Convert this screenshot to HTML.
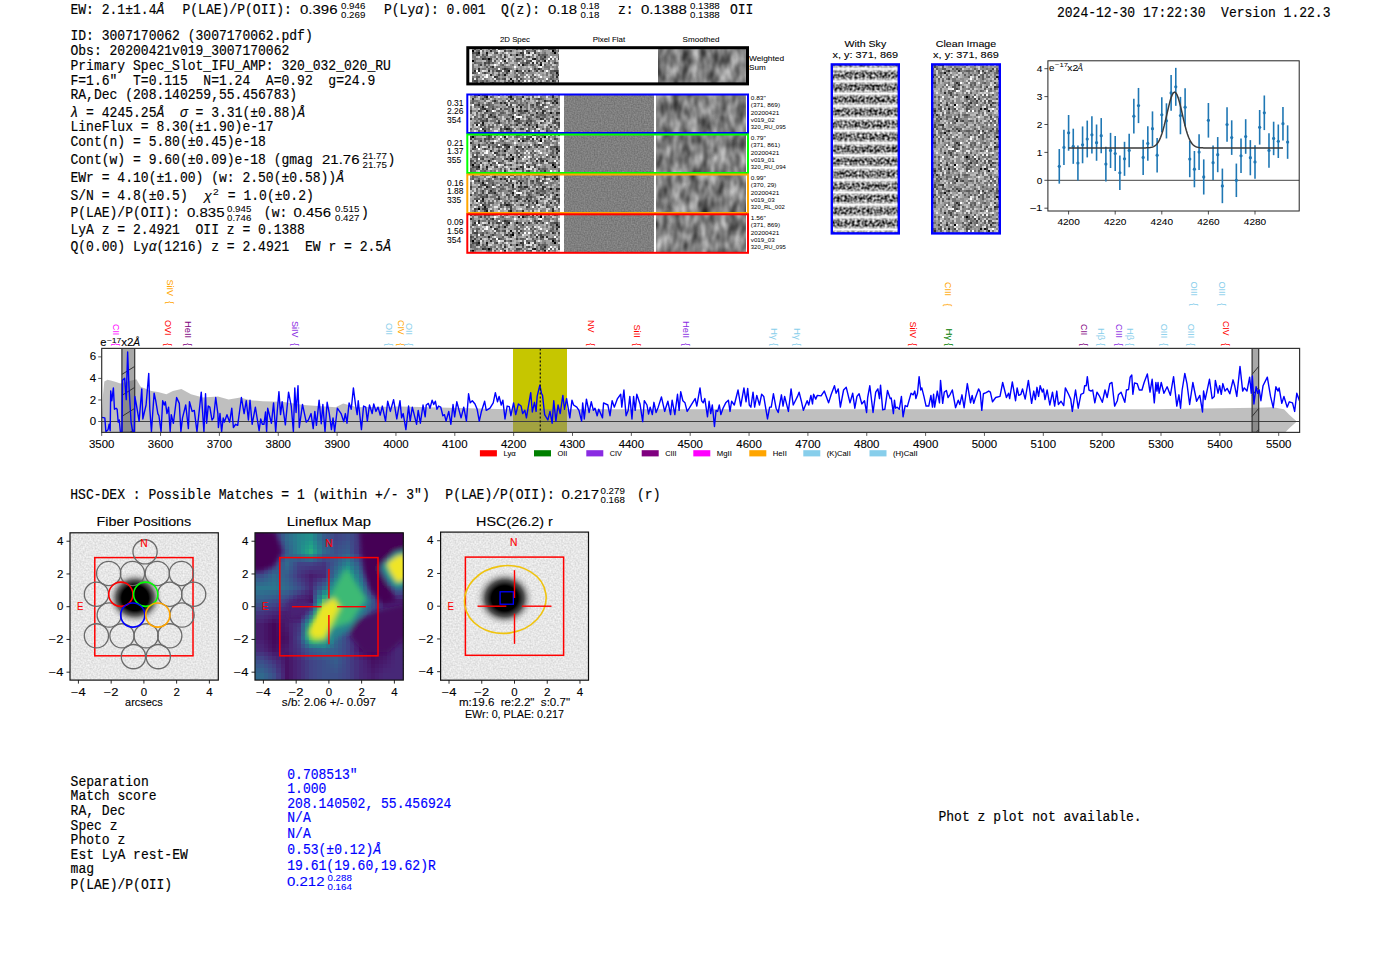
<!DOCTYPE html>
<html><head><meta charset="utf-8"><title>ELiXer report</title>
<style>html,body{margin:0;padding:0;background:#fff;overflow:hidden;width:1400px;height:953px}svg{display:block}</style>
</head><body>
<svg width="1400" height="953" viewBox="0 0 1400 953">
<defs><filter id="nz" x="0" y="0" width="1" height="1" color-interpolation-filters="sRGB"><feTurbulence type="fractalNoise" baseFrequency="0.42" numOctaves="1" seed="7"/><feColorMatrix type="matrix" values="1 0 0 0 0 1 0 0 0 0 1 0 0 0 0 0 0 0 0 1"/><feComponentTransfer><feFuncR type="linear" slope="1.45" intercept="-0.17"/><feFuncG type="linear" slope="1.45" intercept="-0.17"/><feFuncB type="linear" slope="1.45" intercept="-0.17"/><feFuncA type="linear" slope="0" intercept="1"/></feComponentTransfer></filter><filter id="nz2" x="0" y="0" width="1" height="1" color-interpolation-filters="sRGB"><feTurbulence type="fractalNoise" baseFrequency="0.42" numOctaves="1" seed="11"/><feColorMatrix type="matrix" values="1 0 0 0 0 1 0 0 0 0 1 0 0 0 0 0 0 0 0 1"/><feComponentTransfer><feFuncR type="linear" slope="1.45" intercept="-0.17"/><feFuncG type="linear" slope="1.45" intercept="-0.17"/><feFuncB type="linear" slope="1.45" intercept="-0.17"/><feFuncA type="linear" slope="0" intercept="1"/></feComponentTransfer></filter><filter id="sm" x="0" y="0" width="1" height="1" color-interpolation-filters="sRGB"><feTurbulence type="fractalNoise" baseFrequency="0.11 0.06" numOctaves="2" seed="5"/><feColorMatrix type="matrix" values="1 0 0 0 0 1 0 0 0 0 1 0 0 0 0 0 0 0 0 1"/><feComponentTransfer><feFuncR type="linear" slope="0.8" intercept="0.1"/><feFuncG type="linear" slope="0.8" intercept="0.1"/><feFuncB type="linear" slope="0.8" intercept="0.1"/><feFuncA type="linear" slope="0" intercept="1"/></feComponentTransfer></filter><filter id="sm2" x="0" y="0" width="1" height="1" color-interpolation-filters="sRGB"><feTurbulence type="fractalNoise" baseFrequency="0.11 0.06" numOctaves="2" seed="9"/><feColorMatrix type="matrix" values="1 0 0 0 0 1 0 0 0 0 1 0 0 0 0 0 0 0 0 1"/><feComponentTransfer><feFuncR type="linear" slope="0.8" intercept="0.1"/><feFuncG type="linear" slope="0.8" intercept="0.1"/><feFuncB type="linear" slope="0.8" intercept="0.1"/><feFuncA type="linear" slope="0" intercept="1"/></feComponentTransfer></filter><filter id="pf" x="0" y="0" width="1" height="1" color-interpolation-filters="sRGB"><feTurbulence type="fractalNoise" baseFrequency="0.7" numOctaves="1" seed="3"/><feColorMatrix type="matrix" values="1 0 0 0 0 1 0 0 0 0 1 0 0 0 0 0 0 0 0 1"/><feComponentTransfer><feFuncR type="linear" slope="0.22" intercept="0.39"/><feFuncG type="linear" slope="0.22" intercept="0.39"/><feFuncB type="linear" slope="0.22" intercept="0.39"/><feFuncA type="linear" slope="0" intercept="1"/></feComponentTransfer></filter><filter id="cl" x="0" y="0" width="1" height="1" color-interpolation-filters="sRGB"><feTurbulence type="fractalNoise" baseFrequency="0.5" numOctaves="1" seed="13"/><feColorMatrix type="matrix" values="1 0 0 0 0 1 0 0 0 0 1 0 0 0 0 0 0 0 0 1"/><feComponentTransfer><feFuncR type="linear" slope="1.1" intercept="0.0"/><feFuncG type="linear" slope="1.1" intercept="0.0"/><feFuncB type="linear" slope="1.1" intercept="0.0"/><feFuncA type="linear" slope="0" intercept="1"/></feComponentTransfer></filter><filter id="sky" x="0" y="0" width="1" height="1" color-interpolation-filters="sRGB"><feTurbulence type="fractalNoise" baseFrequency="0.4" numOctaves="1" seed="17"/><feColorMatrix type="matrix" values="1 0 0 0 0 1 0 0 0 0 1 0 0 0 0 0 0 0 0 1"/><feComponentTransfer><feFuncR type="linear" slope="1.7" intercept="-0.4"/><feFuncG type="linear" slope="1.7" intercept="-0.4"/><feFuncB type="linear" slope="1.7" intercept="-0.4"/><feFuncA type="linear" slope="0" intercept="1"/></feComponentTransfer></filter><filter id="bg" x="0" y="0" width="1" height="1" color-interpolation-filters="sRGB"><feTurbulence type="fractalNoise" baseFrequency="0.6" numOctaves="1" seed="21"/><feColorMatrix type="matrix" values="1 0 0 0 0 1 0 0 0 0 1 0 0 0 0 0 0 0 0 1"/><feComponentTransfer><feFuncR type="linear" slope="0.22" intercept="0.795"/><feFuncG type="linear" slope="0.22" intercept="0.795"/><feFuncB type="linear" slope="0.22" intercept="0.795"/><feFuncA type="linear" slope="0" intercept="1"/></feComponentTransfer></filter><pattern id="bp1" patternUnits="userSpaceOnUse" width="90" height="38"><path d="M62 6h2v2h-2zM12 12h2v2h-2zM22 12h2v2h-2zM14 14h2v2h-2zM38 20h2v2h-2zM22 22h2v2h-2zM0 26h2v2h-2z" fill="#000000"/><path d="M60 2h2v2h-2zM38 8h2v2h-2zM28 14h2v2h-2zM36 14h2v2h-2zM66 16h2v2h-2zM84 20h2v2h-2zM4 22h2v2h-2zM54 22h2v2h-2zM72 26h2v2h-2zM58 32h2v2h-2zM66 32h2v2h-2zM16 34h2v2h-2zM54 36h2v2h-2z" fill="#171717"/><path d="M16 0h2v2h-2zM44 0h2v2h-2zM12 4h2v2h-2zM62 4h2v2h-2zM68 4h2v2h-2zM56 6h2v2h-2zM60 6h2v2h-2zM2 8h2v2h-2zM6 8h2v2h-2zM86 8h2v2h-2zM40 12h2v2h-2zM70 14h2v2h-2zM78 14h2v2h-2zM4 18h2v2h-2zM54 18h2v2h-2zM32 20h2v2h-2zM82 20h2v2h-2zM0 24h2v2h-2zM82 24h2v2h-2zM68 26h2v2h-2zM20 28h2v2h-2zM42 28h2v2h-2zM28 30h2v2h-2zM54 30h2v2h-2zM88 30h2v2h-2zM24 32h2v2h-2zM28 32h2v2h-2zM38 32h2v2h-2zM78 32h2v2h-2zM18 36h2v2h-2zM40 36h2v2h-2z" fill="#2e2e2e"/><path d="M46 0h2v2h-2zM54 2h2v2h-2zM70 2h2v2h-2zM18 4h2v2h-2zM24 4h2v2h-2zM26 4h2v2h-2zM0 6h2v2h-2zM32 6h2v2h-2zM42 6h2v2h-2zM0 8h2v2h-2zM20 8h2v2h-2zM60 8h2v2h-2zM12 10h2v2h-2zM24 10h2v2h-2zM30 10h2v2h-2zM48 10h2v2h-2zM66 10h2v2h-2zM54 12h2v2h-2zM60 12h2v2h-2zM84 12h2v2h-2zM22 14h2v2h-2zM26 14h2v2h-2zM46 14h2v2h-2zM72 14h2v2h-2zM84 14h2v2h-2zM26 16h2v2h-2zM36 16h2v2h-2zM60 16h2v2h-2zM72 16h2v2h-2zM88 16h2v2h-2zM78 18h2v2h-2zM2 20h2v2h-2zM18 20h2v2h-2zM34 20h2v2h-2zM40 20h2v2h-2zM66 20h2v2h-2zM68 20h2v2h-2zM20 22h2v2h-2zM38 22h2v2h-2zM80 22h2v2h-2zM14 24h2v2h-2zM20 24h2v2h-2zM34 24h2v2h-2zM38 24h2v2h-2zM76 24h2v2h-2zM86 24h2v2h-2zM30 26h2v2h-2zM56 30h2v2h-2zM84 30h2v2h-2zM2 32h2v2h-2zM14 32h2v2h-2zM16 32h2v2h-2zM46 32h2v2h-2zM48 32h2v2h-2zM56 32h2v2h-2zM86 32h2v2h-2zM22 34h2v2h-2zM34 34h2v2h-2zM56 34h2v2h-2zM72 34h2v2h-2zM48 36h2v2h-2z" fill="#454545"/><path d="M12 0h2v2h-2zM26 0h2v2h-2zM28 0h2v2h-2zM66 0h2v2h-2zM68 0h2v2h-2zM80 0h2v2h-2zM84 0h2v2h-2zM10 2h2v2h-2zM22 2h2v2h-2zM26 2h2v2h-2zM46 2h2v2h-2zM48 2h2v2h-2zM52 2h2v2h-2zM66 2h2v2h-2zM82 2h2v2h-2zM6 4h2v2h-2zM14 4h2v2h-2zM22 4h2v2h-2zM32 4h2v2h-2zM36 4h2v2h-2zM44 4h2v2h-2zM58 4h2v2h-2zM82 4h2v2h-2zM26 6h2v2h-2zM30 6h2v2h-2zM54 6h2v2h-2zM80 6h2v2h-2zM84 6h2v2h-2zM88 6h2v2h-2zM22 8h2v2h-2zM26 8h2v2h-2zM52 8h2v2h-2zM76 8h2v2h-2zM0 10h2v2h-2zM8 10h2v2h-2zM10 10h2v2h-2zM14 10h2v2h-2zM20 10h2v2h-2zM42 10h2v2h-2zM44 10h2v2h-2zM50 10h2v2h-2zM70 10h2v2h-2zM72 10h2v2h-2zM82 10h2v2h-2zM14 12h2v2h-2zM18 12h2v2h-2zM20 12h2v2h-2zM28 12h2v2h-2zM76 12h2v2h-2zM24 14h2v2h-2zM44 14h2v2h-2zM2 16h2v2h-2zM4 16h2v2h-2zM20 16h2v2h-2zM28 16h2v2h-2zM32 16h2v2h-2zM50 16h2v2h-2zM54 16h2v2h-2zM0 18h2v2h-2zM18 18h2v2h-2zM20 18h2v2h-2zM34 18h2v2h-2zM72 18h2v2h-2zM76 18h2v2h-2zM0 20h2v2h-2zM10 20h2v2h-2zM36 20h2v2h-2zM46 20h2v2h-2zM52 20h2v2h-2zM70 20h2v2h-2zM8 22h2v2h-2zM40 22h2v2h-2zM44 22h2v2h-2zM66 22h2v2h-2zM76 22h2v2h-2zM78 22h2v2h-2zM88 22h2v2h-2zM16 24h2v2h-2zM24 24h2v2h-2zM36 24h2v2h-2zM42 24h2v2h-2zM56 24h2v2h-2zM72 24h2v2h-2zM78 24h2v2h-2zM4 26h2v2h-2zM34 26h2v2h-2zM52 26h2v2h-2zM74 26h2v2h-2zM82 26h2v2h-2zM36 28h2v2h-2zM40 28h2v2h-2zM0 30h2v2h-2zM38 30h2v2h-2zM52 30h2v2h-2zM58 30h2v2h-2zM10 32h2v2h-2zM12 32h2v2h-2zM42 32h2v2h-2zM50 32h2v2h-2zM54 32h2v2h-2zM68 32h2v2h-2zM70 32h2v2h-2zM74 32h2v2h-2zM10 34h2v2h-2zM24 34h2v2h-2zM12 36h2v2h-2zM16 36h2v2h-2zM66 36h2v2h-2zM82 36h2v2h-2z" fill="#5c5c5c"/><path d="M10 0h2v2h-2zM22 0h2v2h-2zM64 0h2v2h-2zM8 2h2v2h-2zM12 2h2v2h-2zM16 2h2v2h-2zM34 2h2v2h-2zM72 2h2v2h-2zM88 2h2v2h-2zM0 4h2v2h-2zM8 4h2v2h-2zM30 4h2v2h-2zM54 4h2v2h-2zM72 4h2v2h-2zM2 6h2v2h-2zM4 6h2v2h-2zM18 6h2v2h-2zM20 6h2v2h-2zM40 6h2v2h-2zM44 6h2v2h-2zM58 6h2v2h-2zM68 6h2v2h-2zM70 6h2v2h-2zM16 8h2v2h-2zM34 8h2v2h-2zM40 8h2v2h-2zM58 8h2v2h-2zM66 8h2v2h-2zM80 8h2v2h-2zM2 10h2v2h-2zM38 10h2v2h-2zM52 10h2v2h-2zM74 10h2v2h-2zM86 10h2v2h-2zM26 12h2v2h-2zM32 12h2v2h-2zM44 12h2v2h-2zM58 12h2v2h-2zM72 12h2v2h-2zM78 12h2v2h-2zM82 12h2v2h-2zM4 14h2v2h-2zM12 14h2v2h-2zM52 14h2v2h-2zM76 14h2v2h-2zM88 14h2v2h-2zM0 16h2v2h-2zM6 16h2v2h-2zM18 16h2v2h-2zM22 16h2v2h-2zM68 16h2v2h-2zM82 16h2v2h-2zM2 18h2v2h-2zM22 18h2v2h-2zM24 18h2v2h-2zM30 18h2v2h-2zM32 18h2v2h-2zM40 18h2v2h-2zM44 18h2v2h-2zM50 18h2v2h-2zM86 18h2v2h-2zM4 20h2v2h-2zM14 20h2v2h-2zM24 20h2v2h-2zM26 20h2v2h-2zM58 20h2v2h-2zM86 20h2v2h-2zM2 22h2v2h-2zM14 22h2v2h-2zM24 22h2v2h-2zM36 22h2v2h-2zM64 22h2v2h-2zM68 22h2v2h-2zM72 22h2v2h-2zM86 22h2v2h-2zM8 24h2v2h-2zM26 24h2v2h-2zM28 24h2v2h-2zM30 24h2v2h-2zM40 24h2v2h-2zM50 24h2v2h-2zM54 24h2v2h-2zM70 24h2v2h-2zM74 24h2v2h-2zM10 26h2v2h-2zM22 26h2v2h-2zM28 26h2v2h-2zM38 26h2v2h-2zM50 26h2v2h-2zM62 26h2v2h-2zM76 26h2v2h-2zM80 26h2v2h-2zM88 26h2v2h-2zM4 28h2v2h-2zM6 28h2v2h-2zM8 28h2v2h-2zM12 28h2v2h-2zM16 28h2v2h-2zM22 28h2v2h-2zM46 28h2v2h-2zM48 28h2v2h-2zM54 28h2v2h-2zM84 28h2v2h-2zM8 30h2v2h-2zM16 30h2v2h-2zM22 30h2v2h-2zM24 30h2v2h-2zM32 30h2v2h-2zM34 30h2v2h-2zM42 30h2v2h-2zM44 30h2v2h-2zM46 30h2v2h-2zM60 30h2v2h-2zM66 30h2v2h-2zM86 30h2v2h-2zM0 32h2v2h-2zM18 32h2v2h-2zM22 32h2v2h-2zM64 32h2v2h-2zM80 32h2v2h-2zM84 32h2v2h-2zM6 34h2v2h-2zM12 34h2v2h-2zM18 34h2v2h-2zM32 34h2v2h-2zM36 34h2v2h-2zM42 34h2v2h-2zM48 34h2v2h-2zM52 34h2v2h-2zM64 34h2v2h-2zM68 34h2v2h-2zM70 34h2v2h-2zM76 34h2v2h-2zM6 36h2v2h-2zM20 36h2v2h-2zM52 36h2v2h-2zM70 36h2v2h-2zM72 36h2v2h-2z" fill="#737373"/><path d="M24 0h2v2h-2zM32 0h2v2h-2zM48 0h2v2h-2zM52 0h2v2h-2zM54 0h2v2h-2zM58 0h2v2h-2zM72 0h2v2h-2zM76 0h2v2h-2zM82 0h2v2h-2zM86 0h2v2h-2zM0 2h2v2h-2zM2 2h2v2h-2zM14 2h2v2h-2zM36 2h2v2h-2zM42 2h2v2h-2zM50 2h2v2h-2zM74 2h2v2h-2zM80 2h2v2h-2zM28 4h2v2h-2zM34 4h2v2h-2zM38 4h2v2h-2zM48 4h2v2h-2zM66 4h2v2h-2zM76 4h2v2h-2zM86 4h2v2h-2zM6 6h2v2h-2zM8 6h2v2h-2zM14 6h2v2h-2zM24 6h2v2h-2zM46 6h2v2h-2zM48 6h2v2h-2zM50 6h2v2h-2zM66 6h2v2h-2zM82 6h2v2h-2zM12 8h2v2h-2zM28 8h2v2h-2zM32 8h2v2h-2zM36 8h2v2h-2zM48 8h2v2h-2zM50 8h2v2h-2zM82 8h2v2h-2zM18 10h2v2h-2zM22 10h2v2h-2zM26 10h2v2h-2zM54 10h2v2h-2zM68 10h2v2h-2zM84 10h2v2h-2zM2 12h2v2h-2zM4 12h2v2h-2zM16 12h2v2h-2zM36 12h2v2h-2zM42 12h2v2h-2zM56 12h2v2h-2zM80 12h2v2h-2zM2 14h2v2h-2zM10 14h2v2h-2zM16 14h2v2h-2zM20 14h2v2h-2zM32 14h2v2h-2zM66 14h2v2h-2zM68 14h2v2h-2zM86 14h2v2h-2zM10 16h2v2h-2zM12 16h2v2h-2zM14 16h2v2h-2zM16 16h2v2h-2zM24 16h2v2h-2zM34 16h2v2h-2zM44 16h2v2h-2zM48 16h2v2h-2zM62 16h2v2h-2zM64 16h2v2h-2zM70 16h2v2h-2zM6 18h2v2h-2zM8 18h2v2h-2zM36 18h2v2h-2zM42 18h2v2h-2zM48 18h2v2h-2zM56 18h2v2h-2zM64 18h2v2h-2zM80 18h2v2h-2zM82 18h2v2h-2zM22 20h2v2h-2zM28 20h2v2h-2zM30 20h2v2h-2zM50 20h2v2h-2zM74 20h2v2h-2zM76 20h2v2h-2zM12 22h2v2h-2zM52 22h2v2h-2zM58 22h2v2h-2zM60 22h2v2h-2zM12 24h2v2h-2zM44 24h2v2h-2zM66 24h2v2h-2zM6 26h2v2h-2zM8 26h2v2h-2zM16 26h2v2h-2zM60 26h2v2h-2zM84 26h2v2h-2zM14 28h2v2h-2zM28 28h2v2h-2zM34 28h2v2h-2zM50 28h2v2h-2zM52 28h2v2h-2zM56 28h2v2h-2zM58 28h2v2h-2zM60 28h2v2h-2zM70 28h2v2h-2zM82 28h2v2h-2zM4 30h2v2h-2zM6 30h2v2h-2zM14 30h2v2h-2zM30 30h2v2h-2zM40 30h2v2h-2zM50 30h2v2h-2zM62 30h2v2h-2zM70 30h2v2h-2zM76 30h2v2h-2zM78 30h2v2h-2zM82 30h2v2h-2zM44 32h2v2h-2zM14 34h2v2h-2zM26 34h2v2h-2zM38 34h2v2h-2zM54 34h2v2h-2zM58 34h2v2h-2zM78 34h2v2h-2zM80 34h2v2h-2zM82 34h2v2h-2zM88 34h2v2h-2zM2 36h2v2h-2zM14 36h2v2h-2zM26 36h2v2h-2zM42 36h2v2h-2zM46 36h2v2h-2zM50 36h2v2h-2zM56 36h2v2h-2zM64 36h2v2h-2zM74 36h2v2h-2z" fill="#8b8b8b"/><path d="M2 0h2v2h-2zM6 0h2v2h-2zM8 0h2v2h-2zM14 0h2v2h-2zM20 0h2v2h-2zM38 0h2v2h-2zM40 0h2v2h-2zM50 0h2v2h-2zM60 0h2v2h-2zM62 0h2v2h-2zM70 0h2v2h-2zM4 2h2v2h-2zM18 2h2v2h-2zM28 2h2v2h-2zM30 2h2v2h-2zM38 2h2v2h-2zM76 2h2v2h-2zM78 2h2v2h-2zM86 2h2v2h-2zM4 4h2v2h-2zM40 4h2v2h-2zM42 4h2v2h-2zM60 4h2v2h-2zM64 4h2v2h-2zM70 4h2v2h-2zM84 4h2v2h-2zM10 6h2v2h-2zM12 6h2v2h-2zM22 6h2v2h-2zM36 6h2v2h-2zM38 6h2v2h-2zM78 6h2v2h-2zM8 8h2v2h-2zM10 8h2v2h-2zM18 8h2v2h-2zM30 8h2v2h-2zM46 8h2v2h-2zM62 8h2v2h-2zM68 8h2v2h-2zM70 8h2v2h-2zM74 8h2v2h-2zM28 10h2v2h-2zM64 10h2v2h-2zM88 10h2v2h-2zM6 12h2v2h-2zM8 12h2v2h-2zM24 12h2v2h-2zM38 12h2v2h-2zM46 12h2v2h-2zM62 12h2v2h-2zM66 12h2v2h-2zM0 14h2v2h-2zM6 14h2v2h-2zM8 14h2v2h-2zM34 14h2v2h-2zM38 14h2v2h-2zM40 14h2v2h-2zM50 14h2v2h-2zM58 14h2v2h-2zM60 14h2v2h-2zM8 16h2v2h-2zM42 16h2v2h-2zM46 16h2v2h-2zM56 16h2v2h-2zM86 16h2v2h-2zM12 18h2v2h-2zM16 18h2v2h-2zM38 18h2v2h-2zM88 18h2v2h-2zM6 20h2v2h-2zM20 20h2v2h-2zM44 20h2v2h-2zM54 20h2v2h-2zM62 20h2v2h-2zM64 20h2v2h-2zM72 20h2v2h-2zM88 20h2v2h-2zM0 22h2v2h-2zM10 22h2v2h-2zM26 22h2v2h-2zM28 22h2v2h-2zM30 22h2v2h-2zM48 22h2v2h-2zM70 22h2v2h-2zM4 24h2v2h-2zM6 24h2v2h-2zM18 24h2v2h-2zM22 24h2v2h-2zM32 24h2v2h-2zM46 24h2v2h-2zM58 24h2v2h-2zM64 24h2v2h-2zM18 26h2v2h-2zM32 26h2v2h-2zM36 26h2v2h-2zM48 26h2v2h-2zM54 26h2v2h-2zM66 26h2v2h-2zM78 26h2v2h-2zM2 28h2v2h-2zM10 28h2v2h-2zM24 28h2v2h-2zM26 28h2v2h-2zM32 28h2v2h-2zM38 28h2v2h-2zM62 28h2v2h-2zM68 28h2v2h-2zM72 28h2v2h-2zM76 28h2v2h-2zM86 28h2v2h-2zM2 30h2v2h-2zM20 30h2v2h-2zM26 30h2v2h-2zM36 30h2v2h-2zM68 30h2v2h-2zM72 30h2v2h-2zM74 30h2v2h-2zM8 32h2v2h-2zM30 32h2v2h-2zM62 32h2v2h-2zM76 32h2v2h-2zM0 34h2v2h-2zM2 34h2v2h-2zM8 34h2v2h-2zM20 34h2v2h-2zM62 34h2v2h-2zM74 34h2v2h-2zM84 34h2v2h-2zM0 36h2v2h-2zM4 36h2v2h-2zM10 36h2v2h-2zM24 36h2v2h-2zM28 36h2v2h-2zM30 36h2v2h-2zM60 36h2v2h-2zM62 36h2v2h-2zM78 36h2v2h-2zM80 36h2v2h-2z" fill="#a2a2a2"/><path d="M4 0h2v2h-2zM18 0h2v2h-2zM30 0h2v2h-2zM56 0h2v2h-2zM88 0h2v2h-2zM20 2h2v2h-2zM40 2h2v2h-2zM58 2h2v2h-2zM62 2h2v2h-2zM10 4h2v2h-2zM16 4h2v2h-2zM46 4h2v2h-2zM50 4h2v2h-2zM52 4h2v2h-2zM56 4h2v2h-2zM80 4h2v2h-2zM88 4h2v2h-2zM16 6h2v2h-2zM34 6h2v2h-2zM74 6h2v2h-2zM76 6h2v2h-2zM4 8h2v2h-2zM24 8h2v2h-2zM42 8h2v2h-2zM54 8h2v2h-2zM56 8h2v2h-2zM72 8h2v2h-2zM78 8h2v2h-2zM84 8h2v2h-2zM88 8h2v2h-2zM32 10h2v2h-2zM36 10h2v2h-2zM40 10h2v2h-2zM58 10h2v2h-2zM62 10h2v2h-2zM78 10h2v2h-2zM80 10h2v2h-2zM0 12h2v2h-2zM10 12h2v2h-2zM34 12h2v2h-2zM64 12h2v2h-2zM68 12h2v2h-2zM86 12h2v2h-2zM54 14h2v2h-2zM62 14h2v2h-2zM64 14h2v2h-2zM30 16h2v2h-2zM52 16h2v2h-2zM74 16h2v2h-2zM26 18h2v2h-2zM62 18h2v2h-2zM66 18h2v2h-2zM68 18h2v2h-2zM70 18h2v2h-2zM74 18h2v2h-2zM42 20h2v2h-2zM48 20h2v2h-2zM60 20h2v2h-2zM16 22h2v2h-2zM32 22h2v2h-2zM34 22h2v2h-2zM46 22h2v2h-2zM60 24h2v2h-2zM62 24h2v2h-2zM88 24h2v2h-2zM14 26h2v2h-2zM20 26h2v2h-2zM24 26h2v2h-2zM26 26h2v2h-2zM40 26h2v2h-2zM42 26h2v2h-2zM58 26h2v2h-2zM64 26h2v2h-2zM86 26h2v2h-2zM30 28h2v2h-2zM44 28h2v2h-2zM66 28h2v2h-2zM74 28h2v2h-2zM80 28h2v2h-2zM12 30h2v2h-2zM18 30h2v2h-2zM64 30h2v2h-2zM4 32h2v2h-2zM20 32h2v2h-2zM36 32h2v2h-2zM40 32h2v2h-2zM82 32h2v2h-2zM88 32h2v2h-2zM4 34h2v2h-2zM30 34h2v2h-2zM40 34h2v2h-2zM44 34h2v2h-2zM46 34h2v2h-2zM50 34h2v2h-2zM60 34h2v2h-2zM66 34h2v2h-2zM86 34h2v2h-2zM8 36h2v2h-2zM34 36h2v2h-2zM38 36h2v2h-2zM44 36h2v2h-2zM58 36h2v2h-2zM86 36h2v2h-2z" fill="#b9b9b9"/><path d="M56 2h2v2h-2zM64 2h2v2h-2zM68 2h2v2h-2zM84 2h2v2h-2zM2 4h2v2h-2zM20 4h2v2h-2zM52 6h2v2h-2zM64 6h2v2h-2zM64 8h2v2h-2zM4 10h2v2h-2zM6 10h2v2h-2zM16 10h2v2h-2zM34 10h2v2h-2zM56 10h2v2h-2zM60 10h2v2h-2zM50 12h2v2h-2zM52 12h2v2h-2zM70 12h2v2h-2zM18 14h2v2h-2zM30 14h2v2h-2zM42 14h2v2h-2zM48 14h2v2h-2zM80 14h2v2h-2zM38 16h2v2h-2zM40 16h2v2h-2zM58 16h2v2h-2zM78 16h2v2h-2zM84 16h2v2h-2zM14 18h2v2h-2zM28 18h2v2h-2zM46 18h2v2h-2zM52 18h2v2h-2zM58 18h2v2h-2zM60 18h2v2h-2zM84 18h2v2h-2zM16 20h2v2h-2zM56 20h2v2h-2zM78 20h2v2h-2zM80 20h2v2h-2zM18 22h2v2h-2zM42 22h2v2h-2zM62 22h2v2h-2zM2 24h2v2h-2zM10 24h2v2h-2zM52 24h2v2h-2zM80 24h2v2h-2zM12 26h2v2h-2zM46 26h2v2h-2zM56 26h2v2h-2zM70 26h2v2h-2zM78 28h2v2h-2zM10 30h2v2h-2zM34 32h2v2h-2zM22 36h2v2h-2zM32 36h2v2h-2zM68 36h2v2h-2z" fill="#d0d0d0"/><path d="M34 0h2v2h-2zM42 0h2v2h-2zM74 0h2v2h-2zM78 0h2v2h-2zM24 2h2v2h-2zM32 2h2v2h-2zM44 2h2v2h-2zM72 6h2v2h-2zM86 6h2v2h-2zM44 8h2v2h-2zM76 10h2v2h-2zM30 12h2v2h-2zM74 12h2v2h-2zM88 12h2v2h-2zM56 14h2v2h-2zM82 14h2v2h-2zM76 16h2v2h-2zM80 16h2v2h-2zM12 20h2v2h-2zM6 22h2v2h-2zM56 22h2v2h-2zM74 22h2v2h-2zM82 22h2v2h-2zM84 22h2v2h-2zM48 24h2v2h-2zM68 24h2v2h-2zM84 24h2v2h-2zM2 26h2v2h-2zM18 28h2v2h-2zM88 28h2v2h-2zM80 30h2v2h-2zM32 32h2v2h-2zM52 32h2v2h-2zM60 32h2v2h-2zM72 32h2v2h-2zM76 36h2v2h-2zM84 36h2v2h-2zM88 36h2v2h-2z" fill="#e7e7e7"/><path d="M0 0h2v2h-2zM36 0h2v2h-2zM6 2h2v2h-2zM74 4h2v2h-2zM78 4h2v2h-2zM28 6h2v2h-2zM14 8h2v2h-2zM46 10h2v2h-2zM48 12h2v2h-2zM74 14h2v2h-2zM10 18h2v2h-2zM8 20h2v2h-2zM50 22h2v2h-2zM44 26h2v2h-2zM0 28h2v2h-2zM64 28h2v2h-2zM48 30h2v2h-2zM6 32h2v2h-2zM26 32h2v2h-2zM28 34h2v2h-2zM36 36h2v2h-2z" fill="#ffffff"/></pattern><pattern id="bp2" patternUnits="userSpaceOnUse" width="90" height="38"><path d="M28 18h2v2h-2z" fill="#000000"/><path d="M62 2h2v2h-2zM16 4h2v2h-2zM32 8h2v2h-2zM26 10h2v2h-2zM86 12h2v2h-2zM56 14h2v2h-2zM34 16h2v2h-2zM36 20h2v2h-2zM60 20h2v2h-2zM16 26h2v2h-2zM32 30h2v2h-2zM70 30h2v2h-2zM62 32h2v2h-2zM36 34h2v2h-2zM10 36h2v2h-2z" fill="#171717"/><path d="M40 0h2v2h-2zM44 2h2v2h-2zM0 4h2v2h-2zM68 4h2v2h-2zM48 8h2v2h-2zM76 8h2v2h-2zM32 10h2v2h-2zM66 10h2v2h-2zM78 10h2v2h-2zM86 10h2v2h-2zM10 12h2v2h-2zM32 14h2v2h-2zM58 14h2v2h-2zM12 18h2v2h-2zM34 18h2v2h-2zM12 20h2v2h-2zM72 20h2v2h-2zM22 22h2v2h-2zM4 24h2v2h-2zM14 24h2v2h-2zM44 24h2v2h-2zM12 26h2v2h-2zM50 26h2v2h-2zM54 26h2v2h-2zM28 28h2v2h-2zM56 28h2v2h-2zM34 32h2v2h-2zM2 34h2v2h-2zM62 34h2v2h-2zM68 34h2v2h-2zM74 34h2v2h-2zM76 34h2v2h-2zM2 36h2v2h-2zM16 36h2v2h-2zM18 36h2v2h-2zM86 36h2v2h-2z" fill="#2e2e2e"/><path d="M32 0h2v2h-2zM68 0h2v2h-2zM82 0h2v2h-2zM12 2h2v2h-2zM32 2h2v2h-2zM38 2h2v2h-2zM86 2h2v2h-2zM2 4h2v2h-2zM20 4h2v2h-2zM36 4h2v2h-2zM56 4h2v2h-2zM62 4h2v2h-2zM78 4h2v2h-2zM4 6h2v2h-2zM14 6h2v2h-2zM32 6h2v2h-2zM36 6h2v2h-2zM48 6h2v2h-2zM64 6h2v2h-2zM66 6h2v2h-2zM80 6h2v2h-2zM0 8h2v2h-2zM14 8h2v2h-2zM18 8h2v2h-2zM68 8h2v2h-2zM18 10h2v2h-2zM74 10h2v2h-2zM54 12h2v2h-2zM82 12h2v2h-2zM50 14h2v2h-2zM54 14h2v2h-2zM70 14h2v2h-2zM72 14h2v2h-2zM6 16h2v2h-2zM60 16h2v2h-2zM76 16h2v2h-2zM24 18h2v2h-2zM32 18h2v2h-2zM36 18h2v2h-2zM60 18h2v2h-2zM34 20h2v2h-2zM58 20h2v2h-2zM16 22h2v2h-2zM32 22h2v2h-2zM60 22h2v2h-2zM62 22h2v2h-2zM78 22h2v2h-2zM88 22h2v2h-2zM58 24h2v2h-2zM86 26h2v2h-2zM88 26h2v2h-2zM2 28h2v2h-2zM60 28h2v2h-2zM68 28h2v2h-2zM82 28h2v2h-2zM86 28h2v2h-2zM66 30h2v2h-2zM0 32h2v2h-2zM32 32h2v2h-2zM42 32h2v2h-2zM50 32h2v2h-2zM4 34h2v2h-2zM20 34h2v2h-2zM28 34h2v2h-2zM70 34h2v2h-2z" fill="#454545"/><path d="M0 0h2v2h-2zM2 0h2v2h-2zM4 0h2v2h-2zM16 0h2v2h-2zM48 0h2v2h-2zM58 0h2v2h-2zM60 0h2v2h-2zM80 0h2v2h-2zM4 2h2v2h-2zM24 2h2v2h-2zM40 2h2v2h-2zM42 2h2v2h-2zM76 2h2v2h-2zM88 2h2v2h-2zM28 4h2v2h-2zM30 4h2v2h-2zM46 4h2v2h-2zM58 4h2v2h-2zM66 4h2v2h-2zM30 6h2v2h-2zM34 6h2v2h-2zM58 6h2v2h-2zM68 6h2v2h-2zM76 6h2v2h-2zM78 6h2v2h-2zM12 8h2v2h-2zM16 8h2v2h-2zM24 8h2v2h-2zM26 8h2v2h-2zM28 8h2v2h-2zM46 8h2v2h-2zM70 8h2v2h-2zM80 8h2v2h-2zM8 10h2v2h-2zM30 10h2v2h-2zM60 10h2v2h-2zM14 12h2v2h-2zM18 12h2v2h-2zM30 12h2v2h-2zM34 12h2v2h-2zM38 12h2v2h-2zM40 12h2v2h-2zM42 12h2v2h-2zM58 12h2v2h-2zM2 14h2v2h-2zM6 14h2v2h-2zM16 14h2v2h-2zM20 14h2v2h-2zM34 14h2v2h-2zM38 14h2v2h-2zM60 14h2v2h-2zM78 14h2v2h-2zM84 14h2v2h-2zM28 16h2v2h-2zM50 16h2v2h-2zM78 16h2v2h-2zM88 16h2v2h-2zM26 18h2v2h-2zM48 18h2v2h-2zM24 20h2v2h-2zM40 20h2v2h-2zM82 20h2v2h-2zM0 22h2v2h-2zM36 22h2v2h-2zM70 22h2v2h-2zM76 22h2v2h-2zM86 22h2v2h-2zM6 24h2v2h-2zM10 24h2v2h-2zM16 24h2v2h-2zM22 24h2v2h-2zM42 24h2v2h-2zM64 24h2v2h-2zM22 26h2v2h-2zM28 26h2v2h-2zM38 26h2v2h-2zM76 26h2v2h-2zM4 28h2v2h-2zM24 28h2v2h-2zM26 28h2v2h-2zM32 28h2v2h-2zM36 28h2v2h-2zM38 28h2v2h-2zM72 28h2v2h-2zM80 28h2v2h-2zM0 30h2v2h-2zM2 30h2v2h-2zM42 30h2v2h-2zM58 30h2v2h-2zM60 30h2v2h-2zM82 30h2v2h-2zM88 30h2v2h-2zM30 32h2v2h-2zM54 32h2v2h-2zM56 32h2v2h-2zM70 32h2v2h-2zM84 32h2v2h-2zM30 34h2v2h-2zM38 34h2v2h-2zM48 34h2v2h-2zM20 36h2v2h-2zM26 36h2v2h-2zM34 36h2v2h-2zM42 36h2v2h-2zM50 36h2v2h-2zM52 36h2v2h-2zM62 36h2v2h-2zM70 36h2v2h-2zM72 36h2v2h-2zM78 36h2v2h-2z" fill="#5c5c5c"/><path d="M8 0h2v2h-2zM26 0h2v2h-2zM30 0h2v2h-2zM38 0h2v2h-2zM42 0h2v2h-2zM44 0h2v2h-2zM50 0h2v2h-2zM70 0h2v2h-2zM86 0h2v2h-2zM88 0h2v2h-2zM2 2h2v2h-2zM26 2h2v2h-2zM60 2h2v2h-2zM72 2h2v2h-2zM78 2h2v2h-2zM80 2h2v2h-2zM6 4h2v2h-2zM8 4h2v2h-2zM14 4h2v2h-2zM18 4h2v2h-2zM24 4h2v2h-2zM34 4h2v2h-2zM44 4h2v2h-2zM80 4h2v2h-2zM8 6h2v2h-2zM12 6h2v2h-2zM26 6h2v2h-2zM40 6h2v2h-2zM42 6h2v2h-2zM44 6h2v2h-2zM54 6h2v2h-2zM70 6h2v2h-2zM72 6h2v2h-2zM82 6h2v2h-2zM84 6h2v2h-2zM2 8h2v2h-2zM44 8h2v2h-2zM50 8h2v2h-2zM58 8h2v2h-2zM66 8h2v2h-2zM84 8h2v2h-2zM16 10h2v2h-2zM22 10h2v2h-2zM38 10h2v2h-2zM42 10h2v2h-2zM46 10h2v2h-2zM54 10h2v2h-2zM56 10h2v2h-2zM64 10h2v2h-2zM72 10h2v2h-2zM80 10h2v2h-2zM84 10h2v2h-2zM6 12h2v2h-2zM50 12h2v2h-2zM78 12h2v2h-2zM8 14h2v2h-2zM14 14h2v2h-2zM26 14h2v2h-2zM36 14h2v2h-2zM52 14h2v2h-2zM62 14h2v2h-2zM8 16h2v2h-2zM10 16h2v2h-2zM16 16h2v2h-2zM38 16h2v2h-2zM52 16h2v2h-2zM56 16h2v2h-2zM58 16h2v2h-2zM84 16h2v2h-2zM18 18h2v2h-2zM76 18h2v2h-2zM82 18h2v2h-2zM0 20h2v2h-2zM42 20h2v2h-2zM66 20h2v2h-2zM2 22h2v2h-2zM12 22h2v2h-2zM14 22h2v2h-2zM30 22h2v2h-2zM44 22h2v2h-2zM56 22h2v2h-2zM66 22h2v2h-2zM68 22h2v2h-2zM84 22h2v2h-2zM8 24h2v2h-2zM24 24h2v2h-2zM26 24h2v2h-2zM34 24h2v2h-2zM46 24h2v2h-2zM52 24h2v2h-2zM70 24h2v2h-2zM74 24h2v2h-2zM88 24h2v2h-2zM4 26h2v2h-2zM14 26h2v2h-2zM20 26h2v2h-2zM40 26h2v2h-2zM44 26h2v2h-2zM46 26h2v2h-2zM52 26h2v2h-2zM56 26h2v2h-2zM60 26h2v2h-2zM62 26h2v2h-2zM64 26h2v2h-2zM66 26h2v2h-2zM70 26h2v2h-2zM14 28h2v2h-2zM40 28h2v2h-2zM42 28h2v2h-2zM70 28h2v2h-2zM76 28h2v2h-2zM88 28h2v2h-2zM10 30h2v2h-2zM12 30h2v2h-2zM20 30h2v2h-2zM24 30h2v2h-2zM28 30h2v2h-2zM30 30h2v2h-2zM38 30h2v2h-2zM40 30h2v2h-2zM46 30h2v2h-2zM74 30h2v2h-2zM76 30h2v2h-2zM80 30h2v2h-2zM86 30h2v2h-2zM6 32h2v2h-2zM10 32h2v2h-2zM18 32h2v2h-2zM20 32h2v2h-2zM36 32h2v2h-2zM38 32h2v2h-2zM44 32h2v2h-2zM58 32h2v2h-2zM76 32h2v2h-2zM88 32h2v2h-2zM40 34h2v2h-2zM46 34h2v2h-2zM52 34h2v2h-2zM58 34h2v2h-2zM72 34h2v2h-2zM82 34h2v2h-2zM84 34h2v2h-2zM0 36h2v2h-2zM6 36h2v2h-2zM8 36h2v2h-2zM12 36h2v2h-2zM36 36h2v2h-2zM40 36h2v2h-2zM44 36h2v2h-2zM54 36h2v2h-2zM64 36h2v2h-2zM74 36h2v2h-2z" fill="#737373"/><path d="M6 0h2v2h-2zM12 0h2v2h-2zM14 0h2v2h-2zM18 0h2v2h-2zM22 0h2v2h-2zM34 0h2v2h-2zM52 0h2v2h-2zM54 0h2v2h-2zM56 0h2v2h-2zM62 0h2v2h-2zM66 0h2v2h-2zM76 0h2v2h-2zM0 2h2v2h-2zM6 2h2v2h-2zM10 2h2v2h-2zM30 2h2v2h-2zM46 2h2v2h-2zM50 2h2v2h-2zM54 2h2v2h-2zM56 2h2v2h-2zM84 2h2v2h-2zM26 4h2v2h-2zM32 4h2v2h-2zM42 4h2v2h-2zM48 4h2v2h-2zM50 4h2v2h-2zM76 4h2v2h-2zM82 4h2v2h-2zM86 4h2v2h-2zM88 4h2v2h-2zM60 6h2v2h-2zM74 6h2v2h-2zM4 8h2v2h-2zM52 8h2v2h-2zM54 8h2v2h-2zM64 8h2v2h-2zM74 8h2v2h-2zM78 8h2v2h-2zM86 8h2v2h-2zM10 10h2v2h-2zM34 10h2v2h-2zM62 10h2v2h-2zM82 10h2v2h-2zM0 12h2v2h-2zM2 12h2v2h-2zM22 12h2v2h-2zM46 12h2v2h-2zM56 12h2v2h-2zM64 12h2v2h-2zM70 12h2v2h-2zM74 12h2v2h-2zM76 12h2v2h-2zM88 12h2v2h-2zM24 14h2v2h-2zM42 14h2v2h-2zM66 14h2v2h-2zM68 14h2v2h-2zM80 14h2v2h-2zM82 14h2v2h-2zM12 16h2v2h-2zM20 16h2v2h-2zM30 16h2v2h-2zM32 16h2v2h-2zM36 16h2v2h-2zM40 16h2v2h-2zM64 16h2v2h-2zM2 18h2v2h-2zM4 18h2v2h-2zM10 18h2v2h-2zM30 18h2v2h-2zM42 18h2v2h-2zM56 18h2v2h-2zM62 18h2v2h-2zM64 18h2v2h-2zM78 18h2v2h-2zM80 18h2v2h-2zM86 18h2v2h-2zM2 20h2v2h-2zM4 20h2v2h-2zM8 20h2v2h-2zM10 20h2v2h-2zM14 20h2v2h-2zM18 20h2v2h-2zM22 20h2v2h-2zM26 20h2v2h-2zM30 20h2v2h-2zM32 20h2v2h-2zM62 20h2v2h-2zM68 20h2v2h-2zM70 20h2v2h-2zM78 20h2v2h-2zM4 22h2v2h-2zM18 22h2v2h-2zM34 22h2v2h-2zM38 22h2v2h-2zM48 22h2v2h-2zM50 22h2v2h-2zM82 22h2v2h-2zM2 24h2v2h-2zM12 24h2v2h-2zM20 24h2v2h-2zM28 24h2v2h-2zM54 24h2v2h-2zM66 24h2v2h-2zM78 24h2v2h-2zM84 24h2v2h-2zM0 26h2v2h-2zM10 26h2v2h-2zM18 26h2v2h-2zM26 26h2v2h-2zM30 26h2v2h-2zM32 26h2v2h-2zM36 26h2v2h-2zM48 26h2v2h-2zM72 26h2v2h-2zM74 26h2v2h-2zM6 28h2v2h-2zM8 28h2v2h-2zM18 28h2v2h-2zM34 28h2v2h-2zM50 28h2v2h-2zM66 28h2v2h-2zM74 28h2v2h-2zM8 30h2v2h-2zM14 30h2v2h-2zM16 30h2v2h-2zM26 30h2v2h-2zM44 30h2v2h-2zM48 30h2v2h-2zM52 30h2v2h-2zM54 30h2v2h-2zM62 30h2v2h-2zM4 32h2v2h-2zM8 32h2v2h-2zM16 32h2v2h-2zM40 32h2v2h-2zM80 32h2v2h-2zM86 32h2v2h-2zM10 34h2v2h-2zM14 34h2v2h-2zM16 34h2v2h-2zM22 34h2v2h-2zM24 34h2v2h-2zM50 34h2v2h-2zM60 34h2v2h-2zM66 34h2v2h-2zM78 34h2v2h-2zM88 34h2v2h-2zM30 36h2v2h-2zM38 36h2v2h-2zM60 36h2v2h-2zM68 36h2v2h-2zM88 36h2v2h-2z" fill="#8b8b8b"/><path d="M10 0h2v2h-2zM28 0h2v2h-2zM72 0h2v2h-2zM84 0h2v2h-2zM8 2h2v2h-2zM14 2h2v2h-2zM16 2h2v2h-2zM18 2h2v2h-2zM20 2h2v2h-2zM34 2h2v2h-2zM58 2h2v2h-2zM12 4h2v2h-2zM22 4h2v2h-2zM60 4h2v2h-2zM72 4h2v2h-2zM84 4h2v2h-2zM16 6h2v2h-2zM18 6h2v2h-2zM22 6h2v2h-2zM24 6h2v2h-2zM28 6h2v2h-2zM38 6h2v2h-2zM50 6h2v2h-2zM52 6h2v2h-2zM20 8h2v2h-2zM22 8h2v2h-2zM34 8h2v2h-2zM36 8h2v2h-2zM40 8h2v2h-2zM60 8h2v2h-2zM2 10h2v2h-2zM12 10h2v2h-2zM20 10h2v2h-2zM48 10h2v2h-2zM52 10h2v2h-2zM58 10h2v2h-2zM68 10h2v2h-2zM76 10h2v2h-2zM88 10h2v2h-2zM8 12h2v2h-2zM12 12h2v2h-2zM28 12h2v2h-2zM32 12h2v2h-2zM36 12h2v2h-2zM44 12h2v2h-2zM48 12h2v2h-2zM60 12h2v2h-2zM68 12h2v2h-2zM80 12h2v2h-2zM0 14h2v2h-2zM4 14h2v2h-2zM12 14h2v2h-2zM18 14h2v2h-2zM22 14h2v2h-2zM28 14h2v2h-2zM44 14h2v2h-2zM46 14h2v2h-2zM74 14h2v2h-2zM22 16h2v2h-2zM42 16h2v2h-2zM48 16h2v2h-2zM70 16h2v2h-2zM72 16h2v2h-2zM80 16h2v2h-2zM86 16h2v2h-2zM0 18h2v2h-2zM20 18h2v2h-2zM46 18h2v2h-2zM52 18h2v2h-2zM72 18h2v2h-2zM74 18h2v2h-2zM84 18h2v2h-2zM16 20h2v2h-2zM20 20h2v2h-2zM50 20h2v2h-2zM52 20h2v2h-2zM64 20h2v2h-2zM10 22h2v2h-2zM24 22h2v2h-2zM42 22h2v2h-2zM46 22h2v2h-2zM52 22h2v2h-2zM54 22h2v2h-2zM58 22h2v2h-2zM0 24h2v2h-2zM18 24h2v2h-2zM30 24h2v2h-2zM32 24h2v2h-2zM40 24h2v2h-2zM50 24h2v2h-2zM68 24h2v2h-2zM76 24h2v2h-2zM24 26h2v2h-2zM68 26h2v2h-2zM78 26h2v2h-2zM80 26h2v2h-2zM84 26h2v2h-2zM12 28h2v2h-2zM16 28h2v2h-2zM30 28h2v2h-2zM44 28h2v2h-2zM46 28h2v2h-2zM48 28h2v2h-2zM52 28h2v2h-2zM54 28h2v2h-2zM84 28h2v2h-2zM34 30h2v2h-2zM50 30h2v2h-2zM72 30h2v2h-2zM84 30h2v2h-2zM2 32h2v2h-2zM12 32h2v2h-2zM26 32h2v2h-2zM52 32h2v2h-2zM60 32h2v2h-2zM66 32h2v2h-2zM72 32h2v2h-2zM74 32h2v2h-2zM82 32h2v2h-2zM6 34h2v2h-2zM18 34h2v2h-2zM26 34h2v2h-2zM32 34h2v2h-2zM54 34h2v2h-2zM14 36h2v2h-2zM46 36h2v2h-2zM48 36h2v2h-2zM58 36h2v2h-2zM66 36h2v2h-2zM76 36h2v2h-2zM80 36h2v2h-2zM82 36h2v2h-2zM84 36h2v2h-2z" fill="#a2a2a2"/><path d="M20 0h2v2h-2zM46 0h2v2h-2zM74 0h2v2h-2zM78 0h2v2h-2zM28 2h2v2h-2zM48 2h2v2h-2zM64 2h2v2h-2zM74 2h2v2h-2zM82 2h2v2h-2zM4 4h2v2h-2zM38 4h2v2h-2zM40 4h2v2h-2zM54 4h2v2h-2zM70 4h2v2h-2zM6 6h2v2h-2zM20 6h2v2h-2zM46 6h2v2h-2zM56 6h2v2h-2zM62 6h2v2h-2zM86 6h2v2h-2zM88 6h2v2h-2zM6 8h2v2h-2zM10 8h2v2h-2zM30 8h2v2h-2zM38 8h2v2h-2zM42 8h2v2h-2zM56 8h2v2h-2zM62 8h2v2h-2zM72 8h2v2h-2zM82 8h2v2h-2zM0 10h2v2h-2zM36 10h2v2h-2zM40 10h2v2h-2zM70 10h2v2h-2zM16 12h2v2h-2zM20 12h2v2h-2zM24 12h2v2h-2zM66 12h2v2h-2zM72 12h2v2h-2zM84 12h2v2h-2zM10 14h2v2h-2zM4 16h2v2h-2zM26 16h2v2h-2zM54 16h2v2h-2zM62 16h2v2h-2zM66 16h2v2h-2zM68 16h2v2h-2zM74 16h2v2h-2zM16 18h2v2h-2zM38 18h2v2h-2zM44 18h2v2h-2zM58 18h2v2h-2zM66 18h2v2h-2zM44 20h2v2h-2zM46 20h2v2h-2zM54 20h2v2h-2zM56 20h2v2h-2zM74 20h2v2h-2zM76 20h2v2h-2zM86 20h2v2h-2zM6 22h2v2h-2zM8 22h2v2h-2zM20 22h2v2h-2zM26 22h2v2h-2zM28 22h2v2h-2zM74 22h2v2h-2zM80 22h2v2h-2zM48 24h2v2h-2zM60 24h2v2h-2zM62 24h2v2h-2zM72 24h2v2h-2zM80 24h2v2h-2zM82 24h2v2h-2zM82 26h2v2h-2zM20 28h2v2h-2zM78 28h2v2h-2zM18 30h2v2h-2zM56 30h2v2h-2zM64 30h2v2h-2zM68 30h2v2h-2zM78 30h2v2h-2zM14 32h2v2h-2zM22 32h2v2h-2zM24 32h2v2h-2zM46 32h2v2h-2zM68 32h2v2h-2zM78 32h2v2h-2zM0 34h2v2h-2zM12 34h2v2h-2zM56 34h2v2h-2zM4 36h2v2h-2zM22 36h2v2h-2zM28 36h2v2h-2zM32 36h2v2h-2zM56 36h2v2h-2z" fill="#b9b9b9"/><path d="M24 0h2v2h-2zM36 0h2v2h-2zM36 2h2v2h-2zM52 2h2v2h-2zM10 4h2v2h-2zM52 4h2v2h-2zM64 4h2v2h-2zM74 4h2v2h-2zM0 6h2v2h-2zM8 8h2v2h-2zM88 8h2v2h-2zM4 10h2v2h-2zM6 10h2v2h-2zM14 10h2v2h-2zM24 10h2v2h-2zM44 10h2v2h-2zM4 12h2v2h-2zM26 12h2v2h-2zM52 12h2v2h-2zM62 12h2v2h-2zM40 14h2v2h-2zM48 14h2v2h-2zM64 14h2v2h-2zM86 14h2v2h-2zM0 16h2v2h-2zM2 16h2v2h-2zM14 16h2v2h-2zM6 18h2v2h-2zM8 18h2v2h-2zM14 18h2v2h-2zM22 18h2v2h-2zM40 18h2v2h-2zM50 18h2v2h-2zM68 18h2v2h-2zM88 18h2v2h-2zM28 20h2v2h-2zM38 20h2v2h-2zM80 20h2v2h-2zM84 20h2v2h-2zM40 22h2v2h-2zM64 22h2v2h-2zM72 22h2v2h-2zM36 24h2v2h-2zM38 24h2v2h-2zM86 24h2v2h-2zM2 26h2v2h-2zM6 26h2v2h-2zM34 26h2v2h-2zM42 26h2v2h-2zM58 26h2v2h-2zM10 28h2v2h-2zM58 28h2v2h-2zM64 28h2v2h-2zM4 30h2v2h-2zM22 30h2v2h-2zM28 32h2v2h-2zM48 32h2v2h-2zM64 32h2v2h-2zM8 34h2v2h-2zM34 34h2v2h-2zM44 34h2v2h-2zM64 34h2v2h-2zM80 34h2v2h-2zM86 34h2v2h-2zM24 36h2v2h-2z" fill="#d0d0d0"/><path d="M22 2h2v2h-2zM2 6h2v2h-2zM10 6h2v2h-2zM50 10h2v2h-2zM76 14h2v2h-2zM88 14h2v2h-2zM24 16h2v2h-2zM44 16h2v2h-2zM46 16h2v2h-2zM54 18h2v2h-2zM70 18h2v2h-2zM6 20h2v2h-2zM48 20h2v2h-2zM88 20h2v2h-2zM56 24h2v2h-2zM8 26h2v2h-2zM0 28h2v2h-2zM62 28h2v2h-2zM36 30h2v2h-2z" fill="#e7e7e7"/><path d="M64 0h2v2h-2zM66 2h2v2h-2zM68 2h2v2h-2zM70 2h2v2h-2zM28 10h2v2h-2zM30 14h2v2h-2zM18 16h2v2h-2zM82 16h2v2h-2zM22 28h2v2h-2zM6 30h2v2h-2zM42 34h2v2h-2z" fill="#ffffff"/></pattern><pattern id="bp3" patternUnits="userSpaceOnUse" width="70" height="60"><path d="M56 36h2v2h-2zM44 44h2v2h-2z" fill="#000000"/><path d="M46 0h2v2h-2zM34 12h2v2h-2zM16 16h2v2h-2zM20 36h2v2h-2zM0 48h2v2h-2zM4 48h2v2h-2zM38 48h2v2h-2zM8 50h2v2h-2z" fill="#171717"/><path d="M32 4h2v2h-2zM38 10h2v2h-2zM48 10h2v2h-2zM18 16h2v2h-2zM22 16h2v2h-2zM46 22h2v2h-2zM48 24h2v2h-2zM14 26h2v2h-2zM34 32h2v2h-2zM60 42h2v2h-2zM10 44h2v2h-2zM36 44h2v2h-2zM24 50h2v2h-2zM26 54h2v2h-2z" fill="#2e2e2e"/><path d="M18 0h2v2h-2zM52 0h2v2h-2zM24 4h2v2h-2zM30 4h2v2h-2zM24 6h2v2h-2zM12 8h2v2h-2zM46 8h2v2h-2zM2 10h2v2h-2zM10 10h2v2h-2zM18 10h2v2h-2zM68 10h2v2h-2zM4 12h2v2h-2zM24 14h2v2h-2zM68 16h2v2h-2zM18 18h2v2h-2zM38 18h2v2h-2zM20 20h2v2h-2zM14 22h2v2h-2zM22 22h2v2h-2zM24 22h2v2h-2zM6 26h2v2h-2zM16 26h2v2h-2zM18 26h2v2h-2zM46 28h2v2h-2zM40 32h2v2h-2zM40 34h2v2h-2zM20 38h2v2h-2zM64 38h2v2h-2zM68 38h2v2h-2zM8 40h2v2h-2zM66 40h2v2h-2zM12 42h2v2h-2zM28 44h2v2h-2zM58 44h2v2h-2zM6 48h2v2h-2zM44 48h2v2h-2zM56 48h2v2h-2zM22 54h2v2h-2zM10 56h2v2h-2zM18 58h2v2h-2zM30 58h2v2h-2zM44 58h2v2h-2zM46 58h2v2h-2z" fill="#454545"/><path d="M8 0h2v2h-2zM14 0h2v2h-2zM20 0h2v2h-2zM28 0h2v2h-2zM50 0h2v2h-2zM60 0h2v2h-2zM66 0h2v2h-2zM10 2h2v2h-2zM18 2h2v2h-2zM44 2h2v2h-2zM28 4h2v2h-2zM56 4h2v2h-2zM64 4h2v2h-2zM2 6h2v2h-2zM32 6h2v2h-2zM16 8h2v2h-2zM22 8h2v2h-2zM26 8h2v2h-2zM32 8h2v2h-2zM34 8h2v2h-2zM42 8h2v2h-2zM50 8h2v2h-2zM64 8h2v2h-2zM16 10h2v2h-2zM36 10h2v2h-2zM56 10h2v2h-2zM58 10h2v2h-2zM16 12h2v2h-2zM30 12h2v2h-2zM68 12h2v2h-2zM2 14h2v2h-2zM22 14h2v2h-2zM36 14h2v2h-2zM54 14h2v2h-2zM60 14h2v2h-2zM64 14h2v2h-2zM2 16h2v2h-2zM8 16h2v2h-2zM30 16h2v2h-2zM46 16h2v2h-2zM58 16h2v2h-2zM2 18h2v2h-2zM14 18h2v2h-2zM28 18h2v2h-2zM32 20h2v2h-2zM4 22h2v2h-2zM48 22h2v2h-2zM64 22h2v2h-2zM44 24h2v2h-2zM60 24h2v2h-2zM64 24h2v2h-2zM0 26h2v2h-2zM24 26h2v2h-2zM42 26h2v2h-2zM44 26h2v2h-2zM52 26h2v2h-2zM4 28h2v2h-2zM10 28h2v2h-2zM14 28h2v2h-2zM44 28h2v2h-2zM0 30h2v2h-2zM20 30h2v2h-2zM38 30h2v2h-2zM42 30h2v2h-2zM38 32h2v2h-2zM60 32h2v2h-2zM4 34h2v2h-2zM12 34h2v2h-2zM46 34h2v2h-2zM64 34h2v2h-2zM8 36h2v2h-2zM24 36h2v2h-2zM28 36h2v2h-2zM42 36h2v2h-2zM54 36h2v2h-2zM58 36h2v2h-2zM62 36h2v2h-2zM16 38h2v2h-2zM56 38h2v2h-2zM58 38h2v2h-2zM4 40h2v2h-2zM10 40h2v2h-2zM4 42h2v2h-2zM8 42h2v2h-2zM14 42h2v2h-2zM30 42h2v2h-2zM36 42h2v2h-2zM52 42h2v2h-2zM66 42h2v2h-2zM18 44h2v2h-2zM54 44h2v2h-2zM6 46h2v2h-2zM30 46h2v2h-2zM56 46h2v2h-2zM60 46h2v2h-2zM22 48h2v2h-2zM24 48h2v2h-2zM28 48h2v2h-2zM30 48h2v2h-2zM34 48h2v2h-2zM58 48h2v2h-2zM22 50h2v2h-2zM30 50h2v2h-2zM56 50h2v2h-2zM68 50h2v2h-2zM24 52h2v2h-2zM38 52h2v2h-2zM32 54h2v2h-2zM48 54h2v2h-2zM54 54h2v2h-2zM56 54h2v2h-2zM66 54h2v2h-2zM22 56h2v2h-2zM28 56h2v2h-2zM36 56h2v2h-2zM44 56h2v2h-2zM48 56h2v2h-2zM20 58h2v2h-2zM26 58h2v2h-2zM36 58h2v2h-2z" fill="#5c5c5c"/><path d="M0 0h2v2h-2zM12 0h2v2h-2zM26 0h2v2h-2zM42 0h2v2h-2zM58 0h2v2h-2zM62 0h2v2h-2zM4 2h2v2h-2zM6 2h2v2h-2zM14 2h2v2h-2zM24 2h2v2h-2zM38 2h2v2h-2zM42 2h2v2h-2zM54 2h2v2h-2zM56 2h2v2h-2zM68 2h2v2h-2zM6 4h2v2h-2zM16 4h2v2h-2zM26 6h2v2h-2zM40 6h2v2h-2zM44 6h2v2h-2zM54 6h2v2h-2zM6 8h2v2h-2zM48 8h2v2h-2zM8 10h2v2h-2zM20 10h2v2h-2zM22 10h2v2h-2zM28 10h2v2h-2zM44 10h2v2h-2zM50 10h2v2h-2zM54 10h2v2h-2zM60 10h2v2h-2zM62 10h2v2h-2zM66 10h2v2h-2zM8 12h2v2h-2zM14 12h2v2h-2zM18 12h2v2h-2zM28 12h2v2h-2zM32 12h2v2h-2zM52 12h2v2h-2zM58 12h2v2h-2zM0 14h2v2h-2zM6 14h2v2h-2zM14 14h2v2h-2zM30 14h2v2h-2zM40 14h2v2h-2zM6 16h2v2h-2zM26 16h2v2h-2zM38 16h2v2h-2zM32 18h2v2h-2zM36 18h2v2h-2zM42 18h2v2h-2zM44 18h2v2h-2zM64 18h2v2h-2zM10 20h2v2h-2zM24 20h2v2h-2zM28 20h2v2h-2zM42 20h2v2h-2zM44 20h2v2h-2zM58 20h2v2h-2zM2 22h2v2h-2zM38 22h2v2h-2zM44 22h2v2h-2zM56 22h2v2h-2zM60 22h2v2h-2zM62 22h2v2h-2zM0 24h2v2h-2zM16 24h2v2h-2zM18 24h2v2h-2zM24 24h2v2h-2zM34 24h2v2h-2zM38 24h2v2h-2zM20 26h2v2h-2zM32 26h2v2h-2zM36 26h2v2h-2zM60 26h2v2h-2zM62 26h2v2h-2zM16 28h2v2h-2zM20 28h2v2h-2zM30 28h2v2h-2zM48 28h2v2h-2zM58 28h2v2h-2zM62 28h2v2h-2zM2 30h2v2h-2zM8 30h2v2h-2zM10 30h2v2h-2zM30 30h2v2h-2zM44 30h2v2h-2zM52 30h2v2h-2zM66 30h2v2h-2zM18 32h2v2h-2zM20 32h2v2h-2zM56 32h2v2h-2zM0 34h2v2h-2zM8 34h2v2h-2zM56 34h2v2h-2zM58 34h2v2h-2zM2 36h2v2h-2zM4 36h2v2h-2zM10 36h2v2h-2zM68 36h2v2h-2zM6 38h2v2h-2zM28 38h2v2h-2zM34 38h2v2h-2zM38 38h2v2h-2zM60 38h2v2h-2zM0 40h2v2h-2zM20 40h2v2h-2zM42 40h2v2h-2zM56 40h2v2h-2zM60 40h2v2h-2zM62 40h2v2h-2zM22 42h2v2h-2zM24 42h2v2h-2zM40 42h2v2h-2zM42 42h2v2h-2zM58 42h2v2h-2zM64 42h2v2h-2zM0 44h2v2h-2zM6 44h2v2h-2zM64 44h2v2h-2zM0 46h2v2h-2zM10 46h2v2h-2zM12 46h2v2h-2zM14 46h2v2h-2zM38 46h2v2h-2zM42 46h2v2h-2zM52 46h2v2h-2zM20 48h2v2h-2zM42 48h2v2h-2zM6 50h2v2h-2zM12 50h2v2h-2zM18 50h2v2h-2zM38 50h2v2h-2zM42 50h2v2h-2zM46 50h2v2h-2zM60 50h2v2h-2zM64 50h2v2h-2zM2 52h2v2h-2zM32 52h2v2h-2zM36 52h2v2h-2zM68 52h2v2h-2zM2 54h2v2h-2zM8 54h2v2h-2zM10 54h2v2h-2zM28 54h2v2h-2zM52 54h2v2h-2zM58 54h2v2h-2zM4 56h2v2h-2zM6 56h2v2h-2zM16 56h2v2h-2zM38 56h2v2h-2zM40 56h2v2h-2zM54 56h2v2h-2zM56 56h2v2h-2zM4 58h2v2h-2zM10 58h2v2h-2zM12 58h2v2h-2zM50 58h2v2h-2zM66 58h2v2h-2z" fill="#737373"/><path d="M24 0h2v2h-2zM38 0h2v2h-2zM40 0h2v2h-2zM54 0h2v2h-2zM56 0h2v2h-2zM26 2h2v2h-2zM28 2h2v2h-2zM34 2h2v2h-2zM62 2h2v2h-2zM66 2h2v2h-2zM0 4h2v2h-2zM2 4h2v2h-2zM10 4h2v2h-2zM12 4h2v2h-2zM18 4h2v2h-2zM20 4h2v2h-2zM22 4h2v2h-2zM38 4h2v2h-2zM40 4h2v2h-2zM42 4h2v2h-2zM50 4h2v2h-2zM52 4h2v2h-2zM68 4h2v2h-2zM0 6h2v2h-2zM4 6h2v2h-2zM6 6h2v2h-2zM10 6h2v2h-2zM14 6h2v2h-2zM16 6h2v2h-2zM22 6h2v2h-2zM38 6h2v2h-2zM46 6h2v2h-2zM48 6h2v2h-2zM52 6h2v2h-2zM60 6h2v2h-2zM62 6h2v2h-2zM64 6h2v2h-2zM0 8h2v2h-2zM2 8h2v2h-2zM4 8h2v2h-2zM8 8h2v2h-2zM10 8h2v2h-2zM20 8h2v2h-2zM28 8h2v2h-2zM30 8h2v2h-2zM44 8h2v2h-2zM58 8h2v2h-2zM62 8h2v2h-2zM66 8h2v2h-2zM12 10h2v2h-2zM24 10h2v2h-2zM30 10h2v2h-2zM34 10h2v2h-2zM40 10h2v2h-2zM42 10h2v2h-2zM52 10h2v2h-2zM2 12h2v2h-2zM6 12h2v2h-2zM20 12h2v2h-2zM22 12h2v2h-2zM24 12h2v2h-2zM38 12h2v2h-2zM46 12h2v2h-2zM62 12h2v2h-2zM66 12h2v2h-2zM10 14h2v2h-2zM28 14h2v2h-2zM48 14h2v2h-2zM58 14h2v2h-2zM66 14h2v2h-2zM0 16h2v2h-2zM14 16h2v2h-2zM24 16h2v2h-2zM40 16h2v2h-2zM54 16h2v2h-2zM56 16h2v2h-2zM64 16h2v2h-2zM0 18h2v2h-2zM4 18h2v2h-2zM24 18h2v2h-2zM50 18h2v2h-2zM52 18h2v2h-2zM0 20h2v2h-2zM2 20h2v2h-2zM6 20h2v2h-2zM22 20h2v2h-2zM46 20h2v2h-2zM48 20h2v2h-2zM52 20h2v2h-2zM62 20h2v2h-2zM66 20h2v2h-2zM0 22h2v2h-2zM6 22h2v2h-2zM8 22h2v2h-2zM16 22h2v2h-2zM28 22h2v2h-2zM34 22h2v2h-2zM36 22h2v2h-2zM54 22h2v2h-2zM6 24h2v2h-2zM8 24h2v2h-2zM20 24h2v2h-2zM26 24h2v2h-2zM46 24h2v2h-2zM50 24h2v2h-2zM62 24h2v2h-2zM4 26h2v2h-2zM46 26h2v2h-2zM48 26h2v2h-2zM54 26h2v2h-2zM66 26h2v2h-2zM68 26h2v2h-2zM8 28h2v2h-2zM52 28h2v2h-2zM54 28h2v2h-2zM56 28h2v2h-2zM14 30h2v2h-2zM34 30h2v2h-2zM40 30h2v2h-2zM54 30h2v2h-2zM60 30h2v2h-2zM16 32h2v2h-2zM22 32h2v2h-2zM30 32h2v2h-2zM42 32h2v2h-2zM46 32h2v2h-2zM52 32h2v2h-2zM66 32h2v2h-2zM16 34h2v2h-2zM20 34h2v2h-2zM24 34h2v2h-2zM36 34h2v2h-2zM42 34h2v2h-2zM44 34h2v2h-2zM48 34h2v2h-2zM52 34h2v2h-2zM54 34h2v2h-2zM6 36h2v2h-2zM18 36h2v2h-2zM30 36h2v2h-2zM34 36h2v2h-2zM36 36h2v2h-2zM48 36h2v2h-2zM50 36h2v2h-2zM0 38h2v2h-2zM12 38h2v2h-2zM14 38h2v2h-2zM36 38h2v2h-2zM46 38h2v2h-2zM48 38h2v2h-2zM54 38h2v2h-2zM62 38h2v2h-2zM24 40h2v2h-2zM28 40h2v2h-2zM32 40h2v2h-2zM36 40h2v2h-2zM38 40h2v2h-2zM46 40h2v2h-2zM48 40h2v2h-2zM54 40h2v2h-2zM64 40h2v2h-2zM2 42h2v2h-2zM10 42h2v2h-2zM16 42h2v2h-2zM18 42h2v2h-2zM28 42h2v2h-2zM46 42h2v2h-2zM48 42h2v2h-2zM50 42h2v2h-2zM62 42h2v2h-2zM2 44h2v2h-2zM20 44h2v2h-2zM26 44h2v2h-2zM34 44h2v2h-2zM38 44h2v2h-2zM52 44h2v2h-2zM56 44h2v2h-2zM28 46h2v2h-2zM34 46h2v2h-2zM40 46h2v2h-2zM58 46h2v2h-2zM62 46h2v2h-2zM66 46h2v2h-2zM68 46h2v2h-2zM16 48h2v2h-2zM40 48h2v2h-2zM48 48h2v2h-2zM54 48h2v2h-2zM60 48h2v2h-2zM64 48h2v2h-2zM68 48h2v2h-2zM0 50h2v2h-2zM20 50h2v2h-2zM26 50h2v2h-2zM36 50h2v2h-2zM44 50h2v2h-2zM6 52h2v2h-2zM10 52h2v2h-2zM22 52h2v2h-2zM42 52h2v2h-2zM48 52h2v2h-2zM52 52h2v2h-2zM54 52h2v2h-2zM14 54h2v2h-2zM24 54h2v2h-2zM36 54h2v2h-2zM38 54h2v2h-2zM40 54h2v2h-2zM44 54h2v2h-2zM46 54h2v2h-2zM68 54h2v2h-2zM14 56h2v2h-2zM18 56h2v2h-2zM20 56h2v2h-2zM24 56h2v2h-2zM30 56h2v2h-2zM32 56h2v2h-2zM58 56h2v2h-2zM60 56h2v2h-2zM64 56h2v2h-2zM28 58h2v2h-2zM34 58h2v2h-2zM42 58h2v2h-2zM48 58h2v2h-2zM52 58h2v2h-2zM54 58h2v2h-2zM56 58h2v2h-2z" fill="#8b8b8b"/><path d="M6 0h2v2h-2zM22 0h2v2h-2zM32 0h2v2h-2zM36 0h2v2h-2zM44 0h2v2h-2zM0 2h2v2h-2zM8 2h2v2h-2zM12 2h2v2h-2zM16 2h2v2h-2zM22 2h2v2h-2zM30 2h2v2h-2zM58 2h2v2h-2zM60 2h2v2h-2zM26 4h2v2h-2zM36 4h2v2h-2zM44 4h2v2h-2zM48 4h2v2h-2zM8 6h2v2h-2zM12 6h2v2h-2zM18 6h2v2h-2zM28 6h2v2h-2zM36 6h2v2h-2zM50 6h2v2h-2zM18 8h2v2h-2zM36 8h2v2h-2zM38 8h2v2h-2zM54 8h2v2h-2zM56 8h2v2h-2zM4 10h2v2h-2zM14 10h2v2h-2zM46 10h2v2h-2zM10 12h2v2h-2zM12 12h2v2h-2zM36 12h2v2h-2zM42 12h2v2h-2zM44 12h2v2h-2zM54 12h2v2h-2zM56 12h2v2h-2zM60 12h2v2h-2zM64 12h2v2h-2zM16 14h2v2h-2zM32 14h2v2h-2zM42 14h2v2h-2zM52 14h2v2h-2zM56 14h2v2h-2zM62 14h2v2h-2zM12 16h2v2h-2zM34 16h2v2h-2zM36 16h2v2h-2zM44 16h2v2h-2zM52 16h2v2h-2zM6 18h2v2h-2zM10 18h2v2h-2zM22 18h2v2h-2zM40 18h2v2h-2zM46 18h2v2h-2zM48 18h2v2h-2zM54 18h2v2h-2zM56 18h2v2h-2zM62 18h2v2h-2zM68 18h2v2h-2zM8 20h2v2h-2zM12 20h2v2h-2zM18 20h2v2h-2zM34 20h2v2h-2zM38 20h2v2h-2zM50 20h2v2h-2zM54 20h2v2h-2zM68 20h2v2h-2zM18 22h2v2h-2zM20 22h2v2h-2zM32 22h2v2h-2zM4 24h2v2h-2zM12 24h2v2h-2zM22 24h2v2h-2zM28 24h2v2h-2zM30 24h2v2h-2zM32 24h2v2h-2zM40 24h2v2h-2zM42 24h2v2h-2zM52 24h2v2h-2zM58 24h2v2h-2zM68 24h2v2h-2zM10 26h2v2h-2zM22 26h2v2h-2zM26 26h2v2h-2zM28 26h2v2h-2zM30 26h2v2h-2zM58 26h2v2h-2zM64 26h2v2h-2zM0 28h2v2h-2zM24 28h2v2h-2zM26 28h2v2h-2zM34 28h2v2h-2zM36 28h2v2h-2zM68 28h2v2h-2zM4 30h2v2h-2zM12 30h2v2h-2zM22 30h2v2h-2zM28 30h2v2h-2zM50 30h2v2h-2zM64 30h2v2h-2zM68 30h2v2h-2zM8 32h2v2h-2zM14 32h2v2h-2zM24 32h2v2h-2zM28 32h2v2h-2zM32 32h2v2h-2zM36 32h2v2h-2zM48 32h2v2h-2zM62 32h2v2h-2zM64 32h2v2h-2zM10 34h2v2h-2zM14 34h2v2h-2zM22 34h2v2h-2zM26 34h2v2h-2zM28 34h2v2h-2zM32 34h2v2h-2zM34 34h2v2h-2zM38 34h2v2h-2zM50 34h2v2h-2zM60 34h2v2h-2zM68 34h2v2h-2zM0 36h2v2h-2zM12 36h2v2h-2zM14 36h2v2h-2zM22 36h2v2h-2zM26 36h2v2h-2zM40 36h2v2h-2zM60 36h2v2h-2zM2 38h2v2h-2zM10 38h2v2h-2zM22 38h2v2h-2zM24 38h2v2h-2zM26 40h2v2h-2zM40 40h2v2h-2zM50 40h2v2h-2zM26 42h2v2h-2zM44 42h2v2h-2zM56 42h2v2h-2zM68 42h2v2h-2zM12 44h2v2h-2zM16 44h2v2h-2zM22 44h2v2h-2zM24 44h2v2h-2zM32 44h2v2h-2zM42 44h2v2h-2zM48 44h2v2h-2zM60 44h2v2h-2zM62 44h2v2h-2zM68 44h2v2h-2zM8 46h2v2h-2zM18 46h2v2h-2zM20 46h2v2h-2zM22 46h2v2h-2zM24 46h2v2h-2zM26 46h2v2h-2zM50 46h2v2h-2zM54 46h2v2h-2zM64 46h2v2h-2zM2 48h2v2h-2zM26 48h2v2h-2zM36 48h2v2h-2zM50 48h2v2h-2zM62 48h2v2h-2zM66 48h2v2h-2zM2 50h2v2h-2zM28 50h2v2h-2zM32 50h2v2h-2zM54 50h2v2h-2zM66 50h2v2h-2zM0 52h2v2h-2zM8 52h2v2h-2zM12 52h2v2h-2zM18 52h2v2h-2zM20 52h2v2h-2zM40 52h2v2h-2zM46 52h2v2h-2zM58 52h2v2h-2zM60 52h2v2h-2zM62 52h2v2h-2zM12 54h2v2h-2zM16 54h2v2h-2zM34 54h2v2h-2zM42 54h2v2h-2zM26 56h2v2h-2zM52 56h2v2h-2zM62 56h2v2h-2zM0 58h2v2h-2zM2 58h2v2h-2zM6 58h2v2h-2zM16 58h2v2h-2zM22 58h2v2h-2zM32 58h2v2h-2zM38 58h2v2h-2zM40 58h2v2h-2zM62 58h2v2h-2z" fill="#a2a2a2"/><path d="M2 0h2v2h-2zM16 0h2v2h-2zM30 0h2v2h-2zM48 0h2v2h-2zM64 0h2v2h-2zM68 0h2v2h-2zM2 2h2v2h-2zM20 2h2v2h-2zM32 2h2v2h-2zM46 2h2v2h-2zM48 2h2v2h-2zM50 2h2v2h-2zM52 2h2v2h-2zM64 2h2v2h-2zM4 4h2v2h-2zM46 4h2v2h-2zM54 4h2v2h-2zM58 4h2v2h-2zM60 4h2v2h-2zM62 4h2v2h-2zM66 4h2v2h-2zM20 6h2v2h-2zM30 6h2v2h-2zM34 6h2v2h-2zM42 6h2v2h-2zM56 6h2v2h-2zM58 6h2v2h-2zM66 6h2v2h-2zM24 8h2v2h-2zM40 8h2v2h-2zM60 8h2v2h-2zM64 10h2v2h-2zM4 14h2v2h-2zM8 14h2v2h-2zM12 14h2v2h-2zM18 14h2v2h-2zM26 14h2v2h-2zM34 14h2v2h-2zM38 14h2v2h-2zM44 14h2v2h-2zM50 14h2v2h-2zM4 16h2v2h-2zM10 16h2v2h-2zM50 16h2v2h-2zM8 18h2v2h-2zM16 18h2v2h-2zM26 18h2v2h-2zM30 18h2v2h-2zM34 18h2v2h-2zM58 18h2v2h-2zM4 20h2v2h-2zM14 20h2v2h-2zM16 20h2v2h-2zM26 20h2v2h-2zM30 20h2v2h-2zM36 20h2v2h-2zM40 20h2v2h-2zM60 20h2v2h-2zM64 20h2v2h-2zM12 22h2v2h-2zM26 22h2v2h-2zM30 22h2v2h-2zM40 22h2v2h-2zM52 22h2v2h-2zM66 22h2v2h-2zM2 24h2v2h-2zM54 24h2v2h-2zM56 24h2v2h-2zM66 24h2v2h-2zM34 26h2v2h-2zM40 26h2v2h-2zM2 28h2v2h-2zM6 28h2v2h-2zM12 28h2v2h-2zM28 28h2v2h-2zM32 28h2v2h-2zM60 28h2v2h-2zM66 28h2v2h-2zM16 30h2v2h-2zM24 30h2v2h-2zM26 30h2v2h-2zM32 30h2v2h-2zM36 30h2v2h-2zM62 30h2v2h-2zM2 32h2v2h-2zM6 32h2v2h-2zM50 32h2v2h-2zM68 32h2v2h-2zM18 34h2v2h-2zM30 34h2v2h-2zM62 34h2v2h-2zM16 36h2v2h-2zM38 36h2v2h-2zM46 36h2v2h-2zM66 36h2v2h-2zM8 38h2v2h-2zM18 38h2v2h-2zM26 38h2v2h-2zM30 38h2v2h-2zM32 38h2v2h-2zM40 38h2v2h-2zM42 38h2v2h-2zM44 38h2v2h-2zM50 38h2v2h-2zM52 38h2v2h-2zM14 40h2v2h-2zM18 40h2v2h-2zM22 40h2v2h-2zM34 40h2v2h-2zM52 40h2v2h-2zM68 40h2v2h-2zM0 42h2v2h-2zM6 42h2v2h-2zM20 42h2v2h-2zM32 42h2v2h-2zM34 42h2v2h-2zM38 42h2v2h-2zM4 44h2v2h-2zM14 44h2v2h-2zM50 44h2v2h-2zM16 46h2v2h-2zM32 46h2v2h-2zM36 46h2v2h-2zM46 46h2v2h-2zM48 46h2v2h-2zM14 48h2v2h-2zM18 48h2v2h-2zM14 50h2v2h-2zM40 50h2v2h-2zM48 50h2v2h-2zM16 52h2v2h-2zM26 52h2v2h-2zM28 52h2v2h-2zM44 52h2v2h-2zM64 52h2v2h-2zM66 52h2v2h-2zM0 54h2v2h-2zM18 54h2v2h-2zM50 54h2v2h-2zM60 54h2v2h-2zM62 54h2v2h-2zM64 54h2v2h-2zM0 56h2v2h-2zM2 56h2v2h-2zM8 56h2v2h-2zM34 56h2v2h-2zM50 56h2v2h-2zM66 56h2v2h-2zM8 58h2v2h-2zM24 58h2v2h-2zM60 58h2v2h-2zM64 58h2v2h-2zM68 58h2v2h-2z" fill="#b9b9b9"/><path d="M4 0h2v2h-2zM34 0h2v2h-2zM36 2h2v2h-2zM34 4h2v2h-2zM68 6h2v2h-2zM14 8h2v2h-2zM52 8h2v2h-2zM68 8h2v2h-2zM0 10h2v2h-2zM6 10h2v2h-2zM26 10h2v2h-2zM32 10h2v2h-2zM26 12h2v2h-2zM40 12h2v2h-2zM48 12h2v2h-2zM50 12h2v2h-2zM20 14h2v2h-2zM46 14h2v2h-2zM68 14h2v2h-2zM20 16h2v2h-2zM28 16h2v2h-2zM32 16h2v2h-2zM48 16h2v2h-2zM62 16h2v2h-2zM66 16h2v2h-2zM12 18h2v2h-2zM20 18h2v2h-2zM66 18h2v2h-2zM56 20h2v2h-2zM10 22h2v2h-2zM42 22h2v2h-2zM14 24h2v2h-2zM2 26h2v2h-2zM8 26h2v2h-2zM12 26h2v2h-2zM38 26h2v2h-2zM50 26h2v2h-2zM56 26h2v2h-2zM18 28h2v2h-2zM22 28h2v2h-2zM50 28h2v2h-2zM64 28h2v2h-2zM18 30h2v2h-2zM0 32h2v2h-2zM4 32h2v2h-2zM10 32h2v2h-2zM44 32h2v2h-2zM54 32h2v2h-2zM58 32h2v2h-2zM66 34h2v2h-2zM4 38h2v2h-2zM66 38h2v2h-2zM2 40h2v2h-2zM12 40h2v2h-2zM16 40h2v2h-2zM44 40h2v2h-2zM58 40h2v2h-2zM54 42h2v2h-2zM8 44h2v2h-2zM30 44h2v2h-2zM40 44h2v2h-2zM2 46h2v2h-2zM8 48h2v2h-2zM10 48h2v2h-2zM52 48h2v2h-2zM4 50h2v2h-2zM10 50h2v2h-2zM16 50h2v2h-2zM34 50h2v2h-2zM50 50h2v2h-2zM52 50h2v2h-2zM14 52h2v2h-2zM30 52h2v2h-2zM50 52h2v2h-2zM56 52h2v2h-2zM4 54h2v2h-2zM6 54h2v2h-2zM20 54h2v2h-2zM30 54h2v2h-2zM12 56h2v2h-2zM42 56h2v2h-2zM46 56h2v2h-2zM58 58h2v2h-2z" fill="#d0d0d0"/><path d="M10 0h2v2h-2zM40 2h2v2h-2zM8 4h2v2h-2zM42 16h2v2h-2zM60 16h2v2h-2zM58 22h2v2h-2zM68 22h2v2h-2zM10 24h2v2h-2zM38 28h2v2h-2zM40 28h2v2h-2zM48 30h2v2h-2zM56 30h2v2h-2zM58 30h2v2h-2zM12 32h2v2h-2zM26 32h2v2h-2zM2 34h2v2h-2zM44 36h2v2h-2zM52 36h2v2h-2zM6 40h2v2h-2zM30 40h2v2h-2zM4 46h2v2h-2zM44 46h2v2h-2zM32 48h2v2h-2zM46 48h2v2h-2zM4 52h2v2h-2zM34 52h2v2h-2zM68 56h2v2h-2zM14 58h2v2h-2z" fill="#e7e7e7"/><path d="M14 4h2v2h-2zM0 12h2v2h-2zM60 18h2v2h-2zM50 22h2v2h-2zM36 24h2v2h-2zM42 28h2v2h-2zM6 30h2v2h-2zM46 30h2v2h-2zM6 34h2v2h-2zM32 36h2v2h-2zM64 36h2v2h-2zM46 44h2v2h-2zM66 44h2v2h-2zM12 48h2v2h-2zM58 50h2v2h-2zM62 50h2v2h-2z" fill="#ffffff"/></pattern><filter id="soft" x="0" y="0" width="1" height="1"><feGaussianBlur stdDeviation="0.45"/></filter><filter id="blur2" x="-0.2" y="-1" width="1.4" height="3"><feGaussianBlur stdDeviation="1.5"/></filter><linearGradient id="skyg" gradientUnits="userSpaceOnUse" x1="0" y1="68.9" x2="0" y2="81.25" spreadMethod="repeat"><stop offset="0" stop-color="#fff" stop-opacity="0"/><stop offset="0.14" stop-color="#fff" stop-opacity="0.45"/><stop offset="0.32" stop-color="#fff" stop-opacity="1"/><stop offset="0.68" stop-color="#fff" stop-opacity="1"/><stop offset="0.86" stop-color="#fff" stop-opacity="0.45"/><stop offset="1" stop-color="#fff" stop-opacity="0"/></linearGradient><mask id="skymask" maskUnits="userSpaceOnUse" x="828" y="60" width="80" height="180"><rect x="828" y="60" width="80" height="180" fill="url(#skyg)"/></mask><filter id="vblur" x="-0.1" y="-0.1" width="1.2" height="1.2"><feGaussianBlur stdDeviation="16"/></filter><radialGradient id="blob1"><stop offset="0" stop-color="#000"/><stop offset="0.48" stop-color="#000"/><stop offset="0.68" stop-color="#555" stop-opacity="0.92"/><stop offset="0.85" stop-color="#aaa" stop-opacity="0.5"/><stop offset="1" stop-color="#ccc" stop-opacity="0"/></radialGradient><radialGradient id="blob2"><stop offset="0" stop-color="#000"/><stop offset="0.45" stop-color="#000"/><stop offset="0.65" stop-color="#444" stop-opacity="0.92"/><stop offset="0.85" stop-color="#aaa" stop-opacity="0.45"/><stop offset="1" stop-color="#ccc" stop-opacity="0"/></radialGradient></defs>
<rect x="0" y="0" width="1400" height="953" fill="#fff"/>
<text y="14.00" transform="matrix(1,0,0,1.07,0,-0.980)" font-family="'Liberation Mono', monospace" font-size="13.03" fill="#000" stroke="#000" stroke-width="0.16" xml:space="preserve"><tspan x="70.50">EW: 2.1±1.4</tspan><tspan x="156.50" font-style="italic">Å</tspan></text>
<text x="182.50" y="14.00" transform="matrix(1,0,0,1.07,0,-0.980)" font-family="'Liberation Mono', monospace" font-size="13.03" fill="#000" stroke="#000" stroke-width="0.16" xml:space="preserve">P(LAE)/P(OII):</text>
<text x="300.00" y="14.00" font-family="'Liberation Sans', sans-serif" font-size="13.1" fill="#000" text-anchor="start" textLength="37.48" lengthAdjust="spacingAndGlyphs" stroke="#000" stroke-width="0.1" xml:space="preserve">0.396</text>
<text x="341.00" y="8.70" font-family="'Liberation Sans', sans-serif" font-size="8.5" fill="#000" text-anchor="start" textLength="24.33" lengthAdjust="spacingAndGlyphs" stroke="#000" stroke-width="0.06" xml:space="preserve">0.946</text>
<text x="341.00" y="17.60" font-family="'Liberation Sans', sans-serif" font-size="8.5" fill="#000" text-anchor="start" textLength="24.33" lengthAdjust="spacingAndGlyphs" stroke="#000" stroke-width="0.06" xml:space="preserve">0.269</text>
<text y="14.00" transform="matrix(1,0,0,1.07,0,-0.980)" font-family="'Liberation Mono', monospace" font-size="13.03" fill="#000" stroke="#000" stroke-width="0.16" xml:space="preserve"><tspan x="384.00">P(Ly</tspan><tspan x="415.27" font-style="italic">α</tspan><tspan x="423.09">): 0.001</tspan></text>
<text x="501.00" y="14.00" transform="matrix(1,0,0,1.07,0,-0.980)" font-family="'Liberation Mono', monospace" font-size="13.03" fill="#000" stroke="#000" stroke-width="0.16" xml:space="preserve">Q(z):</text>
<text x="548.00" y="14.00" font-family="'Liberation Sans', sans-serif" font-size="13.1" fill="#000" text-anchor="start" textLength="29.15" lengthAdjust="spacingAndGlyphs" stroke="#000" stroke-width="0.1" xml:space="preserve">0.18</text>
<text x="580.50" y="8.70" font-family="'Liberation Sans', sans-serif" font-size="8.5" fill="#000" text-anchor="start" textLength="18.93" lengthAdjust="spacingAndGlyphs" stroke="#000" stroke-width="0.06" xml:space="preserve">0.18</text>
<text x="580.50" y="17.60" font-family="'Liberation Sans', sans-serif" font-size="8.5" fill="#000" text-anchor="start" textLength="18.93" lengthAdjust="spacingAndGlyphs" stroke="#000" stroke-width="0.06" xml:space="preserve">0.18</text>
<text x="618.00" y="14.00" transform="matrix(1,0,0,1.07,0,-0.980)" font-family="'Liberation Mono', monospace" font-size="13.03" fill="#000" stroke="#000" stroke-width="0.16" xml:space="preserve">z:</text>
<text x="641.00" y="14.00" font-family="'Liberation Sans', sans-serif" font-size="13.1" fill="#000" text-anchor="start" textLength="45.81" lengthAdjust="spacingAndGlyphs" stroke="#000" stroke-width="0.1" xml:space="preserve">0.1388</text>
<text x="690.00" y="8.70" font-family="'Liberation Sans', sans-serif" font-size="8.5" fill="#000" text-anchor="start" textLength="29.74" lengthAdjust="spacingAndGlyphs" stroke="#000" stroke-width="0.06" xml:space="preserve">0.1388</text>
<text x="690.00" y="17.60" font-family="'Liberation Sans', sans-serif" font-size="8.5" fill="#000" text-anchor="start" textLength="29.74" lengthAdjust="spacingAndGlyphs" stroke="#000" stroke-width="0.06" xml:space="preserve">0.1388</text>
<text x="730.00" y="14.00" transform="matrix(1,0,0,1.07,0,-0.980)" font-family="'Liberation Mono', monospace" font-size="13.03" fill="#000" stroke="#000" stroke-width="0.16" xml:space="preserve">OII</text>
<text x="1057.00" y="16.70" transform="matrix(1,0,0,1.07,0,-1.169)" font-family="'Liberation Mono', monospace" font-size="13.03" fill="#000" stroke="#000" stroke-width="0.16" xml:space="preserve">2024-12-30 17:22:30  Version 1.22.3</text>
<text x="70.50" y="40.50" transform="matrix(1,0,0,1.07,0,-2.835)" font-family="'Liberation Mono', monospace" font-size="13.03" fill="#000" stroke="#000" stroke-width="0.16" xml:space="preserve">ID: 3007170062 (3007170062.pdf)</text>
<text x="70.50" y="55.00" transform="matrix(1,0,0,1.07,0,-3.850)" font-family="'Liberation Mono', monospace" font-size="13.03" fill="#000" stroke="#000" stroke-width="0.16" xml:space="preserve">Obs: 20200421v019_3007170062</text>
<text x="70.50" y="69.80" transform="matrix(1,0,0,1.07,0,-4.886)" font-family="'Liberation Mono', monospace" font-size="13.03" fill="#000" stroke="#000" stroke-width="0.16" xml:space="preserve">Primary Spec_Slot_IFU_AMP: 320_032_020_RU</text>
<text x="70.50" y="84.60" transform="matrix(1,0,0,1.07,0,-5.922)" font-family="'Liberation Mono', monospace" font-size="13.03" fill="#000" stroke="#000" stroke-width="0.16" xml:space="preserve">F=1.6"  T=0.115  N=1.24  A=0.92  g=24.9</text>
<text x="70.50" y="99.30" transform="matrix(1,0,0,1.07,0,-6.951)" font-family="'Liberation Mono', monospace" font-size="13.03" fill="#000" stroke="#000" stroke-width="0.16" xml:space="preserve">RA,Dec (208.140259,55.456783)</text>
<text y="116.60" transform="matrix(1,0,0,1.07,0,-8.162)" font-family="'Liberation Mono', monospace" font-size="13.03" fill="#000" stroke="#000" stroke-width="0.16" xml:space="preserve"><tspan x="70.50" font-style="italic">λ</tspan><tspan x="78.32"> = 4245.25</tspan><tspan x="156.50" font-style="italic">Å</tspan><tspan x="164.32">  </tspan><tspan x="179.95" font-style="italic">σ</tspan><tspan x="187.77"> = 3.31(±0.88)</tspan><tspan x="297.22" font-style="italic">Å</tspan></text>
<text x="70.50" y="131.50" transform="matrix(1,0,0,1.07,0,-9.205)" font-family="'Liberation Mono', monospace" font-size="13.03" fill="#000" stroke="#000" stroke-width="0.16" xml:space="preserve">LineFlux = 8.30(±1.90)e-17</text>
<text x="70.50" y="146.40" transform="matrix(1,0,0,1.07,0,-10.248)" font-family="'Liberation Mono', monospace" font-size="13.03" fill="#000" stroke="#000" stroke-width="0.16" xml:space="preserve">Cont(n) = 5.80(±0.45)e-18</text>
<text x="70.50" y="164.00" transform="matrix(1,0,0,1.07,0,-11.480)" font-family="'Liberation Mono', monospace" font-size="13.03" fill="#000" stroke="#000" stroke-width="0.16" xml:space="preserve">Cont(w) = 9.60(±0.09)e-18 (gmag</text>
<text x="322.00" y="164.00" font-family="'Liberation Sans', sans-serif" font-size="13.1" fill="#000" text-anchor="start" textLength="37.48" lengthAdjust="spacingAndGlyphs" stroke="#000" stroke-width="0.1" xml:space="preserve">21.76</text>
<text x="362.50" y="158.70" font-family="'Liberation Sans', sans-serif" font-size="8.5" fill="#000" text-anchor="start" textLength="24.33" lengthAdjust="spacingAndGlyphs" stroke="#000" stroke-width="0.06" xml:space="preserve">21.77</text>
<text x="362.50" y="167.60" font-family="'Liberation Sans', sans-serif" font-size="8.5" fill="#000" text-anchor="start" textLength="24.33" lengthAdjust="spacingAndGlyphs" stroke="#000" stroke-width="0.06" xml:space="preserve">21.75</text>
<text x="387.50" y="164.00" transform="matrix(1,0,0,1.07,0,-11.480)" font-family="'Liberation Mono', monospace" font-size="13.03" fill="#000" stroke="#000" stroke-width="0.16" xml:space="preserve">)</text>
<text y="181.70" transform="matrix(1,0,0,1.07,0,-12.719)" font-family="'Liberation Mono', monospace" font-size="13.03" fill="#000" stroke="#000" stroke-width="0.16" xml:space="preserve"><tspan x="70.50">EWr = 4.10(±1.00) (w: 2.50(±0.58))</tspan><tspan x="336.31" font-style="italic">Å</tspan></text>
<text x="70.50" y="199.70" transform="matrix(1,0,0,1.07,0,-13.979)" font-family="'Liberation Mono', monospace" font-size="13.03" fill="#000" stroke="#000" stroke-width="0.16" xml:space="preserve">S/N = 4.8(±0.5)</text>
<text x="204.00" y="199.70" font-family="'Liberation Sans', sans-serif" font-size="13.1" fill="#000" text-anchor="start" font-style="italic" textLength="7.75" lengthAdjust="spacingAndGlyphs" stroke="#000" stroke-width="0.1" xml:space="preserve">χ</text>
<text x="213.00" y="194.50" font-family="'Liberation Sans', sans-serif" font-size="9" fill="#000" text-anchor="start" textLength="5.73" lengthAdjust="spacingAndGlyphs" stroke="#000" stroke-width="0.06" xml:space="preserve">2</text>
<text x="220.00" y="199.70" transform="matrix(1,0,0,1.07,0,-13.979)" font-family="'Liberation Mono', monospace" font-size="13.03" fill="#000" stroke="#000" stroke-width="0.16" xml:space="preserve"> = 1.0(±0.2)</text>
<text x="70.50" y="217.30" transform="matrix(1,0,0,1.07,0,-15.211)" font-family="'Liberation Mono', monospace" font-size="13.03" fill="#000" stroke="#000" stroke-width="0.16" xml:space="preserve">P(LAE)/P(OII):</text>
<text x="187.00" y="217.30" font-family="'Liberation Sans', sans-serif" font-size="13.1" fill="#000" text-anchor="start" textLength="37.48" lengthAdjust="spacingAndGlyphs" stroke="#000" stroke-width="0.1" xml:space="preserve">0.835</text>
<text x="227.00" y="212.00" font-family="'Liberation Sans', sans-serif" font-size="8.5" fill="#000" text-anchor="start" textLength="24.33" lengthAdjust="spacingAndGlyphs" stroke="#000" stroke-width="0.06" xml:space="preserve">0.945</text>
<text x="227.00" y="220.90" font-family="'Liberation Sans', sans-serif" font-size="8.5" fill="#000" text-anchor="start" textLength="24.33" lengthAdjust="spacingAndGlyphs" stroke="#000" stroke-width="0.06" xml:space="preserve">0.746</text>
<text x="256.00" y="217.30" transform="matrix(1,0,0,1.07,0,-15.211)" font-family="'Liberation Mono', monospace" font-size="13.03" fill="#000" stroke="#000" stroke-width="0.16" xml:space="preserve"> (w:</text>
<text x="293.50" y="217.30" font-family="'Liberation Sans', sans-serif" font-size="13.1" fill="#000" text-anchor="start" textLength="37.48" lengthAdjust="spacingAndGlyphs" stroke="#000" stroke-width="0.1" xml:space="preserve">0.456</text>
<text x="335.00" y="212.00" font-family="'Liberation Sans', sans-serif" font-size="8.5" fill="#000" text-anchor="start" textLength="24.33" lengthAdjust="spacingAndGlyphs" stroke="#000" stroke-width="0.06" xml:space="preserve">0.515</text>
<text x="335.00" y="220.90" font-family="'Liberation Sans', sans-serif" font-size="8.5" fill="#000" text-anchor="start" textLength="24.33" lengthAdjust="spacingAndGlyphs" stroke="#000" stroke-width="0.06" xml:space="preserve">0.427</text>
<text x="361.00" y="217.30" transform="matrix(1,0,0,1.07,0,-15.211)" font-family="'Liberation Mono', monospace" font-size="13.03" fill="#000" stroke="#000" stroke-width="0.16" xml:space="preserve">)</text>
<text x="70.50" y="234.20" transform="matrix(1,0,0,1.07,0,-16.394)" font-family="'Liberation Mono', monospace" font-size="13.03" fill="#000" stroke="#000" stroke-width="0.16" xml:space="preserve">LyA z = 2.4921  OII z = 0.1388</text>
<text y="251.00" transform="matrix(1,0,0,1.07,0,-17.570)" font-family="'Liberation Mono', monospace" font-size="13.03" fill="#000" stroke="#000" stroke-width="0.16" xml:space="preserve"><tspan x="70.50">Q(0.00) Ly</tspan><tspan x="148.68" font-style="italic">α</tspan><tspan x="156.50">(1216) z = 2.4921  EW r = 2.5</tspan><tspan x="383.22" font-style="italic">Å</tspan></text>
<text x="515.00" y="41.50" font-family="'Liberation Sans', sans-serif" font-size="7.2" fill="#000" text-anchor="middle" textLength="29.96" lengthAdjust="spacingAndGlyphs" stroke="#000" stroke-width="0.06" xml:space="preserve">2D Spec</text>
<text x="609.00" y="41.50" font-family="'Liberation Sans', sans-serif" font-size="7.2" fill="#000" text-anchor="middle" textLength="32.33" lengthAdjust="spacingAndGlyphs" stroke="#000" stroke-width="0.06" xml:space="preserve">Pixel Flat</text>
<text x="701.00" y="41.50" font-family="'Liberation Sans', sans-serif" font-size="7.2" fill="#000" text-anchor="middle" textLength="36.80" lengthAdjust="spacingAndGlyphs" stroke="#000" stroke-width="0.06" xml:space="preserve">Smoothed</text>
<rect x="466.30" y="46.20" width="282.70" height="39.20" fill="#fff" stroke="none" stroke-width="1"/>
<rect x="472.00" y="48.00" width="87.00" height="36.00" fill="url(#bp1)" stroke="none" stroke-width="1" filter="url(#soft)"/>
<rect x="658.00" y="48.00" width="88.00" height="36.00" fill="#888" stroke="none" stroke-width="1" filter="url(#sm)"/>
<rect x="467.80" y="47.70" width="279.70" height="36.20" fill="none" stroke="#000" stroke-width="3"/>
<text x="749.00" y="61.00" font-family="'Liberation Sans', sans-serif" font-size="7.4" fill="#000" text-anchor="start" textLength="35.06" lengthAdjust="spacingAndGlyphs" stroke="#000" stroke-width="0.06" xml:space="preserve">Weighted</text>
<text x="749.00" y="69.80" font-family="'Liberation Sans', sans-serif" font-size="7.4" fill="#000" text-anchor="start" textLength="16.61" lengthAdjust="spacingAndGlyphs" stroke="#000" stroke-width="0.06" xml:space="preserve">Sum</text>
<rect x="470.00" y="94.50" width="90.00" height="37.50" fill="url(#bp2)" stroke="none" stroke-width="1" filter="url(#soft)"/>
<rect x="564.00" y="94.50" width="90.00" height="37.50" fill="#808080" stroke="none" stroke-width="1" filter="url(#pf)"/>
<rect x="656.50" y="94.50" width="89.50" height="37.50" fill="#888" stroke="none" stroke-width="1" filter="url(#sm2)"/>
<text x="447.00" y="105.60" font-family="'Liberation Sans', sans-serif" font-size="9.0" fill="#000" text-anchor="start" textLength="16.43" lengthAdjust="spacingAndGlyphs" stroke="#000" stroke-width="0.06" xml:space="preserve">0.31</text>
<text x="447.00" y="114.30" font-family="'Liberation Sans', sans-serif" font-size="9.0" fill="#000" text-anchor="start" textLength="16.43" lengthAdjust="spacingAndGlyphs" stroke="#000" stroke-width="0.06" xml:space="preserve">2.26</text>
<text x="447.00" y="123.00" font-family="'Liberation Sans', sans-serif" font-size="9.0" fill="#000" text-anchor="start" textLength="14.09" lengthAdjust="spacingAndGlyphs" stroke="#000" stroke-width="0.06" xml:space="preserve">354</text>
<text x="750.80" y="100.00" font-family="'Liberation Sans', sans-serif" font-size="5.6" fill="#000" text-anchor="start" textLength="15.03" lengthAdjust="spacingAndGlyphs" xml:space="preserve">0.83"</text>
<text x="750.80" y="106.80" font-family="'Liberation Sans', sans-serif" font-size="5.6" fill="#000" text-anchor="start" textLength="29.27" lengthAdjust="spacingAndGlyphs" xml:space="preserve">(371, 869)</text>
<text x="750.80" y="115.40" font-family="'Liberation Sans', sans-serif" font-size="5.6" fill="#000" text-anchor="start" textLength="28.47" lengthAdjust="spacingAndGlyphs" xml:space="preserve">20200421</text>
<text x="750.80" y="121.80" font-family="'Liberation Sans', sans-serif" font-size="5.6" fill="#000" text-anchor="start" textLength="23.90" lengthAdjust="spacingAndGlyphs" xml:space="preserve">v019_02</text>
<text x="750.80" y="128.70" font-family="'Liberation Sans', sans-serif" font-size="5.6" fill="#000" text-anchor="start" textLength="34.93" lengthAdjust="spacingAndGlyphs" xml:space="preserve">320_RU_095</text>
<rect x="470.00" y="134.50" width="90.00" height="37.50" fill="url(#bp1)" stroke="none" stroke-width="1" filter="url(#soft)"/>
<rect x="564.00" y="134.50" width="90.00" height="37.50" fill="#808080" stroke="none" stroke-width="1" filter="url(#pf)"/>
<rect x="656.50" y="134.50" width="89.50" height="37.50" fill="#888" stroke="none" stroke-width="1" filter="url(#sm)"/>
<text x="447.00" y="145.60" font-family="'Liberation Sans', sans-serif" font-size="9.0" fill="#000" text-anchor="start" textLength="16.43" lengthAdjust="spacingAndGlyphs" stroke="#000" stroke-width="0.06" xml:space="preserve">0.21</text>
<text x="447.00" y="154.30" font-family="'Liberation Sans', sans-serif" font-size="9.0" fill="#000" text-anchor="start" textLength="16.43" lengthAdjust="spacingAndGlyphs" stroke="#000" stroke-width="0.06" xml:space="preserve">1.37</text>
<text x="447.00" y="163.00" font-family="'Liberation Sans', sans-serif" font-size="9.0" fill="#000" text-anchor="start" textLength="14.09" lengthAdjust="spacingAndGlyphs" stroke="#000" stroke-width="0.06" xml:space="preserve">355</text>
<text x="750.80" y="140.00" font-family="'Liberation Sans', sans-serif" font-size="5.6" fill="#000" text-anchor="start" textLength="15.03" lengthAdjust="spacingAndGlyphs" xml:space="preserve">0.79"</text>
<text x="750.80" y="146.80" font-family="'Liberation Sans', sans-serif" font-size="5.6" fill="#000" text-anchor="start" textLength="29.27" lengthAdjust="spacingAndGlyphs" xml:space="preserve">(371, 861)</text>
<text x="750.80" y="155.40" font-family="'Liberation Sans', sans-serif" font-size="5.6" fill="#000" text-anchor="start" textLength="28.47" lengthAdjust="spacingAndGlyphs" xml:space="preserve">20200421</text>
<text x="750.80" y="161.80" font-family="'Liberation Sans', sans-serif" font-size="5.6" fill="#000" text-anchor="start" textLength="23.90" lengthAdjust="spacingAndGlyphs" xml:space="preserve">v019_01</text>
<text x="750.80" y="168.70" font-family="'Liberation Sans', sans-serif" font-size="5.6" fill="#000" text-anchor="start" textLength="34.93" lengthAdjust="spacingAndGlyphs" xml:space="preserve">320_RU_094</text>
<rect x="470.00" y="174.50" width="90.00" height="37.50" fill="url(#bp2)" stroke="none" stroke-width="1" filter="url(#soft)"/>
<rect x="564.00" y="174.50" width="90.00" height="37.50" fill="#808080" stroke="none" stroke-width="1" filter="url(#pf)"/>
<rect x="656.50" y="174.50" width="89.50" height="37.50" fill="#888" stroke="none" stroke-width="1" filter="url(#sm2)"/>
<text x="447.00" y="185.60" font-family="'Liberation Sans', sans-serif" font-size="9.0" fill="#000" text-anchor="start" textLength="16.43" lengthAdjust="spacingAndGlyphs" stroke="#000" stroke-width="0.06" xml:space="preserve">0.16</text>
<text x="447.00" y="194.30" font-family="'Liberation Sans', sans-serif" font-size="9.0" fill="#000" text-anchor="start" textLength="16.43" lengthAdjust="spacingAndGlyphs" stroke="#000" stroke-width="0.06" xml:space="preserve">1.88</text>
<text x="447.00" y="203.00" font-family="'Liberation Sans', sans-serif" font-size="9.0" fill="#000" text-anchor="start" textLength="14.09" lengthAdjust="spacingAndGlyphs" stroke="#000" stroke-width="0.06" xml:space="preserve">335</text>
<text x="750.80" y="180.00" font-family="'Liberation Sans', sans-serif" font-size="5.6" fill="#000" text-anchor="start" textLength="15.03" lengthAdjust="spacingAndGlyphs" xml:space="preserve">0.99"</text>
<text x="750.80" y="186.80" font-family="'Liberation Sans', sans-serif" font-size="5.6" fill="#000" text-anchor="start" textLength="25.72" lengthAdjust="spacingAndGlyphs" xml:space="preserve">(370, 29)</text>
<text x="750.80" y="195.40" font-family="'Liberation Sans', sans-serif" font-size="5.6" fill="#000" text-anchor="start" textLength="28.47" lengthAdjust="spacingAndGlyphs" xml:space="preserve">20200421</text>
<text x="750.80" y="201.80" font-family="'Liberation Sans', sans-serif" font-size="5.6" fill="#000" text-anchor="start" textLength="23.90" lengthAdjust="spacingAndGlyphs" xml:space="preserve">v019_03</text>
<text x="750.80" y="208.70" font-family="'Liberation Sans', sans-serif" font-size="5.6" fill="#000" text-anchor="start" textLength="33.95" lengthAdjust="spacingAndGlyphs" xml:space="preserve">320_RL_002</text>
<rect x="470.00" y="214.30" width="90.00" height="37.50" fill="url(#bp1)" stroke="none" stroke-width="1" filter="url(#soft)"/>
<rect x="564.00" y="214.30" width="90.00" height="37.50" fill="#808080" stroke="none" stroke-width="1" filter="url(#pf)"/>
<rect x="656.50" y="214.30" width="89.50" height="37.50" fill="#888" stroke="none" stroke-width="1" filter="url(#sm)"/>
<text x="447.00" y="225.40" font-family="'Liberation Sans', sans-serif" font-size="9.0" fill="#000" text-anchor="start" textLength="16.43" lengthAdjust="spacingAndGlyphs" stroke="#000" stroke-width="0.06" xml:space="preserve">0.09</text>
<text x="447.00" y="234.10" font-family="'Liberation Sans', sans-serif" font-size="9.0" fill="#000" text-anchor="start" textLength="16.43" lengthAdjust="spacingAndGlyphs" stroke="#000" stroke-width="0.06" xml:space="preserve">1.56</text>
<text x="447.00" y="242.80" font-family="'Liberation Sans', sans-serif" font-size="9.0" fill="#000" text-anchor="start" textLength="14.09" lengthAdjust="spacingAndGlyphs" stroke="#000" stroke-width="0.06" xml:space="preserve">354</text>
<text x="750.80" y="219.80" font-family="'Liberation Sans', sans-serif" font-size="5.6" fill="#000" text-anchor="start" textLength="15.03" lengthAdjust="spacingAndGlyphs" xml:space="preserve">1.56"</text>
<text x="750.80" y="226.60" font-family="'Liberation Sans', sans-serif" font-size="5.6" fill="#000" text-anchor="start" textLength="29.27" lengthAdjust="spacingAndGlyphs" xml:space="preserve">(371, 869)</text>
<text x="750.80" y="235.20" font-family="'Liberation Sans', sans-serif" font-size="5.6" fill="#000" text-anchor="start" textLength="28.47" lengthAdjust="spacingAndGlyphs" xml:space="preserve">20200421</text>
<text x="750.80" y="241.60" font-family="'Liberation Sans', sans-serif" font-size="5.6" fill="#000" text-anchor="start" textLength="23.90" lengthAdjust="spacingAndGlyphs" xml:space="preserve">v019_03</text>
<text x="750.80" y="248.50" font-family="'Liberation Sans', sans-serif" font-size="5.6" fill="#000" text-anchor="start" textLength="34.93" lengthAdjust="spacingAndGlyphs" xml:space="preserve">320_RU_095</text>
<rect x="467.30" y="94.50" width="280.70" height="38.50" fill="none" stroke="#0000ff" stroke-width="2"/>
<rect x="467.30" y="134.50" width="280.70" height="38.50" fill="none" stroke="#00ff00" stroke-width="2"/>
<rect x="467.30" y="174.50" width="280.70" height="38.50" fill="none" stroke="#ffa500" stroke-width="2"/>
<rect x="467.30" y="214.30" width="280.70" height="38.50" fill="none" stroke="#ff0000" stroke-width="2"/>
<text x="865.30" y="47.00" font-family="'Liberation Sans', sans-serif" font-size="9.6" fill="#000" text-anchor="middle" textLength="41.81" lengthAdjust="spacingAndGlyphs" stroke="#000" stroke-width="0.1" xml:space="preserve">With Sky</text>
<text x="865.30" y="57.80" font-family="'Liberation Sans', sans-serif" font-size="9.6" fill="#000" text-anchor="middle" textLength="65.76" lengthAdjust="spacingAndGlyphs" stroke="#000" stroke-width="0.1" xml:space="preserve">x, y: 371, 869</text>
<text x="966.00" y="47.00" font-family="'Liberation Sans', sans-serif" font-size="9.6" fill="#000" text-anchor="middle" textLength="60.32" lengthAdjust="spacingAndGlyphs" stroke="#000" stroke-width="0.1" xml:space="preserve">Clean Image</text>
<text x="966.00" y="57.80" font-family="'Liberation Sans', sans-serif" font-size="9.6" fill="#000" text-anchor="middle" textLength="65.76" lengthAdjust="spacingAndGlyphs" stroke="#000" stroke-width="0.1" xml:space="preserve">x, y: 371, 869</text>
<rect x="832.00" y="64.50" width="67.00" height="169.00" fill="#fff" stroke="none" stroke-width="1"/>
<g mask="url(#skymask)">
<rect x="832.00" y="64.50" width="67.00" height="169.00" fill="#888" stroke="none" stroke-width="1" filter="url(#sky)"/>
</g>
<rect x="932.00" y="64.50" width="68.00" height="169.00" fill="url(#bp3)" stroke="none" stroke-width="1" filter="url(#soft)"/>
<rect x="831.80" y="64.40" width="67.00" height="169.00" fill="none" stroke="#0000ff" stroke-width="2.4"/>
<rect x="932.20" y="64.40" width="67.60" height="169.00" fill="none" stroke="#0000ff" stroke-width="2.4"/>
<rect x="1047.90" y="60.80" width="251.30" height="150.20" fill="#fff" stroke="none" stroke-width="1"/>
<line x1="1047.90" y1="180.30" x2="1299.20" y2="180.30" stroke="#444" stroke-width="1"/>
<line x1="1059.28" y1="183.65" x2="1059.28" y2="149.05" stroke="#1f77b4" stroke-width="1.6"/>
<circle cx="1059.28" cy="166.35" r="1.6" fill="#1f77b4"/>
<line x1="1063.94" y1="164.96" x2="1063.94" y2="129.80" stroke="#1f77b4" stroke-width="1.6"/>
<circle cx="1063.94" cy="147.38" r="1.6" fill="#1f77b4"/>
<line x1="1068.60" y1="150.73" x2="1068.60" y2="115.01" stroke="#1f77b4" stroke-width="1.6"/>
<circle cx="1068.60" cy="132.87" r="1.6" fill="#1f77b4"/>
<line x1="1073.26" y1="163.84" x2="1073.26" y2="128.69" stroke="#1f77b4" stroke-width="1.6"/>
<circle cx="1073.26" cy="146.26" r="1.6" fill="#1f77b4"/>
<line x1="1077.92" y1="180.58" x2="1077.92" y2="145.43" stroke="#1f77b4" stroke-width="1.6"/>
<circle cx="1077.92" cy="163.00" r="1.6" fill="#1f77b4"/>
<line x1="1082.58" y1="163.28" x2="1082.58" y2="126.45" stroke="#1f77b4" stroke-width="1.6"/>
<circle cx="1082.58" cy="144.87" r="1.6" fill="#1f77b4"/>
<line x1="1087.24" y1="157.42" x2="1087.24" y2="120.59" stroke="#1f77b4" stroke-width="1.6"/>
<circle cx="1087.24" cy="139.01" r="1.6" fill="#1f77b4"/>
<line x1="1091.90" y1="153.52" x2="1091.90" y2="116.13" stroke="#1f77b4" stroke-width="1.6"/>
<circle cx="1091.90" cy="134.82" r="1.6" fill="#1f77b4"/>
<line x1="1096.56" y1="160.77" x2="1096.56" y2="124.50" stroke="#1f77b4" stroke-width="1.6"/>
<circle cx="1096.56" cy="142.64" r="1.6" fill="#1f77b4"/>
<line x1="1101.22" y1="153.24" x2="1101.22" y2="118.08" stroke="#1f77b4" stroke-width="1.6"/>
<circle cx="1101.22" cy="135.66" r="1.6" fill="#1f77b4"/>
<line x1="1105.88" y1="181.42" x2="1105.88" y2="146.82" stroke="#1f77b4" stroke-width="1.6"/>
<circle cx="1105.88" cy="164.12" r="1.6" fill="#1f77b4"/>
<line x1="1110.54" y1="168.02" x2="1110.54" y2="132.87" stroke="#1f77b4" stroke-width="1.6"/>
<circle cx="1110.54" cy="150.45" r="1.6" fill="#1f77b4"/>
<line x1="1115.20" y1="171.09" x2="1115.20" y2="135.94" stroke="#1f77b4" stroke-width="1.6"/>
<circle cx="1115.20" cy="153.52" r="1.6" fill="#1f77b4"/>
<line x1="1119.86" y1="190.06" x2="1119.86" y2="155.47" stroke="#1f77b4" stroke-width="1.6"/>
<circle cx="1119.86" cy="172.77" r="1.6" fill="#1f77b4"/>
<line x1="1124.52" y1="175.84" x2="1124.52" y2="141.80" stroke="#1f77b4" stroke-width="1.6"/>
<circle cx="1124.52" cy="158.82" r="1.6" fill="#1f77b4"/>
<line x1="1129.18" y1="167.19" x2="1129.18" y2="133.71" stroke="#1f77b4" stroke-width="1.6"/>
<circle cx="1129.18" cy="150.45" r="1.6" fill="#1f77b4"/>
<line x1="1133.84" y1="133.43" x2="1133.84" y2="98.83" stroke="#1f77b4" stroke-width="1.6"/>
<circle cx="1133.84" cy="116.13" r="1.6" fill="#1f77b4"/>
<line x1="1138.50" y1="123.11" x2="1138.50" y2="87.95" stroke="#1f77b4" stroke-width="1.6"/>
<circle cx="1138.50" cy="105.53" r="1.6" fill="#1f77b4"/>
<line x1="1143.16" y1="175.00" x2="1143.16" y2="139.85" stroke="#1f77b4" stroke-width="1.6"/>
<circle cx="1143.16" cy="157.42" r="1.6" fill="#1f77b4"/>
<line x1="1147.82" y1="160.77" x2="1147.82" y2="126.17" stroke="#1f77b4" stroke-width="1.6"/>
<circle cx="1147.82" cy="143.47" r="1.6" fill="#1f77b4"/>
<line x1="1152.48" y1="145.98" x2="1152.48" y2="111.39" stroke="#1f77b4" stroke-width="1.6"/>
<circle cx="1152.48" cy="128.69" r="1.6" fill="#1f77b4"/>
<line x1="1157.14" y1="172.49" x2="1157.14" y2="137.89" stroke="#1f77b4" stroke-width="1.6"/>
<circle cx="1157.14" cy="155.19" r="1.6" fill="#1f77b4"/>
<line x1="1161.80" y1="132.31" x2="1161.80" y2="97.16" stroke="#1f77b4" stroke-width="1.6"/>
<circle cx="1161.80" cy="114.74" r="1.6" fill="#1f77b4"/>
<line x1="1166.46" y1="138.45" x2="1166.46" y2="103.30" stroke="#1f77b4" stroke-width="1.6"/>
<circle cx="1166.46" cy="120.87" r="1.6" fill="#1f77b4"/>
<line x1="1171.12" y1="110.83" x2="1171.12" y2="75.12" stroke="#1f77b4" stroke-width="1.6"/>
<circle cx="1171.12" cy="92.97" r="1.6" fill="#1f77b4"/>
<line x1="1175.78" y1="105.81" x2="1175.78" y2="67.86" stroke="#1f77b4" stroke-width="1.6"/>
<circle cx="1175.78" cy="86.84" r="1.6" fill="#1f77b4"/>
<line x1="1180.44" y1="134.27" x2="1180.44" y2="96.88" stroke="#1f77b4" stroke-width="1.6"/>
<circle cx="1180.44" cy="115.57" r="1.6" fill="#1f77b4"/>
<line x1="1185.10" y1="126.17" x2="1185.10" y2="88.23" stroke="#1f77b4" stroke-width="1.6"/>
<circle cx="1185.10" cy="107.20" r="1.6" fill="#1f77b4"/>
<line x1="1189.76" y1="177.23" x2="1189.76" y2="140.96" stroke="#1f77b4" stroke-width="1.6"/>
<circle cx="1189.76" cy="159.10" r="1.6" fill="#1f77b4"/>
<line x1="1194.42" y1="187.28" x2="1194.42" y2="151.01" stroke="#1f77b4" stroke-width="1.6"/>
<circle cx="1194.42" cy="169.14" r="1.6" fill="#1f77b4"/>
<line x1="1199.08" y1="169.98" x2="1199.08" y2="134.27" stroke="#1f77b4" stroke-width="1.6"/>
<circle cx="1199.08" cy="152.12" r="1.6" fill="#1f77b4"/>
<line x1="1203.74" y1="194.53" x2="1203.74" y2="159.38" stroke="#1f77b4" stroke-width="1.6"/>
<circle cx="1203.74" cy="176.95" r="1.6" fill="#1f77b4"/>
<line x1="1208.40" y1="137.61" x2="1208.40" y2="103.02" stroke="#1f77b4" stroke-width="1.6"/>
<circle cx="1208.40" cy="120.32" r="1.6" fill="#1f77b4"/>
<line x1="1213.06" y1="180.02" x2="1213.06" y2="145.43" stroke="#1f77b4" stroke-width="1.6"/>
<circle cx="1213.06" cy="162.72" r="1.6" fill="#1f77b4"/>
<line x1="1217.72" y1="172.21" x2="1217.72" y2="137.06" stroke="#1f77b4" stroke-width="1.6"/>
<circle cx="1217.72" cy="154.63" r="1.6" fill="#1f77b4"/>
<line x1="1222.38" y1="203.18" x2="1222.38" y2="168.58" stroke="#1f77b4" stroke-width="1.6"/>
<circle cx="1222.38" cy="185.88" r="1.6" fill="#1f77b4"/>
<line x1="1227.04" y1="141.80" x2="1227.04" y2="107.20" stroke="#1f77b4" stroke-width="1.6"/>
<circle cx="1227.04" cy="124.50" r="1.6" fill="#1f77b4"/>
<line x1="1231.70" y1="154.91" x2="1231.70" y2="120.32" stroke="#1f77b4" stroke-width="1.6"/>
<circle cx="1231.70" cy="137.61" r="1.6" fill="#1f77b4"/>
<line x1="1236.36" y1="197.04" x2="1236.36" y2="163.56" stroke="#1f77b4" stroke-width="1.6"/>
<circle cx="1236.36" cy="180.30" r="1.6" fill="#1f77b4"/>
<line x1="1241.02" y1="173.05" x2="1241.02" y2="138.45" stroke="#1f77b4" stroke-width="1.6"/>
<circle cx="1241.02" cy="155.75" r="1.6" fill="#1f77b4"/>
<line x1="1245.68" y1="153.80" x2="1245.68" y2="119.20" stroke="#1f77b4" stroke-width="1.6"/>
<circle cx="1245.68" cy="136.50" r="1.6" fill="#1f77b4"/>
<line x1="1250.34" y1="175.28" x2="1250.34" y2="140.12" stroke="#1f77b4" stroke-width="1.6"/>
<circle cx="1250.34" cy="157.70" r="1.6" fill="#1f77b4"/>
<line x1="1255.00" y1="178.63" x2="1255.00" y2="145.15" stroke="#1f77b4" stroke-width="1.6"/>
<circle cx="1255.00" cy="161.89" r="1.6" fill="#1f77b4"/>
<line x1="1259.66" y1="144.59" x2="1259.66" y2="109.99" stroke="#1f77b4" stroke-width="1.6"/>
<circle cx="1259.66" cy="127.29" r="1.6" fill="#1f77b4"/>
<line x1="1264.32" y1="130.08" x2="1264.32" y2="95.48" stroke="#1f77b4" stroke-width="1.6"/>
<circle cx="1264.32" cy="112.78" r="1.6" fill="#1f77b4"/>
<line x1="1268.98" y1="167.75" x2="1268.98" y2="133.15" stroke="#1f77b4" stroke-width="1.6"/>
<circle cx="1268.98" cy="150.45" r="1.6" fill="#1f77b4"/>
<line x1="1273.64" y1="155.19" x2="1273.64" y2="121.71" stroke="#1f77b4" stroke-width="1.6"/>
<circle cx="1273.64" cy="138.45" r="1.6" fill="#1f77b4"/>
<line x1="1278.30" y1="157.98" x2="1278.30" y2="124.50" stroke="#1f77b4" stroke-width="1.6"/>
<circle cx="1278.30" cy="141.24" r="1.6" fill="#1f77b4"/>
<line x1="1282.96" y1="140.40" x2="1282.96" y2="106.92" stroke="#1f77b4" stroke-width="1.6"/>
<circle cx="1282.96" cy="123.66" r="1.6" fill="#1f77b4"/>
<line x1="1287.62" y1="158.82" x2="1287.62" y2="125.34" stroke="#1f77b4" stroke-width="1.6"/>
<circle cx="1287.62" cy="142.08" r="1.6" fill="#1f77b4"/>
<polyline points="1068.60,147.94 1069.76,147.94 1070.93,147.94 1072.09,147.94 1073.26,147.94 1074.42,147.94 1075.59,147.94 1076.75,147.94 1077.92,147.94 1079.08,147.94 1080.25,147.94 1081.41,147.94 1082.58,147.94 1083.74,147.94 1084.91,147.94 1086.07,147.94 1087.24,147.94 1088.40,147.94 1089.57,147.94 1090.73,147.94 1091.90,147.94 1093.06,147.94 1094.23,147.94 1095.39,147.94 1096.56,147.94 1097.72,147.94 1098.89,147.94 1100.05,147.94 1101.22,147.94 1102.38,147.94 1103.55,147.94 1104.71,147.94 1105.88,147.94 1107.04,147.94 1108.21,147.94 1109.38,147.94 1110.54,147.94 1111.70,147.94 1112.87,147.94 1114.03,147.94 1115.20,147.94 1116.37,147.94 1117.53,147.94 1118.69,147.94 1119.86,147.94 1121.02,147.94 1122.19,147.94 1123.36,147.94 1124.52,147.94 1125.68,147.94 1126.85,147.94 1128.01,147.94 1129.18,147.94 1130.34,147.94 1131.51,147.94 1132.67,147.94 1133.84,147.94 1135.00,147.94 1136.17,147.94 1137.33,147.94 1138.50,147.94 1139.66,147.93 1140.83,147.93 1141.99,147.93 1143.16,147.92 1144.32,147.91 1145.49,147.89 1146.65,147.86 1147.82,147.81 1148.98,147.72 1150.15,147.58 1151.31,147.37 1152.48,147.05 1153.64,146.58 1154.81,145.91 1155.97,144.98 1157.14,143.72 1158.30,142.05 1159.47,139.92 1160.63,137.25 1161.80,134.02 1162.96,130.23 1164.13,125.91 1165.29,121.17 1166.46,116.14 1167.62,111.02 1168.79,106.06 1169.95,101.50 1171.12,97.61 1172.28,94.64 1173.45,92.77 1174.62,92.14 1175.78,92.77 1176.94,94.64 1178.11,97.61 1179.27,101.50 1180.44,106.06 1181.61,111.02 1182.77,116.14 1183.93,121.17 1185.10,125.91 1186.26,130.23 1187.43,134.02 1188.59,137.25 1189.76,139.92 1190.92,142.05 1192.09,143.72 1193.25,144.98 1194.42,145.91 1195.58,146.58 1196.75,147.05 1197.91,147.37 1199.08,147.58 1200.24,147.72 1201.41,147.81 1202.57,147.86 1203.74,147.89 1204.90,147.91 1206.07,147.92 1207.23,147.93 1208.40,147.93 1209.56,147.93 1210.73,147.94 1211.89,147.94 1213.06,147.94 1214.22,147.94 1215.39,147.94 1216.55,147.94 1217.72,147.94 1218.88,147.94 1220.05,147.94 1221.21,147.94 1222.38,147.94 1223.54,147.94 1224.71,147.94 1225.88,147.94 1227.04,147.94 1228.20,147.94 1229.37,147.94 1230.53,147.94 1231.70,147.94 1232.87,147.94 1234.03,147.94 1235.19,147.94 1236.36,147.94 1237.52,147.94 1238.69,147.94 1239.86,147.94 1241.02,147.94 1242.18,147.94 1243.35,147.94 1244.51,147.94 1245.68,147.94 1246.84,147.94 1248.01,147.94 1249.17,147.94 1250.34,147.94 1251.50,147.94 1252.67,147.94 1253.84,147.94 1255.00,147.94 1256.16,147.94 1257.33,147.94 1258.49,147.94 1259.66,147.94 1260.82,147.94 1261.99,147.94 1263.15,147.94 1264.32,147.94 1265.48,147.94 1266.65,147.94 1267.81,147.94 1268.98,147.94 1270.14,147.94 1271.31,147.94 1272.47,147.94 1273.64,147.94 1274.80,147.94 1275.97,147.94 1277.13,147.94 1278.30,147.94 1279.46,147.94 1280.63,147.94 1281.79,147.94 1282.96,147.94" fill="none" stroke="#3a3a3a" stroke-width="1.5"/>
<rect x="1047.90" y="60.80" width="251.30" height="150.20" fill="none" stroke="#222" stroke-width="1"/>
<line x1="1044.40" y1="208.20" x2="1047.90" y2="208.20" stroke="#222" stroke-width="0.8"/>
<text x="1042.40" y="211.40" font-family="'Liberation Sans', sans-serif" font-size="8.8" fill="#000" text-anchor="end" textLength="12.97" lengthAdjust="spacingAndGlyphs" stroke="#000" stroke-width="0.06" xml:space="preserve">−1</text>
<line x1="1044.40" y1="180.30" x2="1047.90" y2="180.30" stroke="#222" stroke-width="0.8"/>
<text x="1042.40" y="183.50" font-family="'Liberation Sans', sans-serif" font-size="8.8" fill="#000" text-anchor="end" textLength="5.60" lengthAdjust="spacingAndGlyphs" stroke="#000" stroke-width="0.06" xml:space="preserve">0</text>
<line x1="1044.40" y1="152.40" x2="1047.90" y2="152.40" stroke="#222" stroke-width="0.8"/>
<text x="1042.40" y="155.60" font-family="'Liberation Sans', sans-serif" font-size="8.8" fill="#000" text-anchor="end" textLength="5.60" lengthAdjust="spacingAndGlyphs" stroke="#000" stroke-width="0.06" xml:space="preserve">1</text>
<line x1="1044.40" y1="124.50" x2="1047.90" y2="124.50" stroke="#222" stroke-width="0.8"/>
<text x="1042.40" y="127.70" font-family="'Liberation Sans', sans-serif" font-size="8.8" fill="#000" text-anchor="end" textLength="5.60" lengthAdjust="spacingAndGlyphs" stroke="#000" stroke-width="0.06" xml:space="preserve">2</text>
<line x1="1044.40" y1="96.60" x2="1047.90" y2="96.60" stroke="#222" stroke-width="0.8"/>
<text x="1042.40" y="99.80" font-family="'Liberation Sans', sans-serif" font-size="8.8" fill="#000" text-anchor="end" textLength="5.60" lengthAdjust="spacingAndGlyphs" stroke="#000" stroke-width="0.06" xml:space="preserve">3</text>
<line x1="1044.40" y1="68.70" x2="1047.90" y2="68.70" stroke="#222" stroke-width="0.8"/>
<text x="1042.40" y="71.90" font-family="'Liberation Sans', sans-serif" font-size="8.8" fill="#000" text-anchor="end" textLength="5.60" lengthAdjust="spacingAndGlyphs" stroke="#000" stroke-width="0.06" xml:space="preserve">4</text>
<line x1="1068.60" y1="211.00" x2="1068.60" y2="214.50" stroke="#222" stroke-width="0.8"/>
<text x="1068.60" y="224.70" font-family="'Liberation Sans', sans-serif" font-size="8.8" fill="#000" text-anchor="middle" textLength="22.39" lengthAdjust="spacingAndGlyphs" stroke="#000" stroke-width="0.06" xml:space="preserve">4200</text>
<line x1="1115.20" y1="211.00" x2="1115.20" y2="214.50" stroke="#222" stroke-width="0.8"/>
<text x="1115.20" y="224.70" font-family="'Liberation Sans', sans-serif" font-size="8.8" fill="#000" text-anchor="middle" textLength="22.39" lengthAdjust="spacingAndGlyphs" stroke="#000" stroke-width="0.06" xml:space="preserve">4220</text>
<line x1="1161.80" y1="211.00" x2="1161.80" y2="214.50" stroke="#222" stroke-width="0.8"/>
<text x="1161.80" y="224.70" font-family="'Liberation Sans', sans-serif" font-size="8.8" fill="#000" text-anchor="middle" textLength="22.39" lengthAdjust="spacingAndGlyphs" stroke="#000" stroke-width="0.06" xml:space="preserve">4240</text>
<line x1="1208.40" y1="211.00" x2="1208.40" y2="214.50" stroke="#222" stroke-width="0.8"/>
<text x="1208.40" y="224.70" font-family="'Liberation Sans', sans-serif" font-size="8.8" fill="#000" text-anchor="middle" textLength="22.39" lengthAdjust="spacingAndGlyphs" stroke="#000" stroke-width="0.06" xml:space="preserve">4260</text>
<line x1="1255.00" y1="211.00" x2="1255.00" y2="214.50" stroke="#222" stroke-width="0.8"/>
<text x="1255.00" y="224.70" font-family="'Liberation Sans', sans-serif" font-size="8.8" fill="#000" text-anchor="middle" textLength="22.39" lengthAdjust="spacingAndGlyphs" stroke="#000" stroke-width="0.06" xml:space="preserve">4280</text>
<text x="1049.00" y="71.30" font-family="'Liberation Sans', sans-serif" font-size="8.8" fill="#000" text-anchor="start" textLength="5.41" lengthAdjust="spacingAndGlyphs" stroke="#000" stroke-width="0.06" xml:space="preserve">e</text>
<text x="1055.00" y="67.30" font-family="'Liberation Sans', sans-serif" font-size="6.2" fill="#000" text-anchor="start" textLength="13.09" lengthAdjust="spacingAndGlyphs" xml:space="preserve">−17</text>
<text x="1067.30" y="71.30" font-family="'Liberation Sans', sans-serif" font-size="8.8" fill="#000" text-anchor="start" textLength="10.80" lengthAdjust="spacingAndGlyphs" stroke="#000" stroke-width="0.06" xml:space="preserve">x2</text>
<text x="1077.00" y="71.30" font-family="'Liberation Sans', sans-serif" font-size="8.8" fill="#000" text-anchor="start" font-style="italic" textLength="6.02" lengthAdjust="spacingAndGlyphs" stroke="#000" stroke-width="0.06" xml:space="preserve">Å</text>
<clipPath id="bigclip"><rect x="101.7" y="348.4" width="1197.9" height="84"/></clipPath>
<rect x="101.70" y="348.40" width="1197.90" height="84.00" fill="#fff" stroke="none" stroke-width="1"/>
<g clip-path="url(#bigclip)">
<rect x="513" y="348.4" width="54" height="84.0" fill="#c6c600"/>
<polygon points="101.60,421.50 103.00,395.00 104.30,381.40 107.50,379.80 110.70,380.40 116.00,382.00 120.40,383.60 136.40,379.30 140.70,386.80 151.40,391.00 157.90,392.00 166.40,394.30 172.90,391.00 181.40,388.90 191.00,394.30 202.90,397.50 217.90,396.40 228.60,399.60 240.40,397.50 250.00,400.20 262.90,401.20 282.10,401.80 303.60,405.00 335.70,407.20 343.20,403.40 357.10,407.20 400.00,406.60 507.00,409.20 700.00,409.30 1000.00,409.30 1150.00,409.30 1257.00,407.70 1273.00,407.20 1284.00,409.30 1289.00,414.60 1296.80,421.50 1296.80,421.50 1289.00,428.40 1284.00,433.70 1273.00,435.80 1257.00,435.30 1150.00,433.70 1000.00,433.70 700.00,433.70 507.00,433.80 400.00,436.40 357.10,435.80 343.20,439.60 335.70,435.80 303.60,438.00 282.10,441.20 262.90,441.80 250.00,442.80 240.40,445.50 228.60,443.40 217.90,446.60 202.90,445.50 191.00,448.70 181.40,454.10 172.90,452.00 166.40,448.70 157.90,451.00 151.40,452.00 140.70,456.20 136.40,463.70 120.40,459.40 116.00,461.00 110.70,462.60 107.50,463.20 104.30,461.60 103.00,448.00 101.60,421.50" fill="#808080" fill-opacity="0.5"/>
<line x1="101.70" y1="421.50" x2="1299.60" y2="421.50" stroke="#404040" stroke-width="1"/>
<rect x="121.9" y="348.4" width="12.799999999999983" height="84.0" fill="#606060" fill-opacity="0.55" stroke="#333" stroke-width="1.2"/>
<line x1="121.90" y1="374.40" x2="134.70" y2="366.40" stroke="#333" stroke-width="1.0"/>
<line x1="121.90" y1="395.40" x2="134.70" y2="387.40" stroke="#333" stroke-width="1.0"/>
<line x1="121.90" y1="416.40" x2="134.70" y2="408.40" stroke="#333" stroke-width="1.0"/>
<line x1="121.90" y1="437.40" x2="134.70" y2="429.40" stroke="#333" stroke-width="1.0"/>
<line x1="121.90" y1="458.40" x2="134.70" y2="450.40" stroke="#333" stroke-width="1.0"/>
<rect x="1252.1" y="348.4" width="6.600000000000136" height="84.0" fill="#606060" fill-opacity="0.55" stroke="#333" stroke-width="1.2"/>
<line x1="1252.10" y1="374.40" x2="1258.70" y2="366.40" stroke="#333" stroke-width="1.0"/>
<line x1="1252.10" y1="395.40" x2="1258.70" y2="387.40" stroke="#333" stroke-width="1.0"/>
<line x1="1252.10" y1="416.40" x2="1258.70" y2="408.40" stroke="#333" stroke-width="1.0"/>
<line x1="1252.10" y1="437.40" x2="1258.70" y2="429.40" stroke="#333" stroke-width="1.0"/>
<line x1="1252.10" y1="458.40" x2="1258.70" y2="450.40" stroke="#333" stroke-width="1.0"/>
<polyline points="101.61,417.32 104.82,417.86 105.89,431.79 108.04,429.65 109.11,424.29 110.18,430.72 110.71,391.07 111.79,400.72 113.39,387.86 114.46,409.29 116.07,408.22 117.14,409.29 118.21,422.15 119.29,420.00 120.36,431.79 121.97,431.79 122.50,380.36 124.64,378.22 126.25,399.64 127.64,351.96 128.93,385.72 131.07,422.15 132.68,431.79 134.29,431.79 134.82,396.43 136.43,405.00 139.11,421.07 141.79,388.93 142.86,418.93 146.07,405.00 148.75,373.39 149.82,409.29 151.43,431.79 154.11,393.22 155.72,400.72 157.86,413.57 158.93,415.72 161.07,431.79 162.68,400.72 164.29,405.00 165.36,401.79 166.97,413.57 168.57,407.15 170.18,431.79 171.25,414.65 173.40,423.22 176.61,397.50 179.29,403.39 180.90,431.79 182.50,417.86 185.72,405.00 188.40,428.57 189.47,401.79 192.15,411.43 194.29,410.36 196.97,431.79 201.25,392.14 203.93,431.79 205.54,393.75 206.61,423.22 208.22,406.07 209.83,407.15 211.97,420.00 213.58,417.86 215.72,397.50 217.86,413.57 218.40,427.50 220.00,413.57 221.61,431.79 223.22,417.86 224.29,422.15 226.97,414.65 229.65,422.15 231.79,408.22 233.40,427.50 235.54,424.29 237.68,425.36 241.43,397.50 244.11,413.57 246.26,400.72 248.40,420.00 250.00,400.18 252.14,424.29 255.36,407.15 259.11,430.72 260.71,418.93 262.32,424.29 263.93,424.29 265.54,411.97 266.61,431.79 267.68,408.22 271.43,423.22 273.57,402.86 275.72,431.79 277.32,410.36 278.93,391.61 280.54,414.65 282.14,401.79 285.36,424.82 288.57,392.14 291.25,406.07 293.39,431.79 294.79,387.86 296.07,412.50 298.00,385.72 299.29,427.50 302.50,404.47 306.25,422.15 308.39,420.00 311.07,413.57 313.22,428.57 314.82,411.43 316.43,425.36 319.11,400.18 321.25,423.75 322.86,404.47 325.00,431.79 327.15,402.32 329.29,413.57 331.43,429.65 333.04,417.86 334.65,431.79 337.32,408.22 341.07,413.57 343.75,421.61 345.36,413.57 346.97,423.22 349.11,402.86 351.25,409.29 353.40,387.86 355.54,405.00 357.15,414.65 358.22,400.72 361.43,429.65 363.58,406.07 365.72,407.15 367.33,421.07 369.47,405.00 372.15,413.57 373.75,403.93 375.90,411.43 378.04,407.15 380.18,415.18 382.33,406.07 385.54,421.07 387.68,401.25 390.36,411.43 393.58,399.64 396.79,418.93 400.00,400.72 401.61,417.86 403.21,413.57 405.89,429.65 408.57,406.07 410.18,421.07 412.32,407.15 416.61,424.29 418.21,410.36 420.36,423.22 423.04,405.00 425.18,416.79 426.25,405.00 428.39,403.39 430.00,408.22 432.14,400.18 433.75,404.47 435.36,401.25 436.97,409.29 438.57,406.07 440.72,407.15 442.86,415.72 444.47,414.65 446.07,421.07 448.75,411.43 450.89,424.29 453.04,404.47 454.64,416.79 456.79,401.79 461.07,417.86 463.75,407.15 466.43,421.07 468.57,393.75 470.18,402.86 472.32,400.72 475.00,403.93 477.15,409.29 479.29,421.07 481.43,411.43 484.65,401.25 486.25,410.36 490.00,408.22 493.22,402.86 495.36,392.68 497.50,401.79 499.11,396.43 501.25,405.00 502.86,400.18 505.00,418.93 507.15,406.07 509.29,406.61 510.90,415.72 513.58,402.86 515.72,414.65 518.40,403.93 521.08,406.07 522.68,413.57 524.83,410.36 526.43,417.86 530.72,392.68 532.33,411.97 534.47,402.32 536.08,411.43 537.15,396.43 539.83,385.18 541.43,393.22 542.51,395.36 544.65,414.65 547.86,420.00 550.00,411.43 552.14,423.22 553.75,400.72 555.89,421.07 558.04,405.00 560.18,413.57 562.86,395.36 564.46,409.29 566.61,398.57 569.82,417.86 571.97,400.18 573.57,405.00 576.79,407.15 578.93,410.36 581.61,421.07 582.68,402.86 584.29,418.93 586.43,399.11 589.11,412.50 591.25,401.79 593.39,410.36 595.00,408.22 597.14,415.72 598.75,409.29 602.50,417.86 603.57,402.86 607.86,405.00 610.00,415.72 612.15,400.72 614.29,407.15 617.50,398.57 620.72,394.29 621.79,407.15 623.93,390.00 626.07,415.72 628.22,410.36 629.82,396.43 631.97,418.93 633.57,396.43 635.18,410.36 636.79,394.29 640.00,403.93 642.68,421.61 644.29,400.72 646.97,405.00 648.57,414.11 650.18,407.15 652.33,414.65 653.93,402.32 656.08,412.50 658.22,407.15 661.43,396.97 664.65,411.43 667.86,401.25 670.54,414.65 672.15,400.18 674.83,414.65 677.50,394.29 679.11,410.36 680.72,391.61 682.86,400.72 685.00,402.86 687.15,411.43 689.29,408.22 692.51,402.86 695.18,398.57 696.79,406.07 700.00,387.86 701.61,400.72 703.21,402.86 704.82,398.57 707.50,416.79 709.11,401.25 710.71,413.57 712.32,405.00 714.46,426.43 716.07,410.36 717.68,411.43 719.29,405.00 720.89,414.65 723.04,408.22 725.72,402.86 728.39,400.18 730.00,411.43 731.61,401.25 734.29,405.00 738.04,390.00 740.72,406.07 743.93,387.86 746.07,401.79 747.68,388.39 749.29,405.00 750.89,407.15 753.04,392.14 754.64,407.15 756.79,395.36 759.47,405.00 761.61,394.29 763.75,396.43 767.50,418.93 769.65,407.15 771.25,407.15 773.40,393.75 776.07,408.22 778.22,412.50 781.43,394.82 783.04,406.07 784.65,396.43 788.40,411.43 791.07,388.93 793.22,405.00 795.36,400.72 797.50,396.43 799.11,392.14 801.25,400.72 803.40,410.36 807.15,400.72 808.75,405.00 810.90,395.36 812.50,403.93 813.58,394.29 815.72,399.11 817.33,395.36 821.08,395.89 824.29,391.07 828.58,402.86 831.25,394.29 834.47,385.72 836.08,393.22 838.22,388.93 840.36,407.15 843.58,390.00 846.26,387.32 850.00,402.86 852.68,393.22 854.82,408.22 856.96,396.43 859.11,393.75 861.79,403.93 864.46,400.72 866.61,412.50 867.68,397.50 869.82,385.72 873.04,412.50 875.72,392.14 877.86,388.93 879.47,398.57 880.54,385.18 882.68,409.82 884.82,409.29 887.50,390.54 890.18,398.57 891.25,398.04 893.39,413.57 894.47,400.18 895.54,408.22 897.14,407.15 899.29,409.29 901.43,396.43 903.04,416.79 905.18,405.54 907.32,406.61 911.07,393.22 913.22,394.82 914.82,391.07 915.90,398.57 917.50,393.22 919.11,376.61 920.72,390.00 921.79,387.86 923.93,396.43 926.07,406.07 928.75,406.07 930.90,395.36 932.50,407.15 933.57,394.29 934.65,407.15 937.32,391.07 939.47,402.86 940.54,380.36 942.68,403.39 944.29,392.14 946.43,390.54 948.04,397.50 950.18,394.29 952.33,390.00 955.54,407.68 958.22,400.18 959.83,404.47 961.97,394.82 964.11,407.68 967.33,383.57 970.54,402.86 972.15,395.36 973.75,403.39 975.36,398.04 978.58,388.93 980.18,392.14 981.79,410.36 983.40,393.75 986.08,392.68 988.75,391.07 990.36,392.14 992.51,401.79 995.72,397.50 1000.00,396.43 1002.68,382.50 1006.43,397.50 1008.57,393.22 1009.64,398.57 1012.32,381.97 1015.54,400.72 1017.14,387.86 1018.75,395.36 1020.89,394.29 1022.50,388.93 1025.18,399.11 1028.39,380.36 1031.61,403.39 1033.75,391.07 1035.36,399.64 1036.97,387.32 1038.57,396.43 1040.18,385.72 1042.32,392.14 1043.39,388.93 1045.00,399.64 1047.14,390.00 1049.82,405.00 1052.50,392.14 1054.64,406.07 1056.79,391.07 1058.39,404.47 1061.07,401.25 1063.75,405.54 1065.36,387.86 1068.57,394.29 1070.72,399.11 1072.32,411.43 1075.54,390.00 1078.22,408.22 1080.90,394.29 1083.57,393.22 1084.65,385.72 1086.25,385.72 1087.32,376.61 1088.93,390.00 1091.07,391.07 1092.68,390.00 1094.82,402.86 1096.97,392.14 1099.65,396.43 1102.33,402.32 1105.00,390.00 1107.15,397.50 1109.83,383.57 1111.97,382.50 1114.65,406.07 1117.33,400.72 1118.40,394.82 1121.08,392.14 1124.83,402.32 1126.43,390.00 1128.58,389.47 1130.18,377.14 1131.79,375.00 1132.86,394.29 1134.47,383.04 1137.15,383.57 1139.29,390.00 1141.97,390.00 1144.11,382.50 1147.33,373.93 1150.00,392.14 1152.14,379.29 1154.29,402.86 1155.89,382.50 1156.96,391.07 1158.04,382.50 1159.11,393.22 1161.25,382.50 1163.93,393.22 1167.14,386.79 1170.36,395.36 1173.57,376.61 1176.79,406.07 1178.93,394.82 1180.54,408.22 1182.14,390.00 1184.82,373.39 1186.97,383.57 1189.64,404.47 1192.86,382.50 1196.61,401.25 1199.82,395.36 1202.50,411.97 1203.57,391.07 1205.18,399.64 1209.47,379.29 1212.15,398.57 1214.29,396.43 1215.36,380.36 1218.04,393.22 1219.65,385.72 1221.25,394.29 1222.86,383.57 1225.00,391.07 1227.15,388.39 1229.82,393.75 1233.04,379.82 1234.65,385.72 1236.79,396.43 1240.00,366.43 1242.68,391.07 1244.29,387.86 1246.97,391.07 1249.65,377.14 1251.25,393.22 1252.33,376.07 1253.93,403.93 1256.08,386.79 1257.68,393.22 1259.29,390.00 1260.90,400.72 1263.04,385.72 1267.33,377.14 1270.54,396.43 1273.22,407.68 1275.90,386.79 1278.04,391.07 1279.11,387.86 1281.79,403.39 1283.93,396.43 1287.15,407.15 1289.29,401.79 1292.51,402.86 1294.65,411.43 1296.79,393.22 1299.47,400.72" fill="none" stroke="#0000ff" stroke-width="1.4" stroke-linejoin="round"/>
<line x1="540.28" y1="348.40" x2="540.28" y2="432.40" stroke="#111" stroke-width="1.2" stroke-dasharray="2,2"/>
</g>
<rect x="101.70" y="348.40" width="1197.90" height="84.00" fill="none" stroke="#333" stroke-width="1.2"/>
<line x1="98.20" y1="421.50" x2="101.70" y2="421.50" stroke="#333" stroke-width="0.8"/>
<text x="96.20" y="425.10" font-family="'Liberation Sans', sans-serif" font-size="10" fill="#000" text-anchor="end" textLength="6.36" lengthAdjust="spacingAndGlyphs" stroke="#000" stroke-width="0.1" xml:space="preserve">0</text>
<line x1="98.20" y1="399.96" x2="101.70" y2="399.96" stroke="#333" stroke-width="0.8"/>
<text x="96.20" y="403.56" font-family="'Liberation Sans', sans-serif" font-size="10" fill="#000" text-anchor="end" textLength="6.36" lengthAdjust="spacingAndGlyphs" stroke="#000" stroke-width="0.1" xml:space="preserve">2</text>
<line x1="98.20" y1="378.42" x2="101.70" y2="378.42" stroke="#333" stroke-width="0.8"/>
<text x="96.20" y="382.02" font-family="'Liberation Sans', sans-serif" font-size="10" fill="#000" text-anchor="end" textLength="6.36" lengthAdjust="spacingAndGlyphs" stroke="#000" stroke-width="0.1" xml:space="preserve">4</text>
<line x1="98.20" y1="356.88" x2="101.70" y2="356.88" stroke="#333" stroke-width="0.8"/>
<text x="96.20" y="360.48" font-family="'Liberation Sans', sans-serif" font-size="10" fill="#000" text-anchor="end" textLength="6.36" lengthAdjust="spacingAndGlyphs" stroke="#000" stroke-width="0.1" xml:space="preserve">6</text>
<line x1="101.70" y1="432.40" x2="101.70" y2="435.90" stroke="#333" stroke-width="0.8"/>
<text x="101.70" y="447.50" font-family="'Liberation Sans', sans-serif" font-size="10" fill="#000" text-anchor="middle" textLength="25.45" lengthAdjust="spacingAndGlyphs" stroke="#000" stroke-width="0.1" xml:space="preserve">3500</text>
<line x1="160.55" y1="432.40" x2="160.55" y2="435.90" stroke="#333" stroke-width="0.8"/>
<text x="160.55" y="447.50" font-family="'Liberation Sans', sans-serif" font-size="10" fill="#000" text-anchor="middle" textLength="25.45" lengthAdjust="spacingAndGlyphs" stroke="#000" stroke-width="0.1" xml:space="preserve">3600</text>
<line x1="219.40" y1="432.40" x2="219.40" y2="435.90" stroke="#333" stroke-width="0.8"/>
<text x="219.40" y="447.50" font-family="'Liberation Sans', sans-serif" font-size="10" fill="#000" text-anchor="middle" textLength="25.45" lengthAdjust="spacingAndGlyphs" stroke="#000" stroke-width="0.1" xml:space="preserve">3700</text>
<line x1="278.25" y1="432.40" x2="278.25" y2="435.90" stroke="#333" stroke-width="0.8"/>
<text x="278.25" y="447.50" font-family="'Liberation Sans', sans-serif" font-size="10" fill="#000" text-anchor="middle" textLength="25.45" lengthAdjust="spacingAndGlyphs" stroke="#000" stroke-width="0.1" xml:space="preserve">3800</text>
<line x1="337.10" y1="432.40" x2="337.10" y2="435.90" stroke="#333" stroke-width="0.8"/>
<text x="337.10" y="447.50" font-family="'Liberation Sans', sans-serif" font-size="10" fill="#000" text-anchor="middle" textLength="25.45" lengthAdjust="spacingAndGlyphs" stroke="#000" stroke-width="0.1" xml:space="preserve">3900</text>
<line x1="395.95" y1="432.40" x2="395.95" y2="435.90" stroke="#333" stroke-width="0.8"/>
<text x="395.95" y="447.50" font-family="'Liberation Sans', sans-serif" font-size="10" fill="#000" text-anchor="middle" textLength="25.45" lengthAdjust="spacingAndGlyphs" stroke="#000" stroke-width="0.1" xml:space="preserve">4000</text>
<line x1="454.80" y1="432.40" x2="454.80" y2="435.90" stroke="#333" stroke-width="0.8"/>
<text x="454.80" y="447.50" font-family="'Liberation Sans', sans-serif" font-size="10" fill="#000" text-anchor="middle" textLength="25.45" lengthAdjust="spacingAndGlyphs" stroke="#000" stroke-width="0.1" xml:space="preserve">4100</text>
<line x1="513.65" y1="432.40" x2="513.65" y2="435.90" stroke="#333" stroke-width="0.8"/>
<text x="513.65" y="447.50" font-family="'Liberation Sans', sans-serif" font-size="10" fill="#000" text-anchor="middle" textLength="25.45" lengthAdjust="spacingAndGlyphs" stroke="#000" stroke-width="0.1" xml:space="preserve">4200</text>
<line x1="572.50" y1="432.40" x2="572.50" y2="435.90" stroke="#333" stroke-width="0.8"/>
<text x="572.50" y="447.50" font-family="'Liberation Sans', sans-serif" font-size="10" fill="#000" text-anchor="middle" textLength="25.45" lengthAdjust="spacingAndGlyphs" stroke="#000" stroke-width="0.1" xml:space="preserve">4300</text>
<line x1="631.35" y1="432.40" x2="631.35" y2="435.90" stroke="#333" stroke-width="0.8"/>
<text x="631.35" y="447.50" font-family="'Liberation Sans', sans-serif" font-size="10" fill="#000" text-anchor="middle" textLength="25.45" lengthAdjust="spacingAndGlyphs" stroke="#000" stroke-width="0.1" xml:space="preserve">4400</text>
<line x1="690.20" y1="432.40" x2="690.20" y2="435.90" stroke="#333" stroke-width="0.8"/>
<text x="690.20" y="447.50" font-family="'Liberation Sans', sans-serif" font-size="10" fill="#000" text-anchor="middle" textLength="25.45" lengthAdjust="spacingAndGlyphs" stroke="#000" stroke-width="0.1" xml:space="preserve">4500</text>
<line x1="749.05" y1="432.40" x2="749.05" y2="435.90" stroke="#333" stroke-width="0.8"/>
<text x="749.05" y="447.50" font-family="'Liberation Sans', sans-serif" font-size="10" fill="#000" text-anchor="middle" textLength="25.45" lengthAdjust="spacingAndGlyphs" stroke="#000" stroke-width="0.1" xml:space="preserve">4600</text>
<line x1="807.90" y1="432.40" x2="807.90" y2="435.90" stroke="#333" stroke-width="0.8"/>
<text x="807.90" y="447.50" font-family="'Liberation Sans', sans-serif" font-size="10" fill="#000" text-anchor="middle" textLength="25.45" lengthAdjust="spacingAndGlyphs" stroke="#000" stroke-width="0.1" xml:space="preserve">4700</text>
<line x1="866.75" y1="432.40" x2="866.75" y2="435.90" stroke="#333" stroke-width="0.8"/>
<text x="866.75" y="447.50" font-family="'Liberation Sans', sans-serif" font-size="10" fill="#000" text-anchor="middle" textLength="25.45" lengthAdjust="spacingAndGlyphs" stroke="#000" stroke-width="0.1" xml:space="preserve">4800</text>
<line x1="925.60" y1="432.40" x2="925.60" y2="435.90" stroke="#333" stroke-width="0.8"/>
<text x="925.60" y="447.50" font-family="'Liberation Sans', sans-serif" font-size="10" fill="#000" text-anchor="middle" textLength="25.45" lengthAdjust="spacingAndGlyphs" stroke="#000" stroke-width="0.1" xml:space="preserve">4900</text>
<line x1="984.45" y1="432.40" x2="984.45" y2="435.90" stroke="#333" stroke-width="0.8"/>
<text x="984.45" y="447.50" font-family="'Liberation Sans', sans-serif" font-size="10" fill="#000" text-anchor="middle" textLength="25.45" lengthAdjust="spacingAndGlyphs" stroke="#000" stroke-width="0.1" xml:space="preserve">5000</text>
<line x1="1043.30" y1="432.40" x2="1043.30" y2="435.90" stroke="#333" stroke-width="0.8"/>
<text x="1043.30" y="447.50" font-family="'Liberation Sans', sans-serif" font-size="10" fill="#000" text-anchor="middle" textLength="25.45" lengthAdjust="spacingAndGlyphs" stroke="#000" stroke-width="0.1" xml:space="preserve">5100</text>
<line x1="1102.15" y1="432.40" x2="1102.15" y2="435.90" stroke="#333" stroke-width="0.8"/>
<text x="1102.15" y="447.50" font-family="'Liberation Sans', sans-serif" font-size="10" fill="#000" text-anchor="middle" textLength="25.45" lengthAdjust="spacingAndGlyphs" stroke="#000" stroke-width="0.1" xml:space="preserve">5200</text>
<line x1="1161.00" y1="432.40" x2="1161.00" y2="435.90" stroke="#333" stroke-width="0.8"/>
<text x="1161.00" y="447.50" font-family="'Liberation Sans', sans-serif" font-size="10" fill="#000" text-anchor="middle" textLength="25.45" lengthAdjust="spacingAndGlyphs" stroke="#000" stroke-width="0.1" xml:space="preserve">5300</text>
<line x1="1219.85" y1="432.40" x2="1219.85" y2="435.90" stroke="#333" stroke-width="0.8"/>
<text x="1219.85" y="447.50" font-family="'Liberation Sans', sans-serif" font-size="10" fill="#000" text-anchor="middle" textLength="25.45" lengthAdjust="spacingAndGlyphs" stroke="#000" stroke-width="0.1" xml:space="preserve">5400</text>
<line x1="1278.70" y1="432.40" x2="1278.70" y2="435.90" stroke="#333" stroke-width="0.8"/>
<text x="1278.70" y="447.50" font-family="'Liberation Sans', sans-serif" font-size="10" fill="#000" text-anchor="middle" textLength="25.45" lengthAdjust="spacingAndGlyphs" stroke="#000" stroke-width="0.1" xml:space="preserve">5500</text>
<text x="100.30" y="346.30" font-family="'Liberation Sans', sans-serif" font-size="10" fill="#000" text-anchor="start" textLength="6.15" lengthAdjust="spacingAndGlyphs" stroke="#000" stroke-width="0.1" xml:space="preserve">e</text>
<text x="106.60" y="342.50" font-family="'Liberation Sans', sans-serif" font-size="7" fill="#000" text-anchor="start" textLength="14.77" lengthAdjust="spacingAndGlyphs" stroke="#000" stroke-width="0.06" xml:space="preserve">−17</text>
<text x="121.30" y="346.30" font-family="'Liberation Sans', sans-serif" font-size="10" fill="#000" text-anchor="start" textLength="12.28" lengthAdjust="spacingAndGlyphs" stroke="#000" stroke-width="0.1" xml:space="preserve">x2</text>
<text x="133.30" y="346.30" font-family="'Liberation Sans', sans-serif" font-size="10" fill="#000" text-anchor="start" font-style="italic" textLength="6.84" lengthAdjust="spacingAndGlyphs" stroke="#000" stroke-width="0.1" xml:space="preserve">Å</text>
<rect x="479.90" y="450.20" width="17.00" height="6.20" fill="#ff0000" stroke="none" stroke-width="1"/>
<text x="503.40" y="456.40" font-family="'Liberation Sans', sans-serif" font-size="7.2" fill="#000" text-anchor="start" textLength="12.36" lengthAdjust="spacingAndGlyphs" stroke="#000" stroke-width="0.06" xml:space="preserve">Lyα</text>
<rect x="534.00" y="450.20" width="17.00" height="6.20" fill="#008000" stroke="none" stroke-width="1"/>
<text x="557.50" y="456.40" font-family="'Liberation Sans', sans-serif" font-size="7.2" fill="#000" text-anchor="start" textLength="9.92" lengthAdjust="spacingAndGlyphs" stroke="#000" stroke-width="0.06" xml:space="preserve">OII</text>
<rect x="586.30" y="450.20" width="17.00" height="6.20" fill="#8a2be2" stroke="none" stroke-width="1"/>
<text x="609.80" y="456.40" font-family="'Liberation Sans', sans-serif" font-size="7.2" fill="#000" text-anchor="start" textLength="12.08" lengthAdjust="spacingAndGlyphs" stroke="#000" stroke-width="0.06" xml:space="preserve">CIV</text>
<rect x="641.70" y="450.20" width="17.00" height="6.20" fill="#800080" stroke="none" stroke-width="1"/>
<text x="665.20" y="456.40" font-family="'Liberation Sans', sans-serif" font-size="7.2" fill="#000" text-anchor="start" textLength="11.40" lengthAdjust="spacingAndGlyphs" stroke="#000" stroke-width="0.06" xml:space="preserve">CIII</text>
<rect x="693.30" y="450.20" width="17.00" height="6.20" fill="#ff00ff" stroke="none" stroke-width="1"/>
<text x="716.80" y="456.40" font-family="'Liberation Sans', sans-serif" font-size="7.2" fill="#000" text-anchor="start" textLength="15.04" lengthAdjust="spacingAndGlyphs" stroke="#000" stroke-width="0.06" xml:space="preserve">MgII</text>
<rect x="749.30" y="450.20" width="17.00" height="6.20" fill="#ffa500" stroke="none" stroke-width="1"/>
<text x="772.80" y="456.40" font-family="'Liberation Sans', sans-serif" font-size="7.2" fill="#000" text-anchor="start" textLength="14.10" lengthAdjust="spacingAndGlyphs" stroke="#000" stroke-width="0.06" xml:space="preserve">HeII</text>
<rect x="803.30" y="450.20" width="17.00" height="6.20" fill="#87ceeb" stroke="none" stroke-width="1"/>
<text x="826.80" y="456.40" font-family="'Liberation Sans', sans-serif" font-size="7.2" fill="#000" text-anchor="start" textLength="24.04" lengthAdjust="spacingAndGlyphs" stroke="#000" stroke-width="0.06" xml:space="preserve">(K)CaII</text>
<rect x="869.50" y="450.20" width="17.00" height="6.20" fill="#87ceeb" stroke="none" stroke-width="1"/>
<text x="893.00" y="456.40" font-family="'Liberation Sans', sans-serif" font-size="7.2" fill="#000" text-anchor="start" textLength="24.73" lengthAdjust="spacingAndGlyphs" stroke="#000" stroke-width="0.06" xml:space="preserve">(H)CaII</text>
<text transform="translate(112.80,324.00) rotate(90)" font-family="'Liberation Sans', sans-serif" font-size="8.8" fill="#ff00ff" textLength="11.33" lengthAdjust="spacingAndGlyphs">CII</text>
<text transform="translate(112.80,343.00) rotate(90)" font-family="'Liberation Sans', sans-serif" font-size="8.8" fill="#ff00ff">{</text>
<text transform="translate(167.30,279.50) rotate(90)" font-family="'Liberation Sans', sans-serif" font-size="8.8" fill="#ffa500" textLength="16.64" lengthAdjust="spacingAndGlyphs">SiIV</text>
<text transform="translate(167.30,301.00) rotate(90)" font-family="'Liberation Sans', sans-serif" font-size="8.8" fill="#ffa500">{</text>
<text transform="translate(164.80,320.00) rotate(90)" font-family="'Liberation Sans', sans-serif" font-size="8.8" fill="#ff0000" textLength="15.38" lengthAdjust="spacingAndGlyphs">OVI</text>
<text transform="translate(164.80,343.00) rotate(90)" font-family="'Liberation Sans', sans-serif" font-size="8.8" fill="#ff0000">{</text>
<text transform="translate(184.80,321.00) rotate(90)" font-family="'Liberation Sans', sans-serif" font-size="8.8" fill="#800080" textLength="17.22" lengthAdjust="spacingAndGlyphs">HeII</text>
<text transform="translate(184.80,343.00) rotate(90)" font-family="'Liberation Sans', sans-serif" font-size="8.8" fill="#800080">{</text>
<text transform="translate(292.30,321.00) rotate(90)" font-family="'Liberation Sans', sans-serif" font-size="8.8" fill="#8a2be2" textLength="16.64" lengthAdjust="spacingAndGlyphs">SiIV</text>
<text transform="translate(292.30,343.00) rotate(90)" font-family="'Liberation Sans', sans-serif" font-size="8.8" fill="#8a2be2">{</text>
<text transform="translate(385.60,323.00) rotate(90)" font-family="'Liberation Sans', sans-serif" font-size="8.8" fill="#87ceeb" textLength="12.11" lengthAdjust="spacingAndGlyphs">OII</text>
<text transform="translate(385.60,343.00) rotate(90)" font-family="'Liberation Sans', sans-serif" font-size="8.8" fill="#87ceeb">{</text>
<text transform="translate(397.80,320.00) rotate(90)" font-family="'Liberation Sans', sans-serif" font-size="8.8" fill="#ffa500" textLength="14.75" lengthAdjust="spacingAndGlyphs">CIV</text>
<text transform="translate(397.80,343.00) rotate(90)" font-family="'Liberation Sans', sans-serif" font-size="8.8" fill="#ffa500">{</text>
<text transform="translate(406.30,323.00) rotate(90)" font-family="'Liberation Sans', sans-serif" font-size="8.8" fill="#87ceeb" textLength="12.11" lengthAdjust="spacingAndGlyphs">OII</text>
<text transform="translate(406.30,343.00) rotate(90)" font-family="'Liberation Sans', sans-serif" font-size="8.8" fill="#87ceeb">{</text>
<text transform="translate(587.80,320.00) rotate(90)" font-family="'Liberation Sans', sans-serif" font-size="8.8" fill="#ff0000" textLength="12.60" lengthAdjust="spacingAndGlyphs">NV</text>
<text transform="translate(587.80,343.00) rotate(90)" font-family="'Liberation Sans', sans-serif" font-size="8.8" fill="#ff0000">{</text>
<text transform="translate(634.30,324.50) rotate(90)" font-family="'Liberation Sans', sans-serif" font-size="8.8" fill="#ff0000" textLength="13.22" lengthAdjust="spacingAndGlyphs">SiII</text>
<text transform="translate(634.30,343.00) rotate(90)" font-family="'Liberation Sans', sans-serif" font-size="8.8" fill="#ff0000">{</text>
<text transform="translate(682.80,321.00) rotate(90)" font-family="'Liberation Sans', sans-serif" font-size="8.8" fill="#8a2be2" textLength="17.22" lengthAdjust="spacingAndGlyphs">HeII</text>
<text transform="translate(682.80,343.00) rotate(90)" font-family="'Liberation Sans', sans-serif" font-size="8.8" fill="#8a2be2">{</text>
<text transform="translate(770.80,328.00) rotate(90)" font-family="'Liberation Sans', sans-serif" font-size="8.8" fill="#87ceeb" textLength="11.82" lengthAdjust="spacingAndGlyphs">Hγ</text>
<text transform="translate(770.80,343.00) rotate(90)" font-family="'Liberation Sans', sans-serif" font-size="8.8" fill="#87ceeb">{</text>
<text transform="translate(794.30,328.00) rotate(90)" font-family="'Liberation Sans', sans-serif" font-size="8.8" fill="#87ceeb" textLength="11.82" lengthAdjust="spacingAndGlyphs">Hγ</text>
<text transform="translate(794.30,343.00) rotate(90)" font-family="'Liberation Sans', sans-serif" font-size="8.8" fill="#87ceeb">{</text>
<text transform="translate(910.20,321.40) rotate(90)" font-family="'Liberation Sans', sans-serif" font-size="8.8" fill="#ff0000" textLength="16.64" lengthAdjust="spacingAndGlyphs">SiIV</text>
<text transform="translate(910.20,343.00) rotate(90)" font-family="'Liberation Sans', sans-serif" font-size="8.8" fill="#ff0000">{</text>
<text transform="translate(945.40,282.00) rotate(90)" font-family="'Liberation Sans', sans-serif" font-size="8.8" fill="#ffa500" textLength="13.93" lengthAdjust="spacingAndGlyphs">CIII</text>
<text transform="translate(945.40,303.50) rotate(90)" font-family="'Liberation Sans', sans-serif" font-size="8.8" fill="#ffa500">{</text>
<text transform="translate(946.20,328.60) rotate(90)" font-family="'Liberation Sans', sans-serif" font-size="8.8" fill="#008000" textLength="11.82" lengthAdjust="spacingAndGlyphs">Hγ</text>
<text transform="translate(946.20,343.00) rotate(90)" font-family="'Liberation Sans', sans-serif" font-size="8.8" fill="#008000">{</text>
<text transform="translate(1080.50,324.00) rotate(90)" font-family="'Liberation Sans', sans-serif" font-size="8.8" fill="#800080" textLength="11.33" lengthAdjust="spacingAndGlyphs">CII</text>
<text transform="translate(1080.50,343.00) rotate(90)" font-family="'Liberation Sans', sans-serif" font-size="8.8" fill="#800080">{</text>
<text transform="translate(1098.20,328.00) rotate(90)" font-family="'Liberation Sans', sans-serif" font-size="8.8" fill="#87ceeb" textLength="12.23" lengthAdjust="spacingAndGlyphs">Hβ</text>
<text transform="translate(1098.20,343.00) rotate(90)" font-family="'Liberation Sans', sans-serif" font-size="8.8" fill="#87ceeb">{</text>
<text transform="translate(1115.80,324.00) rotate(90)" font-family="'Liberation Sans', sans-serif" font-size="8.8" fill="#8a2be2" textLength="13.93" lengthAdjust="spacingAndGlyphs">CIII</text>
<text transform="translate(1115.80,343.00) rotate(90)" font-family="'Liberation Sans', sans-serif" font-size="8.8" fill="#8a2be2">{</text>
<text transform="translate(1126.80,328.00) rotate(90)" font-family="'Liberation Sans', sans-serif" font-size="8.8" fill="#87ceeb" textLength="12.23" lengthAdjust="spacingAndGlyphs">Hβ</text>
<text transform="translate(1126.80,343.00) rotate(90)" font-family="'Liberation Sans', sans-serif" font-size="8.8" fill="#87ceeb">{</text>
<text transform="translate(1160.50,323.70) rotate(90)" font-family="'Liberation Sans', sans-serif" font-size="8.8" fill="#87ceeb" textLength="14.71" lengthAdjust="spacingAndGlyphs">OIII</text>
<text transform="translate(1160.50,343.00) rotate(90)" font-family="'Liberation Sans', sans-serif" font-size="8.8" fill="#87ceeb">{</text>
<text transform="translate(1191.10,281.40) rotate(90)" font-family="'Liberation Sans', sans-serif" font-size="8.8" fill="#87ceeb" textLength="14.71" lengthAdjust="spacingAndGlyphs">OIII</text>
<text transform="translate(1191.10,302.90) rotate(90)" font-family="'Liberation Sans', sans-serif" font-size="8.8" fill="#87ceeb">{</text>
<text transform="translate(1188.20,323.70) rotate(90)" font-family="'Liberation Sans', sans-serif" font-size="8.8" fill="#87ceeb" textLength="14.71" lengthAdjust="spacingAndGlyphs">OIII</text>
<text transform="translate(1188.20,343.00) rotate(90)" font-family="'Liberation Sans', sans-serif" font-size="8.8" fill="#87ceeb">{</text>
<text transform="translate(1218.80,281.40) rotate(90)" font-family="'Liberation Sans', sans-serif" font-size="8.8" fill="#87ceeb" textLength="14.71" lengthAdjust="spacingAndGlyphs">OIII</text>
<text transform="translate(1218.80,302.90) rotate(90)" font-family="'Liberation Sans', sans-serif" font-size="8.8" fill="#87ceeb">{</text>
<text transform="translate(1222.50,320.90) rotate(90)" font-family="'Liberation Sans', sans-serif" font-size="8.8" fill="#ff0000" textLength="14.75" lengthAdjust="spacingAndGlyphs">CIV</text>
<text transform="translate(1222.50,343.00) rotate(90)" font-family="'Liberation Sans', sans-serif" font-size="8.8" fill="#ff0000">{</text>
<text x="70.30" y="498.90" transform="matrix(1,0,0,1.07,0,-34.923)" font-family="'Liberation Mono', monospace" font-size="13.03" fill="#000" stroke="#000" stroke-width="0.16" xml:space="preserve">HSC-DEX : Possible Matches = 1 (within +/- 3")  P(LAE)/P(OII):</text>
<text x="561.50" y="498.90" font-family="'Liberation Sans', sans-serif" font-size="13.1" fill="#000" text-anchor="start" textLength="37.48" lengthAdjust="spacingAndGlyphs" stroke="#000" stroke-width="0.1" xml:space="preserve">0.217</text>
<text x="600.50" y="493.60" font-family="'Liberation Sans', sans-serif" font-size="8.5" fill="#000" text-anchor="start" textLength="24.33" lengthAdjust="spacingAndGlyphs" stroke="#000" stroke-width="0.06" xml:space="preserve">0.279</text>
<text x="600.50" y="502.50" font-family="'Liberation Sans', sans-serif" font-size="8.5" fill="#000" text-anchor="start" textLength="24.33" lengthAdjust="spacingAndGlyphs" stroke="#000" stroke-width="0.06" xml:space="preserve">0.168</text>
<text x="637.00" y="498.90" transform="matrix(1,0,0,1.07,0,-34.923)" font-family="'Liberation Mono', monospace" font-size="13.03" fill="#000" stroke="#000" stroke-width="0.16" xml:space="preserve">(r)</text>
<clipPath id="c1"><rect x="70" y="532.8" width="148.3" height="147.3"/></clipPath>
<g clip-path="url(#c1)">
<rect x="70.00" y="532.80" width="148.30" height="147.30" fill="#888" stroke="none" stroke-width="1" filter="url(#bg)"/>
<ellipse cx="135.06" cy="598.02" rx="27.83" ry="26.19" fill="url(#blob1)"/>
</g>
<rect x="94.79" y="557.59" width="98.22" height="98.22" fill="none" stroke="#ff0000" stroke-width="1.5"/>
<circle cx="145.05" cy="551.86" r="12.11" fill="none" stroke="#6a6a6a" stroke-width="1.3"/>
<circle cx="108.70" cy="573.47" r="12.11" fill="none" stroke="#6a6a6a" stroke-width="1.3"/>
<circle cx="132.44" cy="573.47" r="12.11" fill="none" stroke="#6a6a6a" stroke-width="1.3"/>
<circle cx="157.32" cy="573.47" r="12.11" fill="none" stroke="#6a6a6a" stroke-width="1.3"/>
<circle cx="181.39" cy="573.47" r="12.11" fill="none" stroke="#6a6a6a" stroke-width="1.3"/>
<circle cx="96.43" cy="594.26" r="12.11" fill="none" stroke="#6a6a6a" stroke-width="1.3"/>
<circle cx="169.76" cy="594.26" r="12.11" fill="none" stroke="#6a6a6a" stroke-width="1.3"/>
<circle cx="193.66" cy="594.26" r="12.11" fill="none" stroke="#6a6a6a" stroke-width="1.3"/>
<circle cx="109.20" cy="615.05" r="12.11" fill="none" stroke="#6a6a6a" stroke-width="1.3"/>
<circle cx="182.04" cy="615.05" r="12.11" fill="none" stroke="#6a6a6a" stroke-width="1.3"/>
<circle cx="96.43" cy="635.84" r="12.11" fill="none" stroke="#6a6a6a" stroke-width="1.3"/>
<circle cx="121.96" cy="635.84" r="12.11" fill="none" stroke="#6a6a6a" stroke-width="1.3"/>
<circle cx="146.19" cy="635.84" r="12.11" fill="none" stroke="#6a6a6a" stroke-width="1.3"/>
<circle cx="169.76" cy="635.84" r="12.11" fill="none" stroke="#6a6a6a" stroke-width="1.3"/>
<circle cx="133.42" cy="656.63" r="12.11" fill="none" stroke="#6a6a6a" stroke-width="1.3"/>
<circle cx="158.31" cy="656.63" r="12.11" fill="none" stroke="#6a6a6a" stroke-width="1.3"/>
<circle cx="120.82" cy="594.26" r="12.11" fill="none" stroke="#ff0000" stroke-width="1.6"/>
<circle cx="145.70" cy="594.26" r="12.11" fill="none" stroke="#00ff00" stroke-width="1.6"/>
<circle cx="132.77" cy="615.05" r="12.11" fill="none" stroke="#0000ff" stroke-width="1.6"/>
<circle cx="157.81" cy="615.05" r="12.11" fill="none" stroke="#ffa500" stroke-width="1.6"/>
<text x="143.90" y="546.86" font-family="'Liberation Sans', sans-serif" font-size="10" fill="#ff0000" text-anchor="middle" textLength="7.48" lengthAdjust="spacingAndGlyphs" stroke="#ff0000" stroke-width="0.1" xml:space="preserve">N</text>
<text x="80.06" y="610.30" font-family="'Liberation Sans', sans-serif" font-size="10" fill="#ff0000" text-anchor="middle" textLength="6.32" lengthAdjust="spacingAndGlyphs" stroke="#ff0000" stroke-width="0.1" xml:space="preserve">E</text>
<rect x="70.00" y="532.80" width="148.30" height="147.30" fill="none" stroke="#111" stroke-width="1.2"/>
<line x1="78.42" y1="680.10" x2="78.42" y2="683.60" stroke="#111" stroke-width="0.9"/>
<text x="78.42" y="696.30" font-family="'Liberation Sans', sans-serif" font-size="10" fill="#000" text-anchor="middle" textLength="14.74" lengthAdjust="spacingAndGlyphs" stroke="#000" stroke-width="0.1" xml:space="preserve">−4</text>
<line x1="66.50" y1="672.18" x2="70.00" y2="672.18" stroke="#111" stroke-width="0.9"/>
<text x="63.50" y="675.78" font-family="'Liberation Sans', sans-serif" font-size="10" fill="#000" text-anchor="end" textLength="14.74" lengthAdjust="spacingAndGlyphs" stroke="#000" stroke-width="0.1" xml:space="preserve">−4</text>
<line x1="111.16" y1="680.10" x2="111.16" y2="683.60" stroke="#111" stroke-width="0.9"/>
<text x="111.16" y="696.30" font-family="'Liberation Sans', sans-serif" font-size="10" fill="#000" text-anchor="middle" textLength="14.74" lengthAdjust="spacingAndGlyphs" stroke="#000" stroke-width="0.1" xml:space="preserve">−2</text>
<line x1="66.50" y1="639.44" x2="70.00" y2="639.44" stroke="#111" stroke-width="0.9"/>
<text x="63.50" y="643.04" font-family="'Liberation Sans', sans-serif" font-size="10" fill="#000" text-anchor="end" textLength="14.74" lengthAdjust="spacingAndGlyphs" stroke="#000" stroke-width="0.1" xml:space="preserve">−2</text>
<line x1="143.90" y1="680.10" x2="143.90" y2="683.60" stroke="#111" stroke-width="0.9"/>
<text x="143.90" y="696.30" font-family="'Liberation Sans', sans-serif" font-size="10" fill="#000" text-anchor="middle" textLength="6.36" lengthAdjust="spacingAndGlyphs" stroke="#000" stroke-width="0.1" xml:space="preserve">0</text>
<line x1="66.50" y1="606.70" x2="70.00" y2="606.70" stroke="#111" stroke-width="0.9"/>
<text x="63.50" y="610.30" font-family="'Liberation Sans', sans-serif" font-size="10" fill="#000" text-anchor="end" textLength="6.36" lengthAdjust="spacingAndGlyphs" stroke="#000" stroke-width="0.1" xml:space="preserve">0</text>
<line x1="176.64" y1="680.10" x2="176.64" y2="683.60" stroke="#111" stroke-width="0.9"/>
<text x="176.64" y="696.30" font-family="'Liberation Sans', sans-serif" font-size="10" fill="#000" text-anchor="middle" textLength="6.36" lengthAdjust="spacingAndGlyphs" stroke="#000" stroke-width="0.1" xml:space="preserve">2</text>
<line x1="66.50" y1="573.96" x2="70.00" y2="573.96" stroke="#111" stroke-width="0.9"/>
<text x="63.50" y="577.56" font-family="'Liberation Sans', sans-serif" font-size="10" fill="#000" text-anchor="end" textLength="6.36" lengthAdjust="spacingAndGlyphs" stroke="#000" stroke-width="0.1" xml:space="preserve">2</text>
<line x1="209.38" y1="680.10" x2="209.38" y2="683.60" stroke="#111" stroke-width="0.9"/>
<text x="209.38" y="696.30" font-family="'Liberation Sans', sans-serif" font-size="10" fill="#000" text-anchor="middle" textLength="6.36" lengthAdjust="spacingAndGlyphs" stroke="#000" stroke-width="0.1" xml:space="preserve">4</text>
<line x1="66.50" y1="541.22" x2="70.00" y2="541.22" stroke="#111" stroke-width="0.9"/>
<text x="63.50" y="544.82" font-family="'Liberation Sans', sans-serif" font-size="10" fill="#000" text-anchor="end" textLength="6.36" lengthAdjust="spacingAndGlyphs" stroke="#000" stroke-width="0.1" xml:space="preserve">4</text>
<text x="143.90" y="525.80" font-family="'Liberation Sans', sans-serif" font-size="13.2" fill="#000" text-anchor="middle" textLength="94.72" lengthAdjust="spacingAndGlyphs" stroke="#000" stroke-width="0.1" xml:space="preserve">Fiber Positions</text>
<text x="143.90" y="706.20" font-family="'Liberation Sans', sans-serif" font-size="10" fill="#000" text-anchor="middle" textLength="37.59" lengthAdjust="spacingAndGlyphs" stroke="#000" stroke-width="0.1" xml:space="preserve">arcsecs</text>
<clipPath id="c2"><rect x="255" y="532.8" width="148.3" height="147.3"/></clipPath>
<g clip-path="url(#c2)">
<rect x="255.00" y="532.80" width="148.30" height="147.30" fill="#32668d" stroke="none" stroke-width="1"/>
<g shape-rendering="crispEdges">
<rect x="255.9" y="533.0" width="4.7" height="4.7" fill="#440154"/>
<rect x="260.0" y="533.0" width="4.7" height="4.7" fill="#440154"/>
<rect x="264.1" y="533.0" width="4.7" height="4.7" fill="#461365"/>
<rect x="268.2" y="533.0" width="4.7" height="4.7" fill="#482575"/>
<rect x="272.3" y="533.0" width="4.7" height="4.7" fill="#44357f"/>
<rect x="276.4" y="533.0" width="4.7" height="4.7" fill="#3f4888"/>
<rect x="280.5" y="533.0" width="4.7" height="4.7" fill="#38598c"/>
<rect x="284.6" y="533.0" width="4.7" height="4.7" fill="#31698d"/>
<rect x="288.7" y="533.0" width="4.7" height="4.7" fill="#2d728e"/>
<rect x="292.8" y="533.0" width="4.7" height="4.7" fill="#297b8e"/>
<rect x="296.9" y="533.0" width="4.7" height="4.7" fill="#26848d"/>
<rect x="301.0" y="533.0" width="4.7" height="4.7" fill="#24888d"/>
<rect x="305.1" y="533.0" width="4.7" height="4.7" fill="#238d8c"/>
<rect x="309.2" y="533.0" width="4.7" height="4.7" fill="#21918c"/>
<rect x="313.3" y="533.0" width="4.7" height="4.7" fill="#27808d"/>
<rect x="317.4" y="533.0" width="4.7" height="4.7" fill="#2e6e8e"/>
<rect x="321.5" y="533.0" width="4.7" height="4.7" fill="#365c8c"/>
<rect x="325.6" y="533.0" width="4.7" height="4.7" fill="#3a548b"/>
<rect x="329.8" y="533.0" width="4.7" height="4.7" fill="#3e4c89"/>
<rect x="333.9" y="533.0" width="4.7" height="4.7" fill="#414386"/>
<rect x="338.0" y="533.0" width="4.7" height="4.7" fill="#404788"/>
<rect x="342.1" y="533.0" width="4.7" height="4.7" fill="#3e4b89"/>
<rect x="346.2" y="533.0" width="4.7" height="4.7" fill="#3c4f8a"/>
<rect x="350.3" y="533.0" width="4.7" height="4.7" fill="#3f4788"/>
<rect x="354.4" y="533.0" width="4.7" height="4.7" fill="#423f84"/>
<rect x="358.5" y="533.0" width="4.7" height="4.7" fill="#44357f"/>
<rect x="362.6" y="533.0" width="4.7" height="4.7" fill="#482575"/>
<rect x="366.7" y="533.0" width="4.7" height="4.7" fill="#461365"/>
<rect x="370.8" y="533.0" width="4.7" height="4.7" fill="#440154"/>
<rect x="374.9" y="533.0" width="4.7" height="4.7" fill="#440154"/>
<rect x="379.0" y="533.0" width="4.7" height="4.7" fill="#440154"/>
<rect x="383.1" y="533.0" width="4.7" height="4.7" fill="#440154"/>
<rect x="387.2" y="533.0" width="4.7" height="4.7" fill="#440356"/>
<rect x="391.3" y="533.0" width="4.7" height="4.7" fill="#440558"/>
<rect x="395.4" y="533.0" width="4.7" height="4.7" fill="#45075a"/>
<rect x="399.5" y="533.0" width="4.7" height="4.7" fill="#45075a"/>
<rect x="255.9" y="537.1" width="4.7" height="4.7" fill="#440154"/>
<rect x="260.0" y="537.1" width="4.7" height="4.7" fill="#440154"/>
<rect x="264.1" y="537.1" width="4.7" height="4.7" fill="#461365"/>
<rect x="268.2" y="537.1" width="4.7" height="4.7" fill="#482575"/>
<rect x="272.3" y="537.1" width="4.7" height="4.7" fill="#44357f"/>
<rect x="276.4" y="537.1" width="4.7" height="4.7" fill="#3f4888"/>
<rect x="280.5" y="537.1" width="4.7" height="4.7" fill="#38598c"/>
<rect x="284.6" y="537.1" width="4.7" height="4.7" fill="#31698d"/>
<rect x="288.7" y="537.1" width="4.7" height="4.7" fill="#2d728e"/>
<rect x="292.8" y="537.1" width="4.7" height="4.7" fill="#297b8e"/>
<rect x="296.9" y="537.1" width="4.7" height="4.7" fill="#26848d"/>
<rect x="301.0" y="537.1" width="4.7" height="4.7" fill="#24888d"/>
<rect x="305.1" y="537.1" width="4.7" height="4.7" fill="#238d8c"/>
<rect x="309.2" y="537.1" width="4.7" height="4.7" fill="#21918c"/>
<rect x="313.3" y="537.1" width="4.7" height="4.7" fill="#27808d"/>
<rect x="317.4" y="537.1" width="4.7" height="4.7" fill="#2e6e8e"/>
<rect x="321.5" y="537.1" width="4.7" height="4.7" fill="#365c8c"/>
<rect x="325.6" y="537.1" width="4.7" height="4.7" fill="#3a548b"/>
<rect x="329.8" y="537.1" width="4.7" height="4.7" fill="#3e4c89"/>
<rect x="333.9" y="537.1" width="4.7" height="4.7" fill="#414386"/>
<rect x="338.0" y="537.1" width="4.7" height="4.7" fill="#404788"/>
<rect x="342.1" y="537.1" width="4.7" height="4.7" fill="#3e4b89"/>
<rect x="346.2" y="537.1" width="4.7" height="4.7" fill="#3c4f8a"/>
<rect x="350.3" y="537.1" width="4.7" height="4.7" fill="#3f4788"/>
<rect x="354.4" y="537.1" width="4.7" height="4.7" fill="#423f84"/>
<rect x="358.5" y="537.1" width="4.7" height="4.7" fill="#44357f"/>
<rect x="362.6" y="537.1" width="4.7" height="4.7" fill="#482575"/>
<rect x="366.7" y="537.1" width="4.7" height="4.7" fill="#461365"/>
<rect x="370.8" y="537.1" width="4.7" height="4.7" fill="#440154"/>
<rect x="374.9" y="537.1" width="4.7" height="4.7" fill="#440154"/>
<rect x="379.0" y="537.1" width="4.7" height="4.7" fill="#440154"/>
<rect x="383.1" y="537.1" width="4.7" height="4.7" fill="#440154"/>
<rect x="387.2" y="537.1" width="4.7" height="4.7" fill="#440356"/>
<rect x="391.3" y="537.1" width="4.7" height="4.7" fill="#440558"/>
<rect x="395.4" y="537.1" width="4.7" height="4.7" fill="#45075a"/>
<rect x="399.5" y="537.1" width="4.7" height="4.7" fill="#45075a"/>
<rect x="255.9" y="541.2" width="4.7" height="4.7" fill="#440154"/>
<rect x="260.0" y="541.2" width="4.7" height="4.7" fill="#440154"/>
<rect x="264.1" y="541.2" width="4.7" height="4.7" fill="#460f61"/>
<rect x="268.2" y="541.2" width="4.7" height="4.7" fill="#471c6e"/>
<rect x="272.3" y="541.2" width="4.7" height="4.7" fill="#472a78"/>
<rect x="276.4" y="541.2" width="4.7" height="4.7" fill="#424085"/>
<rect x="280.5" y="541.2" width="4.7" height="4.7" fill="#3a538a"/>
<rect x="284.6" y="541.2" width="4.7" height="4.7" fill="#32658d"/>
<rect x="288.7" y="541.2" width="4.7" height="4.7" fill="#2e6f8e"/>
<rect x="292.8" y="541.2" width="4.7" height="4.7" fill="#2a798e"/>
<rect x="296.9" y="541.2" width="4.7" height="4.7" fill="#26848d"/>
<rect x="301.0" y="541.2" width="4.7" height="4.7" fill="#238b8c"/>
<rect x="305.1" y="541.2" width="4.7" height="4.7" fill="#21938b"/>
<rect x="309.2" y="541.2" width="4.7" height="4.7" fill="#219a89"/>
<rect x="313.3" y="541.2" width="4.7" height="4.7" fill="#24888d"/>
<rect x="317.4" y="541.2" width="4.7" height="4.7" fill="#2c748e"/>
<rect x="321.5" y="541.2" width="4.7" height="4.7" fill="#34618d"/>
<rect x="325.6" y="541.2" width="4.7" height="4.7" fill="#38588c"/>
<rect x="329.8" y="541.2" width="4.7" height="4.7" fill="#3c508a"/>
<rect x="333.9" y="541.2" width="4.7" height="4.7" fill="#404788"/>
<rect x="338.0" y="541.2" width="4.7" height="4.7" fill="#3e4b89"/>
<rect x="342.1" y="541.2" width="4.7" height="4.7" fill="#3c508a"/>
<rect x="346.2" y="541.2" width="4.7" height="4.7" fill="#3a548b"/>
<rect x="350.3" y="541.2" width="4.7" height="4.7" fill="#3f4988"/>
<rect x="354.4" y="541.2" width="4.7" height="4.7" fill="#423e83"/>
<rect x="358.5" y="541.2" width="4.7" height="4.7" fill="#45317c"/>
<rect x="362.6" y="541.2" width="4.7" height="4.7" fill="#482273"/>
<rect x="366.7" y="541.2" width="4.7" height="4.7" fill="#461163"/>
<rect x="370.8" y="541.2" width="4.7" height="4.7" fill="#440154"/>
<rect x="374.9" y="541.2" width="4.7" height="4.7" fill="#440255"/>
<rect x="379.0" y="541.2" width="4.7" height="4.7" fill="#440255"/>
<rect x="383.1" y="541.2" width="4.7" height="4.7" fill="#440356"/>
<rect x="387.2" y="541.2" width="4.7" height="4.7" fill="#461163"/>
<rect x="391.3" y="541.2" width="4.7" height="4.7" fill="#471f70"/>
<rect x="395.4" y="541.2" width="4.7" height="4.7" fill="#462c7a"/>
<rect x="399.5" y="541.2" width="4.7" height="4.7" fill="#462c7a"/>
<rect x="255.9" y="545.3" width="4.7" height="4.7" fill="#440154"/>
<rect x="260.0" y="545.3" width="4.7" height="4.7" fill="#440154"/>
<rect x="264.1" y="545.3" width="4.7" height="4.7" fill="#450a5d"/>
<rect x="268.2" y="545.3" width="4.7" height="4.7" fill="#461466"/>
<rect x="272.3" y="545.3" width="4.7" height="4.7" fill="#471d6f"/>
<rect x="276.4" y="545.3" width="4.7" height="4.7" fill="#44367f"/>
<rect x="280.5" y="545.3" width="4.7" height="4.7" fill="#3d4d89"/>
<rect x="284.6" y="545.3" width="4.7" height="4.7" fill="#34618d"/>
<rect x="288.7" y="545.3" width="4.7" height="4.7" fill="#2f6c8e"/>
<rect x="292.8" y="545.3" width="4.7" height="4.7" fill="#2a788e"/>
<rect x="296.9" y="545.3" width="4.7" height="4.7" fill="#26848d"/>
<rect x="301.0" y="545.3" width="4.7" height="4.7" fill="#228f8c"/>
<rect x="305.1" y="545.3" width="4.7" height="4.7" fill="#219989"/>
<rect x="309.2" y="545.3" width="4.7" height="4.7" fill="#22a386"/>
<rect x="313.3" y="545.3" width="4.7" height="4.7" fill="#228f8c"/>
<rect x="317.4" y="545.3" width="4.7" height="4.7" fill="#297a8e"/>
<rect x="321.5" y="545.3" width="4.7" height="4.7" fill="#32658d"/>
<rect x="325.6" y="545.3" width="4.7" height="4.7" fill="#365d8c"/>
<rect x="329.8" y="545.3" width="4.7" height="4.7" fill="#3a548b"/>
<rect x="333.9" y="545.3" width="4.7" height="4.7" fill="#3e4b89"/>
<rect x="338.0" y="545.3" width="4.7" height="4.7" fill="#3c508a"/>
<rect x="342.1" y="545.3" width="4.7" height="4.7" fill="#3a548b"/>
<rect x="346.2" y="545.3" width="4.7" height="4.7" fill="#38588b"/>
<rect x="350.3" y="545.3" width="4.7" height="4.7" fill="#3e4b89"/>
<rect x="354.4" y="545.3" width="4.7" height="4.7" fill="#433c83"/>
<rect x="358.5" y="545.3" width="4.7" height="4.7" fill="#462d7a"/>
<rect x="362.6" y="545.3" width="4.7" height="4.7" fill="#471f70"/>
<rect x="366.7" y="545.3" width="4.7" height="4.7" fill="#461062"/>
<rect x="370.8" y="545.3" width="4.7" height="4.7" fill="#440154"/>
<rect x="374.9" y="545.3" width="4.7" height="4.7" fill="#440255"/>
<rect x="379.0" y="545.3" width="4.7" height="4.7" fill="#440457"/>
<rect x="383.1" y="545.3" width="4.7" height="4.7" fill="#440558"/>
<rect x="387.2" y="545.3" width="4.7" height="4.7" fill="#471f70"/>
<rect x="391.3" y="545.3" width="4.7" height="4.7" fill="#443780"/>
<rect x="395.4" y="545.3" width="4.7" height="4.7" fill="#3d4d89"/>
<rect x="399.5" y="545.3" width="4.7" height="4.7" fill="#3d4d89"/>
<rect x="255.9" y="549.4" width="4.7" height="4.7" fill="#440154"/>
<rect x="260.0" y="549.4" width="4.7" height="4.7" fill="#440154"/>
<rect x="264.1" y="549.4" width="4.7" height="4.7" fill="#450659"/>
<rect x="268.2" y="549.4" width="4.7" height="4.7" fill="#450b5e"/>
<rect x="272.3" y="549.4" width="4.7" height="4.7" fill="#461163"/>
<rect x="276.4" y="549.4" width="4.7" height="4.7" fill="#462c7a"/>
<rect x="280.5" y="549.4" width="4.7" height="4.7" fill="#404688"/>
<rect x="284.6" y="549.4" width="4.7" height="4.7" fill="#365c8c"/>
<rect x="288.7" y="549.4" width="4.7" height="4.7" fill="#306a8d"/>
<rect x="292.8" y="549.4" width="4.7" height="4.7" fill="#2b778e"/>
<rect x="296.9" y="549.4" width="4.7" height="4.7" fill="#26848d"/>
<rect x="301.0" y="549.4" width="4.7" height="4.7" fill="#21928c"/>
<rect x="305.1" y="549.4" width="4.7" height="4.7" fill="#229f87"/>
<rect x="309.2" y="549.4" width="4.7" height="4.7" fill="#28ac80"/>
<rect x="313.3" y="549.4" width="4.7" height="4.7" fill="#21978a"/>
<rect x="317.4" y="549.4" width="4.7" height="4.7" fill="#27808d"/>
<rect x="321.5" y="549.4" width="4.7" height="4.7" fill="#31698d"/>
<rect x="325.6" y="549.4" width="4.7" height="4.7" fill="#34618d"/>
<rect x="329.8" y="549.4" width="4.7" height="4.7" fill="#38588c"/>
<rect x="333.9" y="549.4" width="4.7" height="4.7" fill="#3c4f8a"/>
<rect x="338.0" y="549.4" width="4.7" height="4.7" fill="#3a548b"/>
<rect x="342.1" y="549.4" width="4.7" height="4.7" fill="#38588b"/>
<rect x="346.2" y="549.4" width="4.7" height="4.7" fill="#365c8c"/>
<rect x="350.3" y="549.4" width="4.7" height="4.7" fill="#3d4c89"/>
<rect x="354.4" y="549.4" width="4.7" height="4.7" fill="#433b82"/>
<rect x="358.5" y="549.4" width="4.7" height="4.7" fill="#472877"/>
<rect x="362.6" y="549.4" width="4.7" height="4.7" fill="#471c6d"/>
<rect x="366.7" y="549.4" width="4.7" height="4.7" fill="#460e61"/>
<rect x="370.8" y="549.4" width="4.7" height="4.7" fill="#440154"/>
<rect x="374.9" y="549.4" width="4.7" height="4.7" fill="#440356"/>
<rect x="379.0" y="549.4" width="4.7" height="4.7" fill="#440558"/>
<rect x="383.1" y="549.4" width="4.7" height="4.7" fill="#45075a"/>
<rect x="387.2" y="549.4" width="4.7" height="4.7" fill="#462c7a"/>
<rect x="391.3" y="549.4" width="4.7" height="4.7" fill="#3d4d89"/>
<rect x="395.4" y="549.4" width="4.7" height="4.7" fill="#31698d"/>
<rect x="399.5" y="549.4" width="4.7" height="4.7" fill="#31698d"/>
<rect x="255.9" y="553.5" width="4.7" height="4.7" fill="#440356"/>
<rect x="260.0" y="553.5" width="4.7" height="4.7" fill="#440356"/>
<rect x="264.1" y="553.5" width="4.7" height="4.7" fill="#450d60"/>
<rect x="268.2" y="553.5" width="4.7" height="4.7" fill="#47186a"/>
<rect x="272.3" y="553.5" width="4.7" height="4.7" fill="#482273"/>
<rect x="276.4" y="553.5" width="4.7" height="4.7" fill="#433981"/>
<rect x="280.5" y="553.5" width="4.7" height="4.7" fill="#3d4e89"/>
<rect x="284.6" y="553.5" width="4.7" height="4.7" fill="#34618d"/>
<rect x="288.7" y="553.5" width="4.7" height="4.7" fill="#32658d"/>
<rect x="292.8" y="553.5" width="4.7" height="4.7" fill="#306a8d"/>
<rect x="296.9" y="553.5" width="4.7" height="4.7" fill="#2e6f8e"/>
<rect x="301.0" y="553.5" width="4.7" height="4.7" fill="#2a788e"/>
<rect x="305.1" y="553.5" width="4.7" height="4.7" fill="#26828d"/>
<rect x="309.2" y="553.5" width="4.7" height="4.7" fill="#238b8c"/>
<rect x="313.3" y="553.5" width="4.7" height="4.7" fill="#297b8e"/>
<rect x="317.4" y="553.5" width="4.7" height="4.7" fill="#306a8d"/>
<rect x="321.5" y="553.5" width="4.7" height="4.7" fill="#38598c"/>
<rect x="325.6" y="553.5" width="4.7" height="4.7" fill="#38578b"/>
<rect x="329.8" y="553.5" width="4.7" height="4.7" fill="#39568b"/>
<rect x="333.9" y="553.5" width="4.7" height="4.7" fill="#3a548b"/>
<rect x="338.0" y="553.5" width="4.7" height="4.7" fill="#375b8c"/>
<rect x="342.1" y="553.5" width="4.7" height="4.7" fill="#33638d"/>
<rect x="346.2" y="553.5" width="4.7" height="4.7" fill="#306a8d"/>
<rect x="350.3" y="553.5" width="4.7" height="4.7" fill="#375a8c"/>
<rect x="354.4" y="553.5" width="4.7" height="4.7" fill="#3f4988"/>
<rect x="358.5" y="553.5" width="4.7" height="4.7" fill="#44367f"/>
<rect x="362.6" y="553.5" width="4.7" height="4.7" fill="#482576"/>
<rect x="366.7" y="553.5" width="4.7" height="4.7" fill="#461365"/>
<rect x="370.8" y="553.5" width="4.7" height="4.7" fill="#440154"/>
<rect x="374.9" y="553.5" width="4.7" height="4.7" fill="#450a5d"/>
<rect x="379.0" y="553.5" width="4.7" height="4.7" fill="#461365"/>
<rect x="383.1" y="553.5" width="4.7" height="4.7" fill="#471c6e"/>
<rect x="387.2" y="553.5" width="4.7" height="4.7" fill="#3d4c89"/>
<rect x="391.3" y="553.5" width="4.7" height="4.7" fill="#2c748e"/>
<rect x="395.4" y="553.5" width="4.7" height="4.7" fill="#219a89"/>
<rect x="399.5" y="553.5" width="4.7" height="4.7" fill="#219a89"/>
<rect x="255.9" y="557.6" width="4.7" height="4.7" fill="#440558"/>
<rect x="260.0" y="557.6" width="4.7" height="4.7" fill="#440558"/>
<rect x="264.1" y="557.6" width="4.7" height="4.7" fill="#461567"/>
<rect x="268.2" y="557.6" width="4.7" height="4.7" fill="#482475"/>
<rect x="272.3" y="557.6" width="4.7" height="4.7" fill="#45337d"/>
<rect x="276.4" y="557.6" width="4.7" height="4.7" fill="#404587"/>
<rect x="280.5" y="557.6" width="4.7" height="4.7" fill="#39558b"/>
<rect x="284.6" y="557.6" width="4.7" height="4.7" fill="#32658d"/>
<rect x="288.7" y="557.6" width="4.7" height="4.7" fill="#34618d"/>
<rect x="292.8" y="557.6" width="4.7" height="4.7" fill="#365e8d"/>
<rect x="296.9" y="557.6" width="4.7" height="4.7" fill="#375a8c"/>
<rect x="301.0" y="557.6" width="4.7" height="4.7" fill="#355f8d"/>
<rect x="305.1" y="557.6" width="4.7" height="4.7" fill="#33648d"/>
<rect x="309.2" y="557.6" width="4.7" height="4.7" fill="#31688d"/>
<rect x="313.3" y="557.6" width="4.7" height="4.7" fill="#355e8d"/>
<rect x="317.4" y="557.6" width="4.7" height="4.7" fill="#3a538a"/>
<rect x="321.5" y="557.6" width="4.7" height="4.7" fill="#3f4888"/>
<rect x="325.6" y="557.6" width="4.7" height="4.7" fill="#3d4e89"/>
<rect x="329.8" y="557.6" width="4.7" height="4.7" fill="#3a538a"/>
<rect x="333.9" y="557.6" width="4.7" height="4.7" fill="#38588b"/>
<rect x="338.0" y="557.6" width="4.7" height="4.7" fill="#33638d"/>
<rect x="342.1" y="557.6" width="4.7" height="4.7" fill="#2f6d8e"/>
<rect x="346.2" y="557.6" width="4.7" height="4.7" fill="#2b778e"/>
<rect x="350.3" y="557.6" width="4.7" height="4.7" fill="#32668d"/>
<rect x="354.4" y="557.6" width="4.7" height="4.7" fill="#39558b"/>
<rect x="358.5" y="557.6" width="4.7" height="4.7" fill="#414487"/>
<rect x="362.6" y="557.6" width="4.7" height="4.7" fill="#462f7b"/>
<rect x="366.7" y="557.6" width="4.7" height="4.7" fill="#47186a"/>
<rect x="370.8" y="557.6" width="4.7" height="4.7" fill="#440154"/>
<rect x="374.9" y="557.6" width="4.7" height="4.7" fill="#461163"/>
<rect x="379.0" y="557.6" width="4.7" height="4.7" fill="#482172"/>
<rect x="383.1" y="557.6" width="4.7" height="4.7" fill="#45307c"/>
<rect x="387.2" y="557.6" width="4.7" height="4.7" fill="#31688d"/>
<rect x="391.3" y="557.6" width="4.7" height="4.7" fill="#219989"/>
<rect x="395.4" y="557.6" width="4.7" height="4.7" fill="#57c565"/>
<rect x="399.5" y="557.6" width="4.7" height="4.7" fill="#57c565"/>
<rect x="255.9" y="561.7" width="4.7" height="4.7" fill="#45075a"/>
<rect x="260.0" y="561.7" width="4.7" height="4.7" fill="#45075a"/>
<rect x="264.1" y="561.7" width="4.7" height="4.7" fill="#471c6e"/>
<rect x="268.2" y="561.7" width="4.7" height="4.7" fill="#45307c"/>
<rect x="272.3" y="561.7" width="4.7" height="4.7" fill="#414386"/>
<rect x="276.4" y="561.7" width="4.7" height="4.7" fill="#3c508a"/>
<rect x="280.5" y="561.7" width="4.7" height="4.7" fill="#365d8d"/>
<rect x="284.6" y="561.7" width="4.7" height="4.7" fill="#31698d"/>
<rect x="288.7" y="561.7" width="4.7" height="4.7" fill="#365d8d"/>
<rect x="292.8" y="561.7" width="4.7" height="4.7" fill="#3c508a"/>
<rect x="296.9" y="561.7" width="4.7" height="4.7" fill="#414386"/>
<rect x="301.0" y="561.7" width="4.7" height="4.7" fill="#414386"/>
<rect x="305.1" y="561.7" width="4.7" height="4.7" fill="#414386"/>
<rect x="309.2" y="561.7" width="4.7" height="4.7" fill="#414386"/>
<rect x="313.3" y="561.7" width="4.7" height="4.7" fill="#423e84"/>
<rect x="317.4" y="561.7" width="4.7" height="4.7" fill="#433a81"/>
<rect x="321.5" y="561.7" width="4.7" height="4.7" fill="#44357f"/>
<rect x="325.6" y="561.7" width="4.7" height="4.7" fill="#414487"/>
<rect x="329.8" y="561.7" width="4.7" height="4.7" fill="#3c508a"/>
<rect x="333.9" y="561.7" width="4.7" height="4.7" fill="#365c8c"/>
<rect x="338.0" y="561.7" width="4.7" height="4.7" fill="#306a8d"/>
<rect x="342.1" y="561.7" width="4.7" height="4.7" fill="#2b778e"/>
<rect x="346.2" y="561.7" width="4.7" height="4.7" fill="#26848d"/>
<rect x="350.3" y="561.7" width="4.7" height="4.7" fill="#2c738e"/>
<rect x="354.4" y="561.7" width="4.7" height="4.7" fill="#34628d"/>
<rect x="358.5" y="561.7" width="4.7" height="4.7" fill="#3c4f8a"/>
<rect x="362.6" y="561.7" width="4.7" height="4.7" fill="#443880"/>
<rect x="366.7" y="561.7" width="4.7" height="4.7" fill="#471d6f"/>
<rect x="370.8" y="561.7" width="4.7" height="4.7" fill="#440154"/>
<rect x="374.9" y="561.7" width="4.7" height="4.7" fill="#47186a"/>
<rect x="379.0" y="561.7" width="4.7" height="4.7" fill="#462e7b"/>
<rect x="383.1" y="561.7" width="4.7" height="4.7" fill="#414386"/>
<rect x="387.2" y="561.7" width="4.7" height="4.7" fill="#26838d"/>
<rect x="391.3" y="561.7" width="4.7" height="4.7" fill="#40bc72"/>
<rect x="395.4" y="561.7" width="4.7" height="4.7" fill="#d2e226"/>
<rect x="399.5" y="561.7" width="4.7" height="4.7" fill="#d2e226"/>
<rect x="255.9" y="565.8" width="4.7" height="4.7" fill="#482173"/>
<rect x="260.0" y="565.8" width="4.7" height="4.7" fill="#482173"/>
<rect x="264.1" y="565.8" width="4.7" height="4.7" fill="#45327d"/>
<rect x="268.2" y="565.8" width="4.7" height="4.7" fill="#414286"/>
<rect x="272.3" y="565.8" width="4.7" height="4.7" fill="#3c508a"/>
<rect x="276.4" y="565.8" width="4.7" height="4.7" fill="#38578b"/>
<rect x="280.5" y="565.8" width="4.7" height="4.7" fill="#355e8d"/>
<rect x="284.6" y="565.8" width="4.7" height="4.7" fill="#32658d"/>
<rect x="288.7" y="565.8" width="4.7" height="4.7" fill="#38598c"/>
<rect x="292.8" y="565.8" width="4.7" height="4.7" fill="#3d4c89"/>
<rect x="296.9" y="565.8" width="4.7" height="4.7" fill="#423e84"/>
<rect x="301.0" y="565.8" width="4.7" height="4.7" fill="#433c82"/>
<rect x="305.1" y="565.8" width="4.7" height="4.7" fill="#433981"/>
<rect x="309.2" y="565.8" width="4.7" height="4.7" fill="#44367f"/>
<rect x="313.3" y="565.8" width="4.7" height="4.7" fill="#44347e"/>
<rect x="317.4" y="565.8" width="4.7" height="4.7" fill="#45337d"/>
<rect x="321.5" y="565.8" width="4.7" height="4.7" fill="#45317c"/>
<rect x="325.6" y="565.8" width="4.7" height="4.7" fill="#414487"/>
<rect x="329.8" y="565.8" width="4.7" height="4.7" fill="#39558b"/>
<rect x="333.9" y="565.8" width="4.7" height="4.7" fill="#32658d"/>
<rect x="338.0" y="565.8" width="4.7" height="4.7" fill="#2c748e"/>
<rect x="342.1" y="565.8" width="4.7" height="4.7" fill="#26838d"/>
<rect x="346.2" y="565.8" width="4.7" height="4.7" fill="#21928c"/>
<rect x="350.3" y="565.8" width="4.7" height="4.7" fill="#287f8d"/>
<rect x="354.4" y="565.8" width="4.7" height="4.7" fill="#2f6c8e"/>
<rect x="358.5" y="565.8" width="4.7" height="4.7" fill="#38588c"/>
<rect x="362.6" y="565.8" width="4.7" height="4.7" fill="#423f84"/>
<rect x="366.7" y="565.8" width="4.7" height="4.7" fill="#482274"/>
<rect x="370.8" y="565.8" width="4.7" height="4.7" fill="#440356"/>
<rect x="374.9" y="565.8" width="4.7" height="4.7" fill="#461668"/>
<rect x="379.0" y="565.8" width="4.7" height="4.7" fill="#472978"/>
<rect x="383.1" y="565.8" width="4.7" height="4.7" fill="#433a81"/>
<rect x="387.2" y="565.8" width="4.7" height="4.7" fill="#297a8e"/>
<rect x="391.3" y="565.8" width="4.7" height="4.7" fill="#33b37a"/>
<rect x="395.4" y="565.8" width="4.7" height="4.7" fill="#b6de2a"/>
<rect x="399.5" y="565.8" width="4.7" height="4.7" fill="#b6de2a"/>
<rect x="255.9" y="569.9" width="4.7" height="4.7" fill="#433a81"/>
<rect x="260.0" y="569.9" width="4.7" height="4.7" fill="#433a81"/>
<rect x="264.1" y="569.9" width="4.7" height="4.7" fill="#404688"/>
<rect x="268.2" y="569.9" width="4.7" height="4.7" fill="#3b528a"/>
<rect x="272.3" y="569.9" width="4.7" height="4.7" fill="#365d8d"/>
<rect x="276.4" y="569.9" width="4.7" height="4.7" fill="#355e8d"/>
<rect x="280.5" y="569.9" width="4.7" height="4.7" fill="#35608d"/>
<rect x="284.6" y="569.9" width="4.7" height="4.7" fill="#34618d"/>
<rect x="288.7" y="569.9" width="4.7" height="4.7" fill="#3a548b"/>
<rect x="292.8" y="569.9" width="4.7" height="4.7" fill="#3f4888"/>
<rect x="296.9" y="569.9" width="4.7" height="4.7" fill="#433a81"/>
<rect x="301.0" y="569.9" width="4.7" height="4.7" fill="#44347e"/>
<rect x="305.1" y="569.9" width="4.7" height="4.7" fill="#462f7b"/>
<rect x="309.2" y="569.9" width="4.7" height="4.7" fill="#472978"/>
<rect x="313.3" y="569.9" width="4.7" height="4.7" fill="#472b79"/>
<rect x="317.4" y="569.9" width="4.7" height="4.7" fill="#462c79"/>
<rect x="321.5" y="569.9" width="4.7" height="4.7" fill="#462d7a"/>
<rect x="325.6" y="569.9" width="4.7" height="4.7" fill="#404587"/>
<rect x="329.8" y="569.9" width="4.7" height="4.7" fill="#375a8c"/>
<rect x="333.9" y="569.9" width="4.7" height="4.7" fill="#2f6e8e"/>
<rect x="338.0" y="569.9" width="4.7" height="4.7" fill="#287e8d"/>
<rect x="342.1" y="569.9" width="4.7" height="4.7" fill="#228f8c"/>
<rect x="346.2" y="569.9" width="4.7" height="4.7" fill="#229f87"/>
<rect x="350.3" y="569.9" width="4.7" height="4.7" fill="#238b8c"/>
<rect x="354.4" y="569.9" width="4.7" height="4.7" fill="#2b768e"/>
<rect x="358.5" y="569.9" width="4.7" height="4.7" fill="#34618d"/>
<rect x="362.6" y="569.9" width="4.7" height="4.7" fill="#404688"/>
<rect x="366.7" y="569.9" width="4.7" height="4.7" fill="#472777"/>
<rect x="370.8" y="569.9" width="4.7" height="4.7" fill="#440558"/>
<rect x="374.9" y="569.9" width="4.7" height="4.7" fill="#461466"/>
<rect x="379.0" y="569.9" width="4.7" height="4.7" fill="#482374"/>
<rect x="383.1" y="569.9" width="4.7" height="4.7" fill="#45317c"/>
<rect x="387.2" y="569.9" width="4.7" height="4.7" fill="#2d728e"/>
<rect x="391.3" y="569.9" width="4.7" height="4.7" fill="#26ab82"/>
<rect x="395.4" y="569.9" width="4.7" height="4.7" fill="#99d73d"/>
<rect x="399.5" y="569.9" width="4.7" height="4.7" fill="#99d73d"/>
<rect x="255.9" y="574.0" width="4.7" height="4.7" fill="#3c4f8a"/>
<rect x="260.0" y="574.0" width="4.7" height="4.7" fill="#3c4f8a"/>
<rect x="264.1" y="574.0" width="4.7" height="4.7" fill="#38588c"/>
<rect x="268.2" y="574.0" width="4.7" height="4.7" fill="#34618d"/>
<rect x="272.3" y="574.0" width="4.7" height="4.7" fill="#31698d"/>
<rect x="276.4" y="574.0" width="4.7" height="4.7" fill="#32658d"/>
<rect x="280.5" y="574.0" width="4.7" height="4.7" fill="#34618d"/>
<rect x="284.6" y="574.0" width="4.7" height="4.7" fill="#365c8c"/>
<rect x="288.7" y="574.0" width="4.7" height="4.7" fill="#3c508a"/>
<rect x="292.8" y="574.0" width="4.7" height="4.7" fill="#414487"/>
<rect x="296.9" y="574.0" width="4.7" height="4.7" fill="#44357f"/>
<rect x="301.0" y="574.0" width="4.7" height="4.7" fill="#462d7a"/>
<rect x="305.1" y="574.0" width="4.7" height="4.7" fill="#482575"/>
<rect x="309.2" y="574.0" width="4.7" height="4.7" fill="#471c6d"/>
<rect x="313.3" y="574.0" width="4.7" height="4.7" fill="#482072"/>
<rect x="317.4" y="574.0" width="4.7" height="4.7" fill="#482575"/>
<rect x="321.5" y="574.0" width="4.7" height="4.7" fill="#472877"/>
<rect x="325.6" y="574.0" width="4.7" height="4.7" fill="#404687"/>
<rect x="329.8" y="574.0" width="4.7" height="4.7" fill="#355f8d"/>
<rect x="333.9" y="574.0" width="4.7" height="4.7" fill="#2b768e"/>
<rect x="338.0" y="574.0" width="4.7" height="4.7" fill="#24898d"/>
<rect x="342.1" y="574.0" width="4.7" height="4.7" fill="#219b89"/>
<rect x="346.2" y="574.0" width="4.7" height="4.7" fill="#28ac80"/>
<rect x="350.3" y="574.0" width="4.7" height="4.7" fill="#21978a"/>
<rect x="354.4" y="574.0" width="4.7" height="4.7" fill="#27808d"/>
<rect x="358.5" y="574.0" width="4.7" height="4.7" fill="#31698d"/>
<rect x="362.6" y="574.0" width="4.7" height="4.7" fill="#3d4d89"/>
<rect x="366.7" y="574.0" width="4.7" height="4.7" fill="#462c7a"/>
<rect x="370.8" y="574.0" width="4.7" height="4.7" fill="#45075a"/>
<rect x="374.9" y="574.0" width="4.7" height="4.7" fill="#461264"/>
<rect x="379.0" y="574.0" width="4.7" height="4.7" fill="#471e6f"/>
<rect x="383.1" y="574.0" width="4.7" height="4.7" fill="#472877"/>
<rect x="387.2" y="574.0" width="4.7" height="4.7" fill="#306a8d"/>
<rect x="391.3" y="574.0" width="4.7" height="4.7" fill="#22a286"/>
<rect x="395.4" y="574.0" width="4.7" height="4.7" fill="#7cd150"/>
<rect x="399.5" y="574.0" width="4.7" height="4.7" fill="#7cd150"/>
<rect x="255.9" y="578.1" width="4.7" height="4.7" fill="#365d8d"/>
<rect x="260.0" y="578.1" width="4.7" height="4.7" fill="#365d8d"/>
<rect x="264.1" y="578.1" width="4.7" height="4.7" fill="#33638d"/>
<rect x="268.2" y="578.1" width="4.7" height="4.7" fill="#31688d"/>
<rect x="272.3" y="578.1" width="4.7" height="4.7" fill="#2f6d8e"/>
<rect x="276.4" y="578.1" width="4.7" height="4.7" fill="#31698d"/>
<rect x="280.5" y="578.1" width="4.7" height="4.7" fill="#32658d"/>
<rect x="284.6" y="578.1" width="4.7" height="4.7" fill="#34618d"/>
<rect x="288.7" y="578.1" width="4.7" height="4.7" fill="#39568b"/>
<rect x="292.8" y="578.1" width="4.7" height="4.7" fill="#3e4b88"/>
<rect x="296.9" y="578.1" width="4.7" height="4.7" fill="#423f84"/>
<rect x="301.0" y="578.1" width="4.7" height="4.7" fill="#44357e"/>
<rect x="305.1" y="578.1" width="4.7" height="4.7" fill="#472b79"/>
<rect x="309.2" y="578.1" width="4.7" height="4.7" fill="#482072"/>
<rect x="313.3" y="578.1" width="4.7" height="4.7" fill="#462b79"/>
<rect x="317.4" y="578.1" width="4.7" height="4.7" fill="#44367f"/>
<rect x="321.5" y="578.1" width="4.7" height="4.7" fill="#424185"/>
<rect x="325.6" y="578.1" width="4.7" height="4.7" fill="#38588c"/>
<rect x="329.8" y="578.1" width="4.7" height="4.7" fill="#2e6e8e"/>
<rect x="333.9" y="578.1" width="4.7" height="4.7" fill="#26848d"/>
<rect x="338.0" y="578.1" width="4.7" height="4.7" fill="#21928c"/>
<rect x="342.1" y="578.1" width="4.7" height="4.7" fill="#229f87"/>
<rect x="346.2" y="578.1" width="4.7" height="4.7" fill="#28ac80"/>
<rect x="350.3" y="578.1" width="4.7" height="4.7" fill="#219a89"/>
<rect x="354.4" y="578.1" width="4.7" height="4.7" fill="#25868d"/>
<rect x="358.5" y="578.1" width="4.7" height="4.7" fill="#2d728e"/>
<rect x="362.6" y="578.1" width="4.7" height="4.7" fill="#39568b"/>
<rect x="366.7" y="578.1" width="4.7" height="4.7" fill="#44377f"/>
<rect x="370.8" y="578.1" width="4.7" height="4.7" fill="#461264"/>
<rect x="374.9" y="578.1" width="4.7" height="4.7" fill="#461668"/>
<rect x="379.0" y="578.1" width="4.7" height="4.7" fill="#471a6b"/>
<rect x="383.1" y="578.1" width="4.7" height="4.7" fill="#471e6f"/>
<rect x="387.2" y="578.1" width="4.7" height="4.7" fill="#3a548b"/>
<rect x="391.3" y="578.1" width="4.7" height="4.7" fill="#27828d"/>
<rect x="395.4" y="578.1" width="4.7" height="4.7" fill="#27ac81"/>
<rect x="399.5" y="578.1" width="4.7" height="4.7" fill="#27ac81"/>
<rect x="255.9" y="582.2" width="4.7" height="4.7" fill="#306a8d"/>
<rect x="260.0" y="582.2" width="4.7" height="4.7" fill="#306a8d"/>
<rect x="264.1" y="582.2" width="4.7" height="4.7" fill="#2f6c8e"/>
<rect x="268.2" y="582.2" width="4.7" height="4.7" fill="#2e6f8e"/>
<rect x="272.3" y="582.2" width="4.7" height="4.7" fill="#2d728e"/>
<rect x="276.4" y="582.2" width="4.7" height="4.7" fill="#2f6d8e"/>
<rect x="280.5" y="582.2" width="4.7" height="4.7" fill="#31698d"/>
<rect x="284.6" y="582.2" width="4.7" height="4.7" fill="#32658d"/>
<rect x="288.7" y="582.2" width="4.7" height="4.7" fill="#375b8c"/>
<rect x="292.8" y="582.2" width="4.7" height="4.7" fill="#3b518a"/>
<rect x="296.9" y="582.2" width="4.7" height="4.7" fill="#3f4788"/>
<rect x="301.0" y="582.2" width="4.7" height="4.7" fill="#433c83"/>
<rect x="305.1" y="582.2" width="4.7" height="4.7" fill="#45307c"/>
<rect x="309.2" y="582.2" width="4.7" height="4.7" fill="#482575"/>
<rect x="313.3" y="582.2" width="4.7" height="4.7" fill="#44367f"/>
<rect x="317.4" y="582.2" width="4.7" height="4.7" fill="#404788"/>
<rect x="321.5" y="582.2" width="4.7" height="4.7" fill="#39558b"/>
<rect x="325.6" y="582.2" width="4.7" height="4.7" fill="#306a8d"/>
<rect x="329.8" y="582.2" width="4.7" height="4.7" fill="#287e8e"/>
<rect x="333.9" y="582.2" width="4.7" height="4.7" fill="#21928c"/>
<rect x="338.0" y="582.2" width="4.7" height="4.7" fill="#219b89"/>
<rect x="342.1" y="582.2" width="4.7" height="4.7" fill="#22a386"/>
<rect x="346.2" y="582.2" width="4.7" height="4.7" fill="#28ac80"/>
<rect x="350.3" y="582.2" width="4.7" height="4.7" fill="#219c88"/>
<rect x="354.4" y="582.2" width="4.7" height="4.7" fill="#238c8c"/>
<rect x="358.5" y="582.2" width="4.7" height="4.7" fill="#297b8e"/>
<rect x="362.6" y="582.2" width="4.7" height="4.7" fill="#355f8d"/>
<rect x="366.7" y="582.2" width="4.7" height="4.7" fill="#424185"/>
<rect x="370.8" y="582.2" width="4.7" height="4.7" fill="#471e6f"/>
<rect x="374.9" y="582.2" width="4.7" height="4.7" fill="#471a6b"/>
<rect x="379.0" y="582.2" width="4.7" height="4.7" fill="#461668"/>
<rect x="383.1" y="582.2" width="4.7" height="4.7" fill="#461264"/>
<rect x="387.2" y="582.2" width="4.7" height="4.7" fill="#433c83"/>
<rect x="391.3" y="582.2" width="4.7" height="4.7" fill="#35608d"/>
<rect x="395.4" y="582.2" width="4.7" height="4.7" fill="#277f8d"/>
<rect x="399.5" y="582.2" width="4.7" height="4.7" fill="#277f8d"/>
<rect x="255.9" y="586.3" width="4.7" height="4.7" fill="#2b768e"/>
<rect x="260.0" y="586.3" width="4.7" height="4.7" fill="#2b768e"/>
<rect x="264.1" y="586.3" width="4.7" height="4.7" fill="#2b768e"/>
<rect x="268.2" y="586.3" width="4.7" height="4.7" fill="#2b768e"/>
<rect x="272.3" y="586.3" width="4.7" height="4.7" fill="#2b768e"/>
<rect x="276.4" y="586.3" width="4.7" height="4.7" fill="#2d728e"/>
<rect x="280.5" y="586.3" width="4.7" height="4.7" fill="#2f6d8e"/>
<rect x="284.6" y="586.3" width="4.7" height="4.7" fill="#31698d"/>
<rect x="288.7" y="586.3" width="4.7" height="4.7" fill="#34618d"/>
<rect x="292.8" y="586.3" width="4.7" height="4.7" fill="#38588c"/>
<rect x="296.9" y="586.3" width="4.7" height="4.7" fill="#3c4f8a"/>
<rect x="301.0" y="586.3" width="4.7" height="4.7" fill="#414487"/>
<rect x="305.1" y="586.3" width="4.7" height="4.7" fill="#44367f"/>
<rect x="309.2" y="586.3" width="4.7" height="4.7" fill="#472877"/>
<rect x="313.3" y="586.3" width="4.7" height="4.7" fill="#424185"/>
<rect x="317.4" y="586.3" width="4.7" height="4.7" fill="#39558b"/>
<rect x="321.5" y="586.3" width="4.7" height="4.7" fill="#31698d"/>
<rect x="325.6" y="586.3" width="4.7" height="4.7" fill="#297b8e"/>
<rect x="329.8" y="586.3" width="4.7" height="4.7" fill="#228e8c"/>
<rect x="333.9" y="586.3" width="4.7" height="4.7" fill="#229f87"/>
<rect x="338.0" y="586.3" width="4.7" height="4.7" fill="#22a386"/>
<rect x="342.1" y="586.3" width="4.7" height="4.7" fill="#22a884"/>
<rect x="346.2" y="586.3" width="4.7" height="4.7" fill="#28ac80"/>
<rect x="350.3" y="586.3" width="4.7" height="4.7" fill="#229f87"/>
<rect x="354.4" y="586.3" width="4.7" height="4.7" fill="#21928c"/>
<rect x="358.5" y="586.3" width="4.7" height="4.7" fill="#26848d"/>
<rect x="362.6" y="586.3" width="4.7" height="4.7" fill="#31688d"/>
<rect x="366.7" y="586.3" width="4.7" height="4.7" fill="#3e4b88"/>
<rect x="370.8" y="586.3" width="4.7" height="4.7" fill="#472877"/>
<rect x="374.9" y="586.3" width="4.7" height="4.7" fill="#471e6f"/>
<rect x="379.0" y="586.3" width="4.7" height="4.7" fill="#461264"/>
<rect x="383.1" y="586.3" width="4.7" height="4.7" fill="#45075a"/>
<rect x="387.2" y="586.3" width="4.7" height="4.7" fill="#482173"/>
<rect x="391.3" y="586.3" width="4.7" height="4.7" fill="#433a81"/>
<rect x="395.4" y="586.3" width="4.7" height="4.7" fill="#3c4f8a"/>
<rect x="399.5" y="586.3" width="4.7" height="4.7" fill="#3c4f8a"/>
<rect x="255.9" y="590.4" width="4.7" height="4.7" fill="#2f6e8e"/>
<rect x="260.0" y="590.4" width="4.7" height="4.7" fill="#2f6e8e"/>
<rect x="264.1" y="590.4" width="4.7" height="4.7" fill="#2f6c8e"/>
<rect x="268.2" y="590.4" width="4.7" height="4.7" fill="#306b8d"/>
<rect x="272.3" y="590.4" width="4.7" height="4.7" fill="#306a8d"/>
<rect x="276.4" y="590.4" width="4.7" height="4.7" fill="#32658d"/>
<rect x="280.5" y="590.4" width="4.7" height="4.7" fill="#34618d"/>
<rect x="284.6" y="590.4" width="4.7" height="4.7" fill="#365d8d"/>
<rect x="288.7" y="590.4" width="4.7" height="4.7" fill="#3a548a"/>
<rect x="292.8" y="590.4" width="4.7" height="4.7" fill="#3e4a88"/>
<rect x="296.9" y="590.4" width="4.7" height="4.7" fill="#424085"/>
<rect x="301.0" y="590.4" width="4.7" height="4.7" fill="#44367f"/>
<rect x="305.1" y="590.4" width="4.7" height="4.7" fill="#462b79"/>
<rect x="309.2" y="590.4" width="4.7" height="4.7" fill="#482172"/>
<rect x="313.3" y="590.4" width="4.7" height="4.7" fill="#3f4988"/>
<rect x="317.4" y="590.4" width="4.7" height="4.7" fill="#306a8d"/>
<rect x="321.5" y="590.4" width="4.7" height="4.7" fill="#238a8d"/>
<rect x="325.6" y="590.4" width="4.7" height="4.7" fill="#21988a"/>
<rect x="329.8" y="590.4" width="4.7" height="4.7" fill="#22a485"/>
<rect x="333.9" y="590.4" width="4.7" height="4.7" fill="#30b17c"/>
<rect x="338.0" y="590.4" width="4.7" height="4.7" fill="#29ad80"/>
<rect x="342.1" y="590.4" width="4.7" height="4.7" fill="#22a884"/>
<rect x="346.2" y="590.4" width="4.7" height="4.7" fill="#22a386"/>
<rect x="350.3" y="590.4" width="4.7" height="4.7" fill="#21988a"/>
<rect x="354.4" y="590.4" width="4.7" height="4.7" fill="#238c8c"/>
<rect x="358.5" y="590.4" width="4.7" height="4.7" fill="#277f8d"/>
<rect x="362.6" y="590.4" width="4.7" height="4.7" fill="#31688d"/>
<rect x="366.7" y="590.4" width="4.7" height="4.7" fill="#3b518a"/>
<rect x="370.8" y="590.4" width="4.7" height="4.7" fill="#44367f"/>
<rect x="374.9" y="590.4" width="4.7" height="4.7" fill="#472877"/>
<rect x="379.0" y="590.4" width="4.7" height="4.7" fill="#47196b"/>
<rect x="383.1" y="590.4" width="4.7" height="4.7" fill="#450a5d"/>
<rect x="387.2" y="590.4" width="4.7" height="4.7" fill="#471d6e"/>
<rect x="391.3" y="590.4" width="4.7" height="4.7" fill="#462f7b"/>
<rect x="395.4" y="590.4" width="4.7" height="4.7" fill="#424085"/>
<rect x="399.5" y="590.4" width="4.7" height="4.7" fill="#424085"/>
<rect x="255.9" y="594.5" width="4.7" height="4.7" fill="#32658d"/>
<rect x="260.0" y="594.5" width="4.7" height="4.7" fill="#32658d"/>
<rect x="264.1" y="594.5" width="4.7" height="4.7" fill="#34628d"/>
<rect x="268.2" y="594.5" width="4.7" height="4.7" fill="#35608d"/>
<rect x="272.3" y="594.5" width="4.7" height="4.7" fill="#365d8d"/>
<rect x="276.4" y="594.5" width="4.7" height="4.7" fill="#38598c"/>
<rect x="280.5" y="594.5" width="4.7" height="4.7" fill="#3a548b"/>
<rect x="284.6" y="594.5" width="4.7" height="4.7" fill="#3c508a"/>
<rect x="288.7" y="594.5" width="4.7" height="4.7" fill="#404687"/>
<rect x="292.8" y="594.5" width="4.7" height="4.7" fill="#433a82"/>
<rect x="296.9" y="594.5" width="4.7" height="4.7" fill="#462e7b"/>
<rect x="301.0" y="594.5" width="4.7" height="4.7" fill="#472777"/>
<rect x="305.1" y="594.5" width="4.7" height="4.7" fill="#482071"/>
<rect x="309.2" y="594.5" width="4.7" height="4.7" fill="#47196a"/>
<rect x="313.3" y="594.5" width="4.7" height="4.7" fill="#3b518a"/>
<rect x="317.4" y="594.5" width="4.7" height="4.7" fill="#287f8d"/>
<rect x="321.5" y="594.5" width="4.7" height="4.7" fill="#24aa83"/>
<rect x="325.6" y="594.5" width="4.7" height="4.7" fill="#31b27b"/>
<rect x="329.8" y="594.5" width="4.7" height="4.7" fill="#3ebb73"/>
<rect x="333.9" y="594.5" width="4.7" height="4.7" fill="#50c369"/>
<rect x="338.0" y="594.5" width="4.7" height="4.7" fill="#37b678"/>
<rect x="342.1" y="594.5" width="4.7" height="4.7" fill="#22a884"/>
<rect x="346.2" y="594.5" width="4.7" height="4.7" fill="#219a89"/>
<rect x="350.3" y="594.5" width="4.7" height="4.7" fill="#21908c"/>
<rect x="354.4" y="594.5" width="4.7" height="4.7" fill="#25858d"/>
<rect x="358.5" y="594.5" width="4.7" height="4.7" fill="#297b8e"/>
<rect x="362.6" y="594.5" width="4.7" height="4.7" fill="#31698d"/>
<rect x="366.7" y="594.5" width="4.7" height="4.7" fill="#39578b"/>
<rect x="370.8" y="594.5" width="4.7" height="4.7" fill="#414487"/>
<rect x="374.9" y="594.5" width="4.7" height="4.7" fill="#45327d"/>
<rect x="379.0" y="594.5" width="4.7" height="4.7" fill="#482172"/>
<rect x="383.1" y="594.5" width="4.7" height="4.7" fill="#450d60"/>
<rect x="387.2" y="594.5" width="4.7" height="4.7" fill="#47196a"/>
<rect x="391.3" y="594.5" width="4.7" height="4.7" fill="#482475"/>
<rect x="395.4" y="594.5" width="4.7" height="4.7" fill="#462e7b"/>
<rect x="399.5" y="594.5" width="4.7" height="4.7" fill="#462e7b"/>
<rect x="255.9" y="598.6" width="4.7" height="4.7" fill="#365c8c"/>
<rect x="260.0" y="598.6" width="4.7" height="4.7" fill="#365c8c"/>
<rect x="264.1" y="598.6" width="4.7" height="4.7" fill="#38588b"/>
<rect x="268.2" y="598.6" width="4.7" height="4.7" fill="#3a548b"/>
<rect x="272.3" y="598.6" width="4.7" height="4.7" fill="#3c4f8a"/>
<rect x="276.4" y="598.6" width="4.7" height="4.7" fill="#3e4b89"/>
<rect x="280.5" y="598.6" width="4.7" height="4.7" fill="#404788"/>
<rect x="284.6" y="598.6" width="4.7" height="4.7" fill="#414386"/>
<rect x="288.7" y="598.6" width="4.7" height="4.7" fill="#44367f"/>
<rect x="292.8" y="598.6" width="4.7" height="4.7" fill="#472978"/>
<rect x="296.9" y="598.6" width="4.7" height="4.7" fill="#471c6d"/>
<rect x="301.0" y="598.6" width="4.7" height="4.7" fill="#47186a"/>
<rect x="305.1" y="598.6" width="4.7" height="4.7" fill="#461466"/>
<rect x="309.2" y="598.6" width="4.7" height="4.7" fill="#461163"/>
<rect x="313.3" y="598.6" width="4.7" height="4.7" fill="#38598c"/>
<rect x="317.4" y="598.6" width="4.7" height="4.7" fill="#21938b"/>
<rect x="321.5" y="598.6" width="4.7" height="4.7" fill="#5ac664"/>
<rect x="325.6" y="598.6" width="4.7" height="4.7" fill="#65ca5d"/>
<rect x="329.8" y="598.6" width="4.7" height="4.7" fill="#70ce57"/>
<rect x="333.9" y="598.6" width="4.7" height="4.7" fill="#7cd150"/>
<rect x="338.0" y="598.6" width="4.7" height="4.7" fill="#45bf6f"/>
<rect x="342.1" y="598.6" width="4.7" height="4.7" fill="#23a984"/>
<rect x="346.2" y="598.6" width="4.7" height="4.7" fill="#21918c"/>
<rect x="350.3" y="598.6" width="4.7" height="4.7" fill="#24888d"/>
<rect x="354.4" y="598.6" width="4.7" height="4.7" fill="#277f8d"/>
<rect x="358.5" y="598.6" width="4.7" height="4.7" fill="#2b768e"/>
<rect x="362.6" y="598.6" width="4.7" height="4.7" fill="#306a8d"/>
<rect x="366.7" y="598.6" width="4.7" height="4.7" fill="#365d8d"/>
<rect x="370.8" y="598.6" width="4.7" height="4.7" fill="#3c4f8a"/>
<rect x="374.9" y="598.6" width="4.7" height="4.7" fill="#433c83"/>
<rect x="379.0" y="598.6" width="4.7" height="4.7" fill="#472777"/>
<rect x="383.1" y="598.6" width="4.7" height="4.7" fill="#461163"/>
<rect x="387.2" y="598.6" width="4.7" height="4.7" fill="#461466"/>
<rect x="391.3" y="598.6" width="4.7" height="4.7" fill="#47186a"/>
<rect x="395.4" y="598.6" width="4.7" height="4.7" fill="#471c6d"/>
<rect x="399.5" y="598.6" width="4.7" height="4.7" fill="#471c6d"/>
<rect x="255.9" y="602.7" width="4.7" height="4.7" fill="#3c508a"/>
<rect x="260.0" y="602.7" width="4.7" height="4.7" fill="#3c508a"/>
<rect x="264.1" y="602.7" width="4.7" height="4.7" fill="#3d4c89"/>
<rect x="268.2" y="602.7" width="4.7" height="4.7" fill="#3f4888"/>
<rect x="272.3" y="602.7" width="4.7" height="4.7" fill="#414487"/>
<rect x="276.4" y="602.7" width="4.7" height="4.7" fill="#423f84"/>
<rect x="280.5" y="602.7" width="4.7" height="4.7" fill="#433b82"/>
<rect x="284.6" y="602.7" width="4.7" height="4.7" fill="#44367f"/>
<rect x="288.7" y="602.7" width="4.7" height="4.7" fill="#462c79"/>
<rect x="292.8" y="602.7" width="4.7" height="4.7" fill="#482172"/>
<rect x="296.9" y="602.7" width="4.7" height="4.7" fill="#461567"/>
<rect x="301.0" y="602.7" width="4.7" height="4.7" fill="#471d6f"/>
<rect x="305.1" y="602.7" width="4.7" height="4.7" fill="#482576"/>
<rect x="309.2" y="602.7" width="4.7" height="4.7" fill="#462c7a"/>
<rect x="313.3" y="602.7" width="4.7" height="4.7" fill="#306a8d"/>
<rect x="317.4" y="602.7" width="4.7" height="4.7" fill="#22a087"/>
<rect x="321.5" y="602.7" width="4.7" height="4.7" fill="#70ce56"/>
<rect x="325.6" y="602.7" width="4.7" height="4.7" fill="#70ce57"/>
<rect x="329.8" y="602.7" width="4.7" height="4.7" fill="#70ce57"/>
<rect x="333.9" y="602.7" width="4.7" height="4.7" fill="#70ce57"/>
<rect x="338.0" y="602.7" width="4.7" height="4.7" fill="#3cba75"/>
<rect x="342.1" y="602.7" width="4.7" height="4.7" fill="#22a186"/>
<rect x="346.2" y="602.7" width="4.7" height="4.7" fill="#24888d"/>
<rect x="350.3" y="602.7" width="4.7" height="4.7" fill="#27818d"/>
<rect x="354.4" y="602.7" width="4.7" height="4.7" fill="#2a798e"/>
<rect x="358.5" y="602.7" width="4.7" height="4.7" fill="#2d728e"/>
<rect x="362.6" y="602.7" width="4.7" height="4.7" fill="#32678d"/>
<rect x="366.7" y="602.7" width="4.7" height="4.7" fill="#375b8c"/>
<rect x="370.8" y="602.7" width="4.7" height="4.7" fill="#3c4f8a"/>
<rect x="374.9" y="602.7" width="4.7" height="4.7" fill="#424085"/>
<rect x="379.0" y="602.7" width="4.7" height="4.7" fill="#462f7b"/>
<rect x="383.1" y="602.7" width="4.7" height="4.7" fill="#471d6f"/>
<rect x="387.2" y="602.7" width="4.7" height="4.7" fill="#471e70"/>
<rect x="391.3" y="602.7" width="4.7" height="4.7" fill="#471f71"/>
<rect x="395.4" y="602.7" width="4.7" height="4.7" fill="#482072"/>
<rect x="399.5" y="602.7" width="4.7" height="4.7" fill="#482072"/>
<rect x="255.9" y="606.9" width="4.7" height="4.7" fill="#414487"/>
<rect x="260.0" y="606.9" width="4.7" height="4.7" fill="#414487"/>
<rect x="264.1" y="606.9" width="4.7" height="4.7" fill="#423f84"/>
<rect x="268.2" y="606.9" width="4.7" height="4.7" fill="#433b82"/>
<rect x="272.3" y="606.9" width="4.7" height="4.7" fill="#44367f"/>
<rect x="276.4" y="606.9" width="4.7" height="4.7" fill="#45327d"/>
<rect x="280.5" y="606.9" width="4.7" height="4.7" fill="#462e7a"/>
<rect x="284.6" y="606.9" width="4.7" height="4.7" fill="#472978"/>
<rect x="288.7" y="606.9" width="4.7" height="4.7" fill="#482172"/>
<rect x="292.8" y="606.9" width="4.7" height="4.7" fill="#471769"/>
<rect x="296.9" y="606.9" width="4.7" height="4.7" fill="#450e60"/>
<rect x="301.0" y="606.9" width="4.7" height="4.7" fill="#482273"/>
<rect x="305.1" y="606.9" width="4.7" height="4.7" fill="#44347e"/>
<rect x="309.2" y="606.9" width="4.7" height="4.7" fill="#404688"/>
<rect x="313.3" y="606.9" width="4.7" height="4.7" fill="#297b8e"/>
<rect x="317.4" y="606.9" width="4.7" height="4.7" fill="#29ac80"/>
<rect x="321.5" y="606.9" width="4.7" height="4.7" fill="#8bd446"/>
<rect x="325.6" y="606.9" width="4.7" height="4.7" fill="#7cd24f"/>
<rect x="329.8" y="606.9" width="4.7" height="4.7" fill="#70ce57"/>
<rect x="333.9" y="606.9" width="4.7" height="4.7" fill="#65ca5d"/>
<rect x="338.0" y="606.9" width="4.7" height="4.7" fill="#33b47a"/>
<rect x="342.1" y="606.9" width="4.7" height="4.7" fill="#219a89"/>
<rect x="346.2" y="606.9" width="4.7" height="4.7" fill="#277f8d"/>
<rect x="350.3" y="606.9" width="4.7" height="4.7" fill="#2a798e"/>
<rect x="354.4" y="606.9" width="4.7" height="4.7" fill="#2c738e"/>
<rect x="358.5" y="606.9" width="4.7" height="4.7" fill="#2f6d8e"/>
<rect x="362.6" y="606.9" width="4.7" height="4.7" fill="#33648d"/>
<rect x="366.7" y="606.9" width="4.7" height="4.7" fill="#375a8c"/>
<rect x="370.8" y="606.9" width="4.7" height="4.7" fill="#3c4f8a"/>
<rect x="374.9" y="606.9" width="4.7" height="4.7" fill="#414487"/>
<rect x="379.0" y="606.9" width="4.7" height="4.7" fill="#443780"/>
<rect x="383.1" y="606.9" width="4.7" height="4.7" fill="#472a78"/>
<rect x="387.2" y="606.9" width="4.7" height="4.7" fill="#472877"/>
<rect x="391.3" y="606.9" width="4.7" height="4.7" fill="#482676"/>
<rect x="395.4" y="606.9" width="4.7" height="4.7" fill="#482575"/>
<rect x="399.5" y="606.9" width="4.7" height="4.7" fill="#482575"/>
<rect x="255.9" y="611.0" width="4.7" height="4.7" fill="#44357f"/>
<rect x="260.0" y="611.0" width="4.7" height="4.7" fill="#44357f"/>
<rect x="264.1" y="611.0" width="4.7" height="4.7" fill="#45317c"/>
<rect x="268.2" y="611.0" width="4.7" height="4.7" fill="#462d7a"/>
<rect x="272.3" y="611.0" width="4.7" height="4.7" fill="#472877"/>
<rect x="276.4" y="611.0" width="4.7" height="4.7" fill="#482575"/>
<rect x="280.5" y="611.0" width="4.7" height="4.7" fill="#482072"/>
<rect x="284.6" y="611.0" width="4.7" height="4.7" fill="#471c6d"/>
<rect x="288.7" y="611.0" width="4.7" height="4.7" fill="#461567"/>
<rect x="292.8" y="611.0" width="4.7" height="4.7" fill="#450e60"/>
<rect x="296.9" y="611.0" width="4.7" height="4.7" fill="#45075a"/>
<rect x="301.0" y="611.0" width="4.7" height="4.7" fill="#472777"/>
<rect x="305.1" y="611.0" width="4.7" height="4.7" fill="#414487"/>
<rect x="309.2" y="611.0" width="4.7" height="4.7" fill="#365c8c"/>
<rect x="313.3" y="611.0" width="4.7" height="4.7" fill="#238d8c"/>
<rect x="317.4" y="611.0" width="4.7" height="4.7" fill="#3cb975"/>
<rect x="321.5" y="611.0" width="4.7" height="4.7" fill="#a7da34"/>
<rect x="325.6" y="611.0" width="4.7" height="4.7" fill="#8bd446"/>
<rect x="329.8" y="611.0" width="4.7" height="4.7" fill="#70ce56"/>
<rect x="333.9" y="611.0" width="4.7" height="4.7" fill="#5ac664"/>
<rect x="338.0" y="611.0" width="4.7" height="4.7" fill="#2aae7f"/>
<rect x="342.1" y="611.0" width="4.7" height="4.7" fill="#21938b"/>
<rect x="346.2" y="611.0" width="4.7" height="4.7" fill="#2b768e"/>
<rect x="350.3" y="611.0" width="4.7" height="4.7" fill="#2d728e"/>
<rect x="354.4" y="611.0" width="4.7" height="4.7" fill="#2f6d8e"/>
<rect x="358.5" y="611.0" width="4.7" height="4.7" fill="#31698d"/>
<rect x="362.6" y="611.0" width="4.7" height="4.7" fill="#34618d"/>
<rect x="366.7" y="611.0" width="4.7" height="4.7" fill="#38588c"/>
<rect x="370.8" y="611.0" width="4.7" height="4.7" fill="#3c4f8a"/>
<rect x="374.9" y="611.0" width="4.7" height="4.7" fill="#3f4788"/>
<rect x="379.0" y="611.0" width="4.7" height="4.7" fill="#423f84"/>
<rect x="383.1" y="611.0" width="4.7" height="4.7" fill="#44357f"/>
<rect x="387.2" y="611.0" width="4.7" height="4.7" fill="#45317c"/>
<rect x="391.3" y="611.0" width="4.7" height="4.7" fill="#462d7a"/>
<rect x="395.4" y="611.0" width="4.7" height="4.7" fill="#472877"/>
<rect x="399.5" y="611.0" width="4.7" height="4.7" fill="#472877"/>
<rect x="255.9" y="615.1" width="4.7" height="4.7" fill="#462d7a"/>
<rect x="260.0" y="615.1" width="4.7" height="4.7" fill="#462d7a"/>
<rect x="264.1" y="615.1" width="4.7" height="4.7" fill="#472877"/>
<rect x="268.2" y="615.1" width="4.7" height="4.7" fill="#482374"/>
<rect x="272.3" y="615.1" width="4.7" height="4.7" fill="#471e6f"/>
<rect x="276.4" y="615.1" width="4.7" height="4.7" fill="#471d6e"/>
<rect x="280.5" y="615.1" width="4.7" height="4.7" fill="#471d6e"/>
<rect x="284.6" y="615.1" width="4.7" height="4.7" fill="#471c6d"/>
<rect x="288.7" y="615.1" width="4.7" height="4.7" fill="#471a6c"/>
<rect x="292.8" y="615.1" width="4.7" height="4.7" fill="#47196a"/>
<rect x="296.9" y="615.1" width="4.7" height="4.7" fill="#471769"/>
<rect x="301.0" y="615.1" width="4.7" height="4.7" fill="#433c83"/>
<rect x="305.1" y="615.1" width="4.7" height="4.7" fill="#375c8c"/>
<rect x="309.2" y="615.1" width="4.7" height="4.7" fill="#2a788e"/>
<rect x="313.3" y="615.1" width="4.7" height="4.7" fill="#229f87"/>
<rect x="317.4" y="615.1" width="4.7" height="4.7" fill="#52c468"/>
<rect x="321.5" y="615.1" width="4.7" height="4.7" fill="#b6de2b"/>
<rect x="325.6" y="615.1" width="4.7" height="4.7" fill="#7bd151"/>
<rect x="329.8" y="615.1" width="4.7" height="4.7" fill="#4bc16c"/>
<rect x="333.9" y="615.1" width="4.7" height="4.7" fill="#2aae7f"/>
<rect x="338.0" y="615.1" width="4.7" height="4.7" fill="#219989"/>
<rect x="342.1" y="615.1" width="4.7" height="4.7" fill="#26848d"/>
<rect x="346.2" y="615.1" width="4.7" height="4.7" fill="#2f6e8e"/>
<rect x="350.3" y="615.1" width="4.7" height="4.7" fill="#31688d"/>
<rect x="354.4" y="615.1" width="4.7" height="4.7" fill="#33638d"/>
<rect x="358.5" y="615.1" width="4.7" height="4.7" fill="#365d8d"/>
<rect x="362.6" y="615.1" width="4.7" height="4.7" fill="#3a548a"/>
<rect x="366.7" y="615.1" width="4.7" height="4.7" fill="#3e4a88"/>
<rect x="370.8" y="615.1" width="4.7" height="4.7" fill="#424085"/>
<rect x="374.9" y="615.1" width="4.7" height="4.7" fill="#443880"/>
<rect x="379.0" y="615.1" width="4.7" height="4.7" fill="#462f7b"/>
<rect x="383.1" y="615.1" width="4.7" height="4.7" fill="#472777"/>
<rect x="387.2" y="615.1" width="4.7" height="4.7" fill="#482475"/>
<rect x="391.3" y="615.1" width="4.7" height="4.7" fill="#482172"/>
<rect x="395.4" y="615.1" width="4.7" height="4.7" fill="#471e6f"/>
<rect x="399.5" y="615.1" width="4.7" height="4.7" fill="#471e6f"/>
<rect x="255.9" y="619.2" width="4.7" height="4.7" fill="#482575"/>
<rect x="260.0" y="619.2" width="4.7" height="4.7" fill="#482575"/>
<rect x="264.1" y="619.2" width="4.7" height="4.7" fill="#471f70"/>
<rect x="268.2" y="619.2" width="4.7" height="4.7" fill="#47196a"/>
<rect x="272.3" y="619.2" width="4.7" height="4.7" fill="#461264"/>
<rect x="276.4" y="619.2" width="4.7" height="4.7" fill="#461667"/>
<rect x="280.5" y="619.2" width="4.7" height="4.7" fill="#47196a"/>
<rect x="284.6" y="619.2" width="4.7" height="4.7" fill="#471c6d"/>
<rect x="288.7" y="619.2" width="4.7" height="4.7" fill="#482071"/>
<rect x="292.8" y="619.2" width="4.7" height="4.7" fill="#482374"/>
<rect x="296.9" y="619.2" width="4.7" height="4.7" fill="#472777"/>
<rect x="301.0" y="619.2" width="4.7" height="4.7" fill="#3c4f8a"/>
<rect x="305.1" y="619.2" width="4.7" height="4.7" fill="#2d728e"/>
<rect x="309.2" y="619.2" width="4.7" height="4.7" fill="#21938b"/>
<rect x="313.3" y="619.2" width="4.7" height="4.7" fill="#31b27b"/>
<rect x="317.4" y="619.2" width="4.7" height="4.7" fill="#6ecd58"/>
<rect x="321.5" y="619.2" width="4.7" height="4.7" fill="#c4e026"/>
<rect x="325.6" y="619.2" width="4.7" height="4.7" fill="#6ecd58"/>
<rect x="329.8" y="619.2" width="4.7" height="4.7" fill="#30b27b"/>
<rect x="333.9" y="619.2" width="4.7" height="4.7" fill="#21938b"/>
<rect x="338.0" y="619.2" width="4.7" height="4.7" fill="#26848d"/>
<rect x="342.1" y="619.2" width="4.7" height="4.7" fill="#2c748e"/>
<rect x="346.2" y="619.2" width="4.7" height="4.7" fill="#32658d"/>
<rect x="350.3" y="619.2" width="4.7" height="4.7" fill="#355e8d"/>
<rect x="354.4" y="619.2" width="4.7" height="4.7" fill="#38578b"/>
<rect x="358.5" y="619.2" width="4.7" height="4.7" fill="#3c508a"/>
<rect x="362.6" y="619.2" width="4.7" height="4.7" fill="#404687"/>
<rect x="366.7" y="619.2" width="4.7" height="4.7" fill="#433a82"/>
<rect x="370.8" y="619.2" width="4.7" height="4.7" fill="#462e7b"/>
<rect x="374.9" y="619.2" width="4.7" height="4.7" fill="#472777"/>
<rect x="379.0" y="619.2" width="4.7" height="4.7" fill="#471f70"/>
<rect x="383.1" y="619.2" width="4.7" height="4.7" fill="#471769"/>
<rect x="387.2" y="619.2" width="4.7" height="4.7" fill="#461567"/>
<rect x="391.3" y="619.2" width="4.7" height="4.7" fill="#461466"/>
<rect x="395.4" y="619.2" width="4.7" height="4.7" fill="#461264"/>
<rect x="399.5" y="619.2" width="4.7" height="4.7" fill="#461264"/>
<rect x="255.9" y="623.3" width="4.7" height="4.7" fill="#471c6d"/>
<rect x="260.0" y="623.3" width="4.7" height="4.7" fill="#471c6d"/>
<rect x="264.1" y="623.3" width="4.7" height="4.7" fill="#461567"/>
<rect x="268.2" y="623.3" width="4.7" height="4.7" fill="#450e60"/>
<rect x="272.3" y="623.3" width="4.7" height="4.7" fill="#45075a"/>
<rect x="276.4" y="623.3" width="4.7" height="4.7" fill="#450e60"/>
<rect x="280.5" y="623.3" width="4.7" height="4.7" fill="#461567"/>
<rect x="284.6" y="623.3" width="4.7" height="4.7" fill="#471c6d"/>
<rect x="288.7" y="623.3" width="4.7" height="4.7" fill="#482575"/>
<rect x="292.8" y="623.3" width="4.7" height="4.7" fill="#462d7a"/>
<rect x="296.9" y="623.3" width="4.7" height="4.7" fill="#44357f"/>
<rect x="301.0" y="623.3" width="4.7" height="4.7" fill="#34618d"/>
<rect x="305.1" y="623.3" width="4.7" height="4.7" fill="#24888d"/>
<rect x="309.2" y="623.3" width="4.7" height="4.7" fill="#28ac80"/>
<rect x="313.3" y="623.3" width="4.7" height="4.7" fill="#50c369"/>
<rect x="317.4" y="623.3" width="4.7" height="4.7" fill="#8dd545"/>
<rect x="321.5" y="623.3" width="4.7" height="4.7" fill="#d2e226"/>
<rect x="325.6" y="623.3" width="4.7" height="4.7" fill="#61c960"/>
<rect x="329.8" y="623.3" width="4.7" height="4.7" fill="#22a286"/>
<rect x="333.9" y="623.3" width="4.7" height="4.7" fill="#2b768e"/>
<rect x="338.0" y="623.3" width="4.7" height="4.7" fill="#2f6e8e"/>
<rect x="342.1" y="623.3" width="4.7" height="4.7" fill="#32658d"/>
<rect x="346.2" y="623.3" width="4.7" height="4.7" fill="#365c8c"/>
<rect x="350.3" y="623.3" width="4.7" height="4.7" fill="#3a548b"/>
<rect x="354.4" y="623.3" width="4.7" height="4.7" fill="#3e4c89"/>
<rect x="358.5" y="623.3" width="4.7" height="4.7" fill="#414386"/>
<rect x="362.6" y="623.3" width="4.7" height="4.7" fill="#44367f"/>
<rect x="366.7" y="623.3" width="4.7" height="4.7" fill="#472978"/>
<rect x="370.8" y="623.3" width="4.7" height="4.7" fill="#471c6d"/>
<rect x="374.9" y="623.3" width="4.7" height="4.7" fill="#461567"/>
<rect x="379.0" y="623.3" width="4.7" height="4.7" fill="#450e60"/>
<rect x="383.1" y="623.3" width="4.7" height="4.7" fill="#45075a"/>
<rect x="387.2" y="623.3" width="4.7" height="4.7" fill="#45075a"/>
<rect x="391.3" y="623.3" width="4.7" height="4.7" fill="#45075a"/>
<rect x="395.4" y="623.3" width="4.7" height="4.7" fill="#45075a"/>
<rect x="399.5" y="623.3" width="4.7" height="4.7" fill="#45075a"/>
<rect x="255.9" y="627.4" width="4.7" height="4.7" fill="#471c6d"/>
<rect x="260.0" y="627.4" width="4.7" height="4.7" fill="#471c6d"/>
<rect x="264.1" y="627.4" width="4.7" height="4.7" fill="#461567"/>
<rect x="268.2" y="627.4" width="4.7" height="4.7" fill="#450e60"/>
<rect x="272.3" y="627.4" width="4.7" height="4.7" fill="#45075a"/>
<rect x="276.4" y="627.4" width="4.7" height="4.7" fill="#450d5f"/>
<rect x="280.5" y="627.4" width="4.7" height="4.7" fill="#461365"/>
<rect x="284.6" y="627.4" width="4.7" height="4.7" fill="#47186a"/>
<rect x="288.7" y="627.4" width="4.7" height="4.7" fill="#482475"/>
<rect x="292.8" y="627.4" width="4.7" height="4.7" fill="#462f7b"/>
<rect x="296.9" y="627.4" width="4.7" height="4.7" fill="#433a81"/>
<rect x="301.0" y="627.4" width="4.7" height="4.7" fill="#32658d"/>
<rect x="305.1" y="627.4" width="4.7" height="4.7" fill="#238c8c"/>
<rect x="309.2" y="627.4" width="4.7" height="4.7" fill="#2fb17c"/>
<rect x="313.3" y="627.4" width="4.7" height="4.7" fill="#4cc26b"/>
<rect x="317.4" y="627.4" width="4.7" height="4.7" fill="#76d054"/>
<rect x="321.5" y="627.4" width="4.7" height="4.7" fill="#a8db33"/>
<rect x="325.6" y="627.4" width="4.7" height="4.7" fill="#46c06f"/>
<rect x="329.8" y="627.4" width="4.7" height="4.7" fill="#219a89"/>
<rect x="333.9" y="627.4" width="4.7" height="4.7" fill="#2d728e"/>
<rect x="338.0" y="627.4" width="4.7" height="4.7" fill="#31688d"/>
<rect x="342.1" y="627.4" width="4.7" height="4.7" fill="#355e8d"/>
<rect x="346.2" y="627.4" width="4.7" height="4.7" fill="#3a548b"/>
<rect x="350.3" y="627.4" width="4.7" height="4.7" fill="#3e4b89"/>
<rect x="354.4" y="627.4" width="4.7" height="4.7" fill="#424185"/>
<rect x="358.5" y="627.4" width="4.7" height="4.7" fill="#44367f"/>
<rect x="362.6" y="627.4" width="4.7" height="4.7" fill="#462c79"/>
<rect x="366.7" y="627.4" width="4.7" height="4.7" fill="#482172"/>
<rect x="370.8" y="627.4" width="4.7" height="4.7" fill="#461567"/>
<rect x="374.9" y="627.4" width="4.7" height="4.7" fill="#461063"/>
<rect x="379.0" y="627.4" width="4.7" height="4.7" fill="#450c5e"/>
<rect x="383.1" y="627.4" width="4.7" height="4.7" fill="#45075a"/>
<rect x="387.2" y="627.4" width="4.7" height="4.7" fill="#45095c"/>
<rect x="391.3" y="627.4" width="4.7" height="4.7" fill="#450c5e"/>
<rect x="395.4" y="627.4" width="4.7" height="4.7" fill="#450e60"/>
<rect x="399.5" y="627.4" width="4.7" height="4.7" fill="#450e60"/>
<rect x="255.9" y="631.5" width="4.7" height="4.7" fill="#471c6d"/>
<rect x="260.0" y="631.5" width="4.7" height="4.7" fill="#471c6d"/>
<rect x="264.1" y="631.5" width="4.7" height="4.7" fill="#461567"/>
<rect x="268.2" y="631.5" width="4.7" height="4.7" fill="#450e60"/>
<rect x="272.3" y="631.5" width="4.7" height="4.7" fill="#45075a"/>
<rect x="276.4" y="631.5" width="4.7" height="4.7" fill="#450c5e"/>
<rect x="280.5" y="631.5" width="4.7" height="4.7" fill="#461062"/>
<rect x="284.6" y="631.5" width="4.7" height="4.7" fill="#461466"/>
<rect x="288.7" y="631.5" width="4.7" height="4.7" fill="#482374"/>
<rect x="292.8" y="631.5" width="4.7" height="4.7" fill="#45317c"/>
<rect x="296.9" y="631.5" width="4.7" height="4.7" fill="#423e84"/>
<rect x="301.0" y="631.5" width="4.7" height="4.7" fill="#30698d"/>
<rect x="305.1" y="631.5" width="4.7" height="4.7" fill="#21918c"/>
<rect x="309.2" y="631.5" width="4.7" height="4.7" fill="#36b578"/>
<rect x="313.3" y="631.5" width="4.7" height="4.7" fill="#48c06e"/>
<rect x="317.4" y="631.5" width="4.7" height="4.7" fill="#62c95f"/>
<rect x="321.5" y="631.5" width="4.7" height="4.7" fill="#7dd24f"/>
<rect x="325.6" y="631.5" width="4.7" height="4.7" fill="#35b579"/>
<rect x="329.8" y="631.5" width="4.7" height="4.7" fill="#21928b"/>
<rect x="333.9" y="631.5" width="4.7" height="4.7" fill="#2f6d8e"/>
<rect x="338.0" y="631.5" width="4.7" height="4.7" fill="#33638d"/>
<rect x="342.1" y="631.5" width="4.7" height="4.7" fill="#38578b"/>
<rect x="346.2" y="631.5" width="4.7" height="4.7" fill="#3e4c89"/>
<rect x="350.3" y="631.5" width="4.7" height="4.7" fill="#424185"/>
<rect x="354.4" y="631.5" width="4.7" height="4.7" fill="#44357f"/>
<rect x="358.5" y="631.5" width="4.7" height="4.7" fill="#472978"/>
<rect x="362.6" y="631.5" width="4.7" height="4.7" fill="#482172"/>
<rect x="366.7" y="631.5" width="4.7" height="4.7" fill="#471769"/>
<rect x="370.8" y="631.5" width="4.7" height="4.7" fill="#450e60"/>
<rect x="374.9" y="631.5" width="4.7" height="4.7" fill="#450c5e"/>
<rect x="379.0" y="631.5" width="4.7" height="4.7" fill="#45095c"/>
<rect x="383.1" y="631.5" width="4.7" height="4.7" fill="#45075a"/>
<rect x="387.2" y="631.5" width="4.7" height="4.7" fill="#450c5e"/>
<rect x="391.3" y="631.5" width="4.7" height="4.7" fill="#461063"/>
<rect x="395.4" y="631.5" width="4.7" height="4.7" fill="#461567"/>
<rect x="399.5" y="631.5" width="4.7" height="4.7" fill="#461567"/>
<rect x="255.9" y="635.6" width="4.7" height="4.7" fill="#471c6d"/>
<rect x="260.0" y="635.6" width="4.7" height="4.7" fill="#471c6d"/>
<rect x="264.1" y="635.6" width="4.7" height="4.7" fill="#461567"/>
<rect x="268.2" y="635.6" width="4.7" height="4.7" fill="#450e60"/>
<rect x="272.3" y="635.6" width="4.7" height="4.7" fill="#45075a"/>
<rect x="276.4" y="635.6" width="4.7" height="4.7" fill="#450a5d"/>
<rect x="280.5" y="635.6" width="4.7" height="4.7" fill="#450d60"/>
<rect x="284.6" y="635.6" width="4.7" height="4.7" fill="#461163"/>
<rect x="288.7" y="635.6" width="4.7" height="4.7" fill="#482273"/>
<rect x="292.8" y="635.6" width="4.7" height="4.7" fill="#45337d"/>
<rect x="296.9" y="635.6" width="4.7" height="4.7" fill="#414386"/>
<rect x="301.0" y="635.6" width="4.7" height="4.7" fill="#2f6d8e"/>
<rect x="305.1" y="635.6" width="4.7" height="4.7" fill="#21958b"/>
<rect x="309.2" y="635.6" width="4.7" height="4.7" fill="#3dba74"/>
<rect x="313.3" y="635.6" width="4.7" height="4.7" fill="#44bf70"/>
<rect x="317.4" y="635.6" width="4.7" height="4.7" fill="#4ec26a"/>
<rect x="321.5" y="635.6" width="4.7" height="4.7" fill="#5ac664"/>
<rect x="325.6" y="635.6" width="4.7" height="4.7" fill="#24aa83"/>
<rect x="329.8" y="635.6" width="4.7" height="4.7" fill="#238a8d"/>
<rect x="333.9" y="635.6" width="4.7" height="4.7" fill="#31698d"/>
<rect x="338.0" y="635.6" width="4.7" height="4.7" fill="#365d8d"/>
<rect x="342.1" y="635.6" width="4.7" height="4.7" fill="#3c508a"/>
<rect x="346.2" y="635.6" width="4.7" height="4.7" fill="#414386"/>
<rect x="350.3" y="635.6" width="4.7" height="4.7" fill="#44367f"/>
<rect x="354.4" y="635.6" width="4.7" height="4.7" fill="#472978"/>
<rect x="358.5" y="635.6" width="4.7" height="4.7" fill="#471c6d"/>
<rect x="362.6" y="635.6" width="4.7" height="4.7" fill="#461567"/>
<rect x="366.7" y="635.6" width="4.7" height="4.7" fill="#450e60"/>
<rect x="370.8" y="635.6" width="4.7" height="4.7" fill="#45075a"/>
<rect x="374.9" y="635.6" width="4.7" height="4.7" fill="#45075a"/>
<rect x="379.0" y="635.6" width="4.7" height="4.7" fill="#45075a"/>
<rect x="383.1" y="635.6" width="4.7" height="4.7" fill="#45075a"/>
<rect x="387.2" y="635.6" width="4.7" height="4.7" fill="#450e60"/>
<rect x="391.3" y="635.6" width="4.7" height="4.7" fill="#461567"/>
<rect x="395.4" y="635.6" width="4.7" height="4.7" fill="#471c6d"/>
<rect x="399.5" y="635.6" width="4.7" height="4.7" fill="#471c6d"/>
<rect x="255.9" y="639.7" width="4.7" height="4.7" fill="#482072"/>
<rect x="260.0" y="639.7" width="4.7" height="4.7" fill="#482072"/>
<rect x="264.1" y="639.7" width="4.7" height="4.7" fill="#47196b"/>
<rect x="268.2" y="639.7" width="4.7" height="4.7" fill="#461264"/>
<rect x="272.3" y="639.7" width="4.7" height="4.7" fill="#450a5d"/>
<rect x="276.4" y="639.7" width="4.7" height="4.7" fill="#450e60"/>
<rect x="280.5" y="639.7" width="4.7" height="4.7" fill="#461163"/>
<rect x="284.6" y="639.7" width="4.7" height="4.7" fill="#461466"/>
<rect x="288.7" y="639.7" width="4.7" height="4.7" fill="#482374"/>
<rect x="292.8" y="639.7" width="4.7" height="4.7" fill="#45317c"/>
<rect x="296.9" y="639.7" width="4.7" height="4.7" fill="#423e84"/>
<rect x="301.0" y="639.7" width="4.7" height="4.7" fill="#34608d"/>
<rect x="305.1" y="639.7" width="4.7" height="4.7" fill="#287f8d"/>
<rect x="309.2" y="639.7" width="4.7" height="4.7" fill="#219c88"/>
<rect x="313.3" y="639.7" width="4.7" height="4.7" fill="#22a187"/>
<rect x="317.4" y="639.7" width="4.7" height="4.7" fill="#22a585"/>
<rect x="321.5" y="639.7" width="4.7" height="4.7" fill="#24aa83"/>
<rect x="325.6" y="639.7" width="4.7" height="4.7" fill="#21948b"/>
<rect x="329.8" y="639.7" width="4.7" height="4.7" fill="#287c8e"/>
<rect x="333.9" y="639.7" width="4.7" height="4.7" fill="#32658d"/>
<rect x="338.0" y="639.7" width="4.7" height="4.7" fill="#375a8c"/>
<rect x="342.1" y="639.7" width="4.7" height="4.7" fill="#3c4f89"/>
<rect x="346.2" y="639.7" width="4.7" height="4.7" fill="#414386"/>
<rect x="350.3" y="639.7" width="4.7" height="4.7" fill="#44357f"/>
<rect x="354.4" y="639.7" width="4.7" height="4.7" fill="#472777"/>
<rect x="358.5" y="639.7" width="4.7" height="4.7" fill="#47186a"/>
<rect x="362.6" y="639.7" width="4.7" height="4.7" fill="#461365"/>
<rect x="366.7" y="639.7" width="4.7" height="4.7" fill="#450d5f"/>
<rect x="370.8" y="639.7" width="4.7" height="4.7" fill="#45075a"/>
<rect x="374.9" y="639.7" width="4.7" height="4.7" fill="#45085b"/>
<rect x="379.0" y="639.7" width="4.7" height="4.7" fill="#45095c"/>
<rect x="383.1" y="639.7" width="4.7" height="4.7" fill="#450a5d"/>
<rect x="387.2" y="639.7" width="4.7" height="4.7" fill="#461264"/>
<rect x="391.3" y="639.7" width="4.7" height="4.7" fill="#47196b"/>
<rect x="395.4" y="639.7" width="4.7" height="4.7" fill="#482072"/>
<rect x="399.5" y="639.7" width="4.7" height="4.7" fill="#482072"/>
<rect x="255.9" y="643.8" width="4.7" height="4.7" fill="#482575"/>
<rect x="260.0" y="643.8" width="4.7" height="4.7" fill="#482575"/>
<rect x="264.1" y="643.8" width="4.7" height="4.7" fill="#471d6e"/>
<rect x="268.2" y="643.8" width="4.7" height="4.7" fill="#461567"/>
<rect x="272.3" y="643.8" width="4.7" height="4.7" fill="#450d60"/>
<rect x="276.4" y="643.8" width="4.7" height="4.7" fill="#461163"/>
<rect x="280.5" y="643.8" width="4.7" height="4.7" fill="#461567"/>
<rect x="284.6" y="643.8" width="4.7" height="4.7" fill="#47186a"/>
<rect x="288.7" y="643.8" width="4.7" height="4.7" fill="#482475"/>
<rect x="292.8" y="643.8" width="4.7" height="4.7" fill="#462f7b"/>
<rect x="296.9" y="643.8" width="4.7" height="4.7" fill="#433a81"/>
<rect x="301.0" y="643.8" width="4.7" height="4.7" fill="#3b528a"/>
<rect x="305.1" y="643.8" width="4.7" height="4.7" fill="#31688d"/>
<rect x="309.2" y="643.8" width="4.7" height="4.7" fill="#287d8e"/>
<rect x="313.3" y="643.8" width="4.7" height="4.7" fill="#27818d"/>
<rect x="317.4" y="643.8" width="4.7" height="4.7" fill="#25868d"/>
<rect x="321.5" y="643.8" width="4.7" height="4.7" fill="#238a8d"/>
<rect x="325.6" y="643.8" width="4.7" height="4.7" fill="#287c8e"/>
<rect x="329.8" y="643.8" width="4.7" height="4.7" fill="#2e6f8e"/>
<rect x="333.9" y="643.8" width="4.7" height="4.7" fill="#34618d"/>
<rect x="338.0" y="643.8" width="4.7" height="4.7" fill="#39578b"/>
<rect x="342.1" y="643.8" width="4.7" height="4.7" fill="#3d4d89"/>
<rect x="346.2" y="643.8" width="4.7" height="4.7" fill="#414386"/>
<rect x="350.3" y="643.8" width="4.7" height="4.7" fill="#45347e"/>
<rect x="354.4" y="643.8" width="4.7" height="4.7" fill="#482575"/>
<rect x="358.5" y="643.8" width="4.7" height="4.7" fill="#461466"/>
<rect x="362.6" y="643.8" width="4.7" height="4.7" fill="#461062"/>
<rect x="366.7" y="643.8" width="4.7" height="4.7" fill="#450c5e"/>
<rect x="370.8" y="643.8" width="4.7" height="4.7" fill="#45075a"/>
<rect x="374.9" y="643.8" width="4.7" height="4.7" fill="#45095c"/>
<rect x="379.0" y="643.8" width="4.7" height="4.7" fill="#450b5e"/>
<rect x="383.1" y="643.8" width="4.7" height="4.7" fill="#450d60"/>
<rect x="387.2" y="643.8" width="4.7" height="4.7" fill="#461567"/>
<rect x="391.3" y="643.8" width="4.7" height="4.7" fill="#471d6e"/>
<rect x="395.4" y="643.8" width="4.7" height="4.7" fill="#482575"/>
<rect x="399.5" y="643.8" width="4.7" height="4.7" fill="#482575"/>
<rect x="255.9" y="647.9" width="4.7" height="4.7" fill="#472877"/>
<rect x="260.0" y="647.9" width="4.7" height="4.7" fill="#472877"/>
<rect x="264.1" y="647.9" width="4.7" height="4.7" fill="#482172"/>
<rect x="268.2" y="647.9" width="4.7" height="4.7" fill="#47196a"/>
<rect x="272.3" y="647.9" width="4.7" height="4.7" fill="#461163"/>
<rect x="276.4" y="647.9" width="4.7" height="4.7" fill="#461466"/>
<rect x="280.5" y="647.9" width="4.7" height="4.7" fill="#47186a"/>
<rect x="284.6" y="647.9" width="4.7" height="4.7" fill="#471c6d"/>
<rect x="288.7" y="647.9" width="4.7" height="4.7" fill="#482575"/>
<rect x="292.8" y="647.9" width="4.7" height="4.7" fill="#462d7a"/>
<rect x="296.9" y="647.9" width="4.7" height="4.7" fill="#44357f"/>
<rect x="301.0" y="647.9" width="4.7" height="4.7" fill="#414487"/>
<rect x="305.1" y="647.9" width="4.7" height="4.7" fill="#3c508a"/>
<rect x="309.2" y="647.9" width="4.7" height="4.7" fill="#365c8c"/>
<rect x="313.3" y="647.9" width="4.7" height="4.7" fill="#34618d"/>
<rect x="317.4" y="647.9" width="4.7" height="4.7" fill="#32658d"/>
<rect x="321.5" y="647.9" width="4.7" height="4.7" fill="#31698d"/>
<rect x="325.6" y="647.9" width="4.7" height="4.7" fill="#32658d"/>
<rect x="329.8" y="647.9" width="4.7" height="4.7" fill="#34618d"/>
<rect x="333.9" y="647.9" width="4.7" height="4.7" fill="#365c8c"/>
<rect x="338.0" y="647.9" width="4.7" height="4.7" fill="#3a548b"/>
<rect x="342.1" y="647.9" width="4.7" height="4.7" fill="#3e4c89"/>
<rect x="346.2" y="647.9" width="4.7" height="4.7" fill="#414386"/>
<rect x="350.3" y="647.9" width="4.7" height="4.7" fill="#45337d"/>
<rect x="354.4" y="647.9" width="4.7" height="4.7" fill="#482273"/>
<rect x="358.5" y="647.9" width="4.7" height="4.7" fill="#461163"/>
<rect x="362.6" y="647.9" width="4.7" height="4.7" fill="#450d60"/>
<rect x="366.7" y="647.9" width="4.7" height="4.7" fill="#450a5d"/>
<rect x="370.8" y="647.9" width="4.7" height="4.7" fill="#45075a"/>
<rect x="374.9" y="647.9" width="4.7" height="4.7" fill="#450a5d"/>
<rect x="379.0" y="647.9" width="4.7" height="4.7" fill="#450d60"/>
<rect x="383.1" y="647.9" width="4.7" height="4.7" fill="#461163"/>
<rect x="387.2" y="647.9" width="4.7" height="4.7" fill="#47196a"/>
<rect x="391.3" y="647.9" width="4.7" height="4.7" fill="#482172"/>
<rect x="395.4" y="647.9" width="4.7" height="4.7" fill="#472877"/>
<rect x="399.5" y="647.9" width="4.7" height="4.7" fill="#472877"/>
<rect x="255.9" y="652.0" width="4.7" height="4.7" fill="#44367f"/>
<rect x="260.0" y="652.0" width="4.7" height="4.7" fill="#44367f"/>
<rect x="264.1" y="652.0" width="4.7" height="4.7" fill="#462e7b"/>
<rect x="268.2" y="652.0" width="4.7" height="4.7" fill="#482676"/>
<rect x="272.3" y="652.0" width="4.7" height="4.7" fill="#471d6f"/>
<rect x="276.4" y="652.0" width="4.7" height="4.7" fill="#471c6d"/>
<rect x="280.5" y="652.0" width="4.7" height="4.7" fill="#471a6c"/>
<rect x="284.6" y="652.0" width="4.7" height="4.7" fill="#47186a"/>
<rect x="288.7" y="652.0" width="4.7" height="4.7" fill="#482172"/>
<rect x="292.8" y="652.0" width="4.7" height="4.7" fill="#472978"/>
<rect x="296.9" y="652.0" width="4.7" height="4.7" fill="#45317c"/>
<rect x="301.0" y="652.0" width="4.7" height="4.7" fill="#423e83"/>
<rect x="305.1" y="652.0" width="4.7" height="4.7" fill="#3f4988"/>
<rect x="309.2" y="652.0" width="4.7" height="4.7" fill="#3a548b"/>
<rect x="313.3" y="652.0" width="4.7" height="4.7" fill="#38588c"/>
<rect x="317.4" y="652.0" width="4.7" height="4.7" fill="#365d8c"/>
<rect x="321.5" y="652.0" width="4.7" height="4.7" fill="#34618d"/>
<rect x="325.6" y="652.0" width="4.7" height="4.7" fill="#355f8d"/>
<rect x="329.8" y="652.0" width="4.7" height="4.7" fill="#355e8d"/>
<rect x="333.9" y="652.0" width="4.7" height="4.7" fill="#365c8c"/>
<rect x="338.0" y="652.0" width="4.7" height="4.7" fill="#3a548b"/>
<rect x="342.1" y="652.0" width="4.7" height="4.7" fill="#3e4c89"/>
<rect x="346.2" y="652.0" width="4.7" height="4.7" fill="#414386"/>
<rect x="350.3" y="652.0" width="4.7" height="4.7" fill="#44357f"/>
<rect x="354.4" y="652.0" width="4.7" height="4.7" fill="#472777"/>
<rect x="358.5" y="652.0" width="4.7" height="4.7" fill="#47196a"/>
<rect x="362.6" y="652.0" width="4.7" height="4.7" fill="#461466"/>
<rect x="366.7" y="652.0" width="4.7" height="4.7" fill="#460f61"/>
<rect x="370.8" y="652.0" width="4.7" height="4.7" fill="#450a5d"/>
<rect x="374.9" y="652.0" width="4.7" height="4.7" fill="#450e60"/>
<rect x="379.0" y="652.0" width="4.7" height="4.7" fill="#461163"/>
<rect x="383.1" y="652.0" width="4.7" height="4.7" fill="#461466"/>
<rect x="387.2" y="652.0" width="4.7" height="4.7" fill="#471b6d"/>
<rect x="391.3" y="652.0" width="4.7" height="4.7" fill="#482273"/>
<rect x="395.4" y="652.0" width="4.7" height="4.7" fill="#472877"/>
<rect x="399.5" y="652.0" width="4.7" height="4.7" fill="#472877"/>
<rect x="255.9" y="656.1" width="4.7" height="4.7" fill="#414487"/>
<rect x="260.0" y="656.1" width="4.7" height="4.7" fill="#414487"/>
<rect x="264.1" y="656.1" width="4.7" height="4.7" fill="#433b82"/>
<rect x="268.2" y="656.1" width="4.7" height="4.7" fill="#45327d"/>
<rect x="272.3" y="656.1" width="4.7" height="4.7" fill="#472a78"/>
<rect x="276.4" y="656.1" width="4.7" height="4.7" fill="#482374"/>
<rect x="280.5" y="656.1" width="4.7" height="4.7" fill="#471c6d"/>
<rect x="284.6" y="656.1" width="4.7" height="4.7" fill="#461466"/>
<rect x="288.7" y="656.1" width="4.7" height="4.7" fill="#471d6e"/>
<rect x="292.8" y="656.1" width="4.7" height="4.7" fill="#482576"/>
<rect x="296.9" y="656.1" width="4.7" height="4.7" fill="#462d7a"/>
<rect x="301.0" y="656.1" width="4.7" height="4.7" fill="#443780"/>
<rect x="305.1" y="656.1" width="4.7" height="4.7" fill="#414286"/>
<rect x="309.2" y="656.1" width="4.7" height="4.7" fill="#3e4c89"/>
<rect x="313.3" y="656.1" width="4.7" height="4.7" fill="#3c508a"/>
<rect x="317.4" y="656.1" width="4.7" height="4.7" fill="#3a548b"/>
<rect x="321.5" y="656.1" width="4.7" height="4.7" fill="#38588c"/>
<rect x="325.6" y="656.1" width="4.7" height="4.7" fill="#375a8c"/>
<rect x="329.8" y="656.1" width="4.7" height="4.7" fill="#375b8c"/>
<rect x="333.9" y="656.1" width="4.7" height="4.7" fill="#365c8c"/>
<rect x="338.0" y="656.1" width="4.7" height="4.7" fill="#3a548b"/>
<rect x="342.1" y="656.1" width="4.7" height="4.7" fill="#3e4c89"/>
<rect x="346.2" y="656.1" width="4.7" height="4.7" fill="#414386"/>
<rect x="350.3" y="656.1" width="4.7" height="4.7" fill="#443880"/>
<rect x="354.4" y="656.1" width="4.7" height="4.7" fill="#462c7a"/>
<rect x="358.5" y="656.1" width="4.7" height="4.7" fill="#482172"/>
<rect x="362.6" y="656.1" width="4.7" height="4.7" fill="#471a6c"/>
<rect x="366.7" y="656.1" width="4.7" height="4.7" fill="#461466"/>
<rect x="370.8" y="656.1" width="4.7" height="4.7" fill="#450d60"/>
<rect x="374.9" y="656.1" width="4.7" height="4.7" fill="#461163"/>
<rect x="379.0" y="656.1" width="4.7" height="4.7" fill="#461567"/>
<rect x="383.1" y="656.1" width="4.7" height="4.7" fill="#47186a"/>
<rect x="387.2" y="656.1" width="4.7" height="4.7" fill="#471e6f"/>
<rect x="391.3" y="656.1" width="4.7" height="4.7" fill="#482374"/>
<rect x="395.4" y="656.1" width="4.7" height="4.7" fill="#472877"/>
<rect x="399.5" y="656.1" width="4.7" height="4.7" fill="#472877"/>
<rect x="255.9" y="660.2" width="4.7" height="4.7" fill="#3c4f8a"/>
<rect x="260.0" y="660.2" width="4.7" height="4.7" fill="#3c4f8a"/>
<rect x="264.1" y="660.2" width="4.7" height="4.7" fill="#3f4788"/>
<rect x="268.2" y="660.2" width="4.7" height="4.7" fill="#423f84"/>
<rect x="272.3" y="660.2" width="4.7" height="4.7" fill="#44357f"/>
<rect x="276.4" y="660.2" width="4.7" height="4.7" fill="#472a78"/>
<rect x="280.5" y="660.2" width="4.7" height="4.7" fill="#471d6f"/>
<rect x="284.6" y="660.2" width="4.7" height="4.7" fill="#461163"/>
<rect x="288.7" y="660.2" width="4.7" height="4.7" fill="#47196a"/>
<rect x="292.8" y="660.2" width="4.7" height="4.7" fill="#482172"/>
<rect x="296.9" y="660.2" width="4.7" height="4.7" fill="#472877"/>
<rect x="301.0" y="660.2" width="4.7" height="4.7" fill="#45317c"/>
<rect x="305.1" y="660.2" width="4.7" height="4.7" fill="#433a81"/>
<rect x="309.2" y="660.2" width="4.7" height="4.7" fill="#414386"/>
<rect x="313.3" y="660.2" width="4.7" height="4.7" fill="#404788"/>
<rect x="317.4" y="660.2" width="4.7" height="4.7" fill="#3e4b89"/>
<rect x="321.5" y="660.2" width="4.7" height="4.7" fill="#3c4f8a"/>
<rect x="325.6" y="660.2" width="4.7" height="4.7" fill="#3a548b"/>
<rect x="329.8" y="660.2" width="4.7" height="4.7" fill="#38588b"/>
<rect x="333.9" y="660.2" width="4.7" height="4.7" fill="#365c8c"/>
<rect x="338.0" y="660.2" width="4.7" height="4.7" fill="#3a548b"/>
<rect x="342.1" y="660.2" width="4.7" height="4.7" fill="#3e4c89"/>
<rect x="346.2" y="660.2" width="4.7" height="4.7" fill="#414386"/>
<rect x="350.3" y="660.2" width="4.7" height="4.7" fill="#433a81"/>
<rect x="354.4" y="660.2" width="4.7" height="4.7" fill="#45317c"/>
<rect x="358.5" y="660.2" width="4.7" height="4.7" fill="#472877"/>
<rect x="362.6" y="660.2" width="4.7" height="4.7" fill="#482172"/>
<rect x="366.7" y="660.2" width="4.7" height="4.7" fill="#47196a"/>
<rect x="370.8" y="660.2" width="4.7" height="4.7" fill="#461163"/>
<rect x="374.9" y="660.2" width="4.7" height="4.7" fill="#461466"/>
<rect x="379.0" y="660.2" width="4.7" height="4.7" fill="#47186a"/>
<rect x="383.1" y="660.2" width="4.7" height="4.7" fill="#471c6d"/>
<rect x="387.2" y="660.2" width="4.7" height="4.7" fill="#482072"/>
<rect x="391.3" y="660.2" width="4.7" height="4.7" fill="#482575"/>
<rect x="395.4" y="660.2" width="4.7" height="4.7" fill="#472877"/>
<rect x="399.5" y="660.2" width="4.7" height="4.7" fill="#472877"/>
<rect x="255.9" y="664.3" width="4.7" height="4.7" fill="#38588c"/>
<rect x="260.0" y="664.3" width="4.7" height="4.7" fill="#38588c"/>
<rect x="264.1" y="664.3" width="4.7" height="4.7" fill="#3c508a"/>
<rect x="268.2" y="664.3" width="4.7" height="4.7" fill="#3f4888"/>
<rect x="272.3" y="664.3" width="4.7" height="4.7" fill="#423f84"/>
<rect x="276.4" y="664.3" width="4.7" height="4.7" fill="#45307c"/>
<rect x="280.5" y="664.3" width="4.7" height="4.7" fill="#482172"/>
<rect x="284.6" y="664.3" width="4.7" height="4.7" fill="#461163"/>
<rect x="288.7" y="664.3" width="4.7" height="4.7" fill="#47196a"/>
<rect x="292.8" y="664.3" width="4.7" height="4.7" fill="#482172"/>
<rect x="296.9" y="664.3" width="4.7" height="4.7" fill="#472877"/>
<rect x="301.0" y="664.3" width="4.7" height="4.7" fill="#45317c"/>
<rect x="305.1" y="664.3" width="4.7" height="4.7" fill="#433a81"/>
<rect x="309.2" y="664.3" width="4.7" height="4.7" fill="#414386"/>
<rect x="313.3" y="664.3" width="4.7" height="4.7" fill="#404788"/>
<rect x="317.4" y="664.3" width="4.7" height="4.7" fill="#3e4b89"/>
<rect x="321.5" y="664.3" width="4.7" height="4.7" fill="#3c4f8a"/>
<rect x="325.6" y="664.3" width="4.7" height="4.7" fill="#3b528a"/>
<rect x="329.8" y="664.3" width="4.7" height="4.7" fill="#39558b"/>
<rect x="333.9" y="664.3" width="4.7" height="4.7" fill="#38588b"/>
<rect x="338.0" y="664.3" width="4.7" height="4.7" fill="#3b518a"/>
<rect x="342.1" y="664.3" width="4.7" height="4.7" fill="#3e4a88"/>
<rect x="346.2" y="664.3" width="4.7" height="4.7" fill="#414386"/>
<rect x="350.3" y="664.3" width="4.7" height="4.7" fill="#433a81"/>
<rect x="354.4" y="664.3" width="4.7" height="4.7" fill="#45317c"/>
<rect x="358.5" y="664.3" width="4.7" height="4.7" fill="#472877"/>
<rect x="362.6" y="664.3" width="4.7" height="4.7" fill="#482273"/>
<rect x="366.7" y="664.3" width="4.7" height="4.7" fill="#471b6d"/>
<rect x="370.8" y="664.3" width="4.7" height="4.7" fill="#461466"/>
<rect x="374.9" y="664.3" width="4.7" height="4.7" fill="#47186a"/>
<rect x="379.0" y="664.3" width="4.7" height="4.7" fill="#471c6e"/>
<rect x="383.1" y="664.3" width="4.7" height="4.7" fill="#482072"/>
<rect x="387.2" y="664.3" width="4.7" height="4.7" fill="#482374"/>
<rect x="391.3" y="664.3" width="4.7" height="4.7" fill="#482676"/>
<rect x="395.4" y="664.3" width="4.7" height="4.7" fill="#472877"/>
<rect x="399.5" y="664.3" width="4.7" height="4.7" fill="#472877"/>
<rect x="255.9" y="668.4" width="4.7" height="4.7" fill="#34618d"/>
<rect x="260.0" y="668.4" width="4.7" height="4.7" fill="#34618d"/>
<rect x="264.1" y="668.4" width="4.7" height="4.7" fill="#38598c"/>
<rect x="268.2" y="668.4" width="4.7" height="4.7" fill="#3c508a"/>
<rect x="272.3" y="668.4" width="4.7" height="4.7" fill="#3f4788"/>
<rect x="276.4" y="668.4" width="4.7" height="4.7" fill="#44367f"/>
<rect x="280.5" y="668.4" width="4.7" height="4.7" fill="#482475"/>
<rect x="284.6" y="668.4" width="4.7" height="4.7" fill="#461163"/>
<rect x="288.7" y="668.4" width="4.7" height="4.7" fill="#47196a"/>
<rect x="292.8" y="668.4" width="4.7" height="4.7" fill="#482172"/>
<rect x="296.9" y="668.4" width="4.7" height="4.7" fill="#472877"/>
<rect x="301.0" y="668.4" width="4.7" height="4.7" fill="#45317c"/>
<rect x="305.1" y="668.4" width="4.7" height="4.7" fill="#433a81"/>
<rect x="309.2" y="668.4" width="4.7" height="4.7" fill="#414386"/>
<rect x="313.3" y="668.4" width="4.7" height="4.7" fill="#404788"/>
<rect x="317.4" y="668.4" width="4.7" height="4.7" fill="#3e4b89"/>
<rect x="321.5" y="668.4" width="4.7" height="4.7" fill="#3c4f8a"/>
<rect x="325.6" y="668.4" width="4.7" height="4.7" fill="#3b518a"/>
<rect x="329.8" y="668.4" width="4.7" height="4.7" fill="#3b528a"/>
<rect x="333.9" y="668.4" width="4.7" height="4.7" fill="#3a548b"/>
<rect x="338.0" y="668.4" width="4.7" height="4.7" fill="#3c4e89"/>
<rect x="342.1" y="668.4" width="4.7" height="4.7" fill="#3f4988"/>
<rect x="346.2" y="668.4" width="4.7" height="4.7" fill="#414386"/>
<rect x="350.3" y="668.4" width="4.7" height="4.7" fill="#433a81"/>
<rect x="354.4" y="668.4" width="4.7" height="4.7" fill="#45317c"/>
<rect x="358.5" y="668.4" width="4.7" height="4.7" fill="#472877"/>
<rect x="362.6" y="668.4" width="4.7" height="4.7" fill="#482374"/>
<rect x="366.7" y="668.4" width="4.7" height="4.7" fill="#471e6f"/>
<rect x="370.8" y="668.4" width="4.7" height="4.7" fill="#47186a"/>
<rect x="374.9" y="668.4" width="4.7" height="4.7" fill="#471c6e"/>
<rect x="379.0" y="668.4" width="4.7" height="4.7" fill="#482072"/>
<rect x="383.1" y="668.4" width="4.7" height="4.7" fill="#482575"/>
<rect x="387.2" y="668.4" width="4.7" height="4.7" fill="#482676"/>
<rect x="391.3" y="668.4" width="4.7" height="4.7" fill="#472777"/>
<rect x="395.4" y="668.4" width="4.7" height="4.7" fill="#472877"/>
<rect x="399.5" y="668.4" width="4.7" height="4.7" fill="#472877"/>
<rect x="255.9" y="672.5" width="4.7" height="4.7" fill="#31698d"/>
<rect x="260.0" y="672.5" width="4.7" height="4.7" fill="#31698d"/>
<rect x="264.1" y="672.5" width="4.7" height="4.7" fill="#34618d"/>
<rect x="268.2" y="672.5" width="4.7" height="4.7" fill="#38588c"/>
<rect x="272.3" y="672.5" width="4.7" height="4.7" fill="#3c4f8a"/>
<rect x="276.4" y="672.5" width="4.7" height="4.7" fill="#433c83"/>
<rect x="280.5" y="672.5" width="4.7" height="4.7" fill="#472777"/>
<rect x="284.6" y="672.5" width="4.7" height="4.7" fill="#461163"/>
<rect x="288.7" y="672.5" width="4.7" height="4.7" fill="#47196a"/>
<rect x="292.8" y="672.5" width="4.7" height="4.7" fill="#482172"/>
<rect x="296.9" y="672.5" width="4.7" height="4.7" fill="#472877"/>
<rect x="301.0" y="672.5" width="4.7" height="4.7" fill="#45317c"/>
<rect x="305.1" y="672.5" width="4.7" height="4.7" fill="#433a81"/>
<rect x="309.2" y="672.5" width="4.7" height="4.7" fill="#414386"/>
<rect x="313.3" y="672.5" width="4.7" height="4.7" fill="#404788"/>
<rect x="317.4" y="672.5" width="4.7" height="4.7" fill="#3e4b89"/>
<rect x="321.5" y="672.5" width="4.7" height="4.7" fill="#3c4f8a"/>
<rect x="325.6" y="672.5" width="4.7" height="4.7" fill="#3c4f8a"/>
<rect x="329.8" y="672.5" width="4.7" height="4.7" fill="#3c4f8a"/>
<rect x="333.9" y="672.5" width="4.7" height="4.7" fill="#3c4f8a"/>
<rect x="338.0" y="672.5" width="4.7" height="4.7" fill="#3e4b89"/>
<rect x="342.1" y="672.5" width="4.7" height="4.7" fill="#404788"/>
<rect x="346.2" y="672.5" width="4.7" height="4.7" fill="#414386"/>
<rect x="350.3" y="672.5" width="4.7" height="4.7" fill="#433a81"/>
<rect x="354.4" y="672.5" width="4.7" height="4.7" fill="#45317c"/>
<rect x="358.5" y="672.5" width="4.7" height="4.7" fill="#472877"/>
<rect x="362.6" y="672.5" width="4.7" height="4.7" fill="#482575"/>
<rect x="366.7" y="672.5" width="4.7" height="4.7" fill="#482072"/>
<rect x="370.8" y="672.5" width="4.7" height="4.7" fill="#471c6d"/>
<rect x="374.9" y="672.5" width="4.7" height="4.7" fill="#482072"/>
<rect x="379.0" y="672.5" width="4.7" height="4.7" fill="#482575"/>
<rect x="383.1" y="672.5" width="4.7" height="4.7" fill="#472877"/>
<rect x="387.2" y="672.5" width="4.7" height="4.7" fill="#472877"/>
<rect x="391.3" y="672.5" width="4.7" height="4.7" fill="#472877"/>
<rect x="395.4" y="672.5" width="4.7" height="4.7" fill="#472877"/>
<rect x="399.5" y="672.5" width="4.7" height="4.7" fill="#472877"/>
<rect x="255.9" y="676.6" width="4.7" height="4.7" fill="#31698d"/>
<rect x="260.0" y="676.6" width="4.7" height="4.7" fill="#31698d"/>
<rect x="264.1" y="676.6" width="4.7" height="4.7" fill="#34618d"/>
<rect x="268.2" y="676.6" width="4.7" height="4.7" fill="#38588c"/>
<rect x="272.3" y="676.6" width="4.7" height="4.7" fill="#3c4f8a"/>
<rect x="276.4" y="676.6" width="4.7" height="4.7" fill="#433c83"/>
<rect x="280.5" y="676.6" width="4.7" height="4.7" fill="#472777"/>
<rect x="284.6" y="676.6" width="4.7" height="4.7" fill="#461163"/>
<rect x="288.7" y="676.6" width="4.7" height="4.7" fill="#47196a"/>
<rect x="292.8" y="676.6" width="4.7" height="4.7" fill="#482172"/>
<rect x="296.9" y="676.6" width="4.7" height="4.7" fill="#472877"/>
<rect x="301.0" y="676.6" width="4.7" height="4.7" fill="#45317c"/>
<rect x="305.1" y="676.6" width="4.7" height="4.7" fill="#433a81"/>
<rect x="309.2" y="676.6" width="4.7" height="4.7" fill="#414386"/>
<rect x="313.3" y="676.6" width="4.7" height="4.7" fill="#404788"/>
<rect x="317.4" y="676.6" width="4.7" height="4.7" fill="#3e4b89"/>
<rect x="321.5" y="676.6" width="4.7" height="4.7" fill="#3c4f8a"/>
<rect x="325.6" y="676.6" width="4.7" height="4.7" fill="#3c4f8a"/>
<rect x="329.8" y="676.6" width="4.7" height="4.7" fill="#3c4f8a"/>
<rect x="333.9" y="676.6" width="4.7" height="4.7" fill="#3c4f8a"/>
<rect x="338.0" y="676.6" width="4.7" height="4.7" fill="#3e4b89"/>
<rect x="342.1" y="676.6" width="4.7" height="4.7" fill="#404788"/>
<rect x="346.2" y="676.6" width="4.7" height="4.7" fill="#414386"/>
<rect x="350.3" y="676.6" width="4.7" height="4.7" fill="#433a81"/>
<rect x="354.4" y="676.6" width="4.7" height="4.7" fill="#45317c"/>
<rect x="358.5" y="676.6" width="4.7" height="4.7" fill="#472877"/>
<rect x="362.6" y="676.6" width="4.7" height="4.7" fill="#482575"/>
<rect x="366.7" y="676.6" width="4.7" height="4.7" fill="#482072"/>
<rect x="370.8" y="676.6" width="4.7" height="4.7" fill="#471c6d"/>
<rect x="374.9" y="676.6" width="4.7" height="4.7" fill="#482072"/>
<rect x="379.0" y="676.6" width="4.7" height="4.7" fill="#482575"/>
<rect x="383.1" y="676.6" width="4.7" height="4.7" fill="#472877"/>
<rect x="387.2" y="676.6" width="4.7" height="4.7" fill="#472877"/>
<rect x="391.3" y="676.6" width="4.7" height="4.7" fill="#472877"/>
<rect x="395.4" y="676.6" width="4.7" height="4.7" fill="#472877"/>
<rect x="399.5" y="676.6" width="4.7" height="4.7" fill="#472877"/>
</g>
<g transform="translate(250,528) scale(0.16789)" filter="url(#vblur)">
<polygon points="20,20 150,20 190,140 140,230 20,260" fill="#440154"/>
<polygon points="650,20 940,20 940,120 800,180 770,240 810,330 870,430 790,450 720,370 680,250" fill="#440154"/>
<polygon points="770,240 860,140 940,120 940,360 880,380 820,330" fill="#306c8e"/>
<polygon points="790,220 875,150 940,140 940,330 870,350 815,280" fill="#22a884"/>
<polygon points="815,210 880,165 940,160 940,300 875,325 835,260" fill="#f0e525"/>
<polygon points="600,570 760,490 940,450 940,640 820,740 680,740 600,650" fill="#460f61"/>
<polygon points="220,440 330,420 370,460 300,540 230,530" fill="#482475"/>
<polygon points="340,650 420,480 560,230 720,440 600,600 440,700" fill="#26848d"/>
<polygon points="400,560 470,420 570,240 690,420 600,560 480,600" fill="#3dba74"/>
<polygon points="340,630 420,470 500,410 550,470 450,670 370,680" fill="#87d448"/>
<polygon points="350,610 430,460 500,420 530,470 440,650 380,655" fill="#eae525"/>
</g>
</g>
<rect x="279.79" y="557.59" width="98.22" height="98.22" fill="none" stroke="#ff0000" stroke-width="1.5"/>
<line x1="291.90" y1="606.70" x2="321.53" y2="606.70" stroke="#ff0000" stroke-width="1.4"/>
<line x1="337.08" y1="606.70" x2="365.90" y2="606.70" stroke="#ff0000" stroke-width="1.4"/>
<line x1="328.90" y1="569.05" x2="328.90" y2="598.52" stroke="#ff0000" stroke-width="1.4"/>
<line x1="328.90" y1="614.88" x2="328.90" y2="644.35" stroke="#ff0000" stroke-width="1.4"/>
<text x="328.90" y="546.86" font-family="'Liberation Sans', sans-serif" font-size="10" fill="#ff0000" text-anchor="middle" textLength="7.48" lengthAdjust="spacingAndGlyphs" stroke="#ff0000" stroke-width="0.1" xml:space="preserve">N</text>
<text x="265.06" y="610.30" font-family="'Liberation Sans', sans-serif" font-size="10" fill="#ff0000" text-anchor="middle" textLength="6.32" lengthAdjust="spacingAndGlyphs" stroke="#ff0000" stroke-width="0.1" xml:space="preserve">E</text>
<rect x="255.00" y="532.80" width="148.30" height="147.30" fill="none" stroke="#111" stroke-width="1.2"/>
<line x1="263.42" y1="680.10" x2="263.42" y2="683.60" stroke="#111" stroke-width="0.9"/>
<text x="263.42" y="696.30" font-family="'Liberation Sans', sans-serif" font-size="10" fill="#000" text-anchor="middle" textLength="14.74" lengthAdjust="spacingAndGlyphs" stroke="#000" stroke-width="0.1" xml:space="preserve">−4</text>
<line x1="251.50" y1="672.18" x2="255.00" y2="672.18" stroke="#111" stroke-width="0.9"/>
<text x="248.50" y="675.78" font-family="'Liberation Sans', sans-serif" font-size="10" fill="#000" text-anchor="end" textLength="14.74" lengthAdjust="spacingAndGlyphs" stroke="#000" stroke-width="0.1" xml:space="preserve">−4</text>
<line x1="296.16" y1="680.10" x2="296.16" y2="683.60" stroke="#111" stroke-width="0.9"/>
<text x="296.16" y="696.30" font-family="'Liberation Sans', sans-serif" font-size="10" fill="#000" text-anchor="middle" textLength="14.74" lengthAdjust="spacingAndGlyphs" stroke="#000" stroke-width="0.1" xml:space="preserve">−2</text>
<line x1="251.50" y1="639.44" x2="255.00" y2="639.44" stroke="#111" stroke-width="0.9"/>
<text x="248.50" y="643.04" font-family="'Liberation Sans', sans-serif" font-size="10" fill="#000" text-anchor="end" textLength="14.74" lengthAdjust="spacingAndGlyphs" stroke="#000" stroke-width="0.1" xml:space="preserve">−2</text>
<line x1="328.90" y1="680.10" x2="328.90" y2="683.60" stroke="#111" stroke-width="0.9"/>
<text x="328.90" y="696.30" font-family="'Liberation Sans', sans-serif" font-size="10" fill="#000" text-anchor="middle" textLength="6.36" lengthAdjust="spacingAndGlyphs" stroke="#000" stroke-width="0.1" xml:space="preserve">0</text>
<line x1="251.50" y1="606.70" x2="255.00" y2="606.70" stroke="#111" stroke-width="0.9"/>
<text x="248.50" y="610.30" font-family="'Liberation Sans', sans-serif" font-size="10" fill="#000" text-anchor="end" textLength="6.36" lengthAdjust="spacingAndGlyphs" stroke="#000" stroke-width="0.1" xml:space="preserve">0</text>
<line x1="361.64" y1="680.10" x2="361.64" y2="683.60" stroke="#111" stroke-width="0.9"/>
<text x="361.64" y="696.30" font-family="'Liberation Sans', sans-serif" font-size="10" fill="#000" text-anchor="middle" textLength="6.36" lengthAdjust="spacingAndGlyphs" stroke="#000" stroke-width="0.1" xml:space="preserve">2</text>
<line x1="251.50" y1="573.96" x2="255.00" y2="573.96" stroke="#111" stroke-width="0.9"/>
<text x="248.50" y="577.56" font-family="'Liberation Sans', sans-serif" font-size="10" fill="#000" text-anchor="end" textLength="6.36" lengthAdjust="spacingAndGlyphs" stroke="#000" stroke-width="0.1" xml:space="preserve">2</text>
<line x1="394.38" y1="680.10" x2="394.38" y2="683.60" stroke="#111" stroke-width="0.9"/>
<text x="394.38" y="696.30" font-family="'Liberation Sans', sans-serif" font-size="10" fill="#000" text-anchor="middle" textLength="6.36" lengthAdjust="spacingAndGlyphs" stroke="#000" stroke-width="0.1" xml:space="preserve">4</text>
<line x1="251.50" y1="541.22" x2="255.00" y2="541.22" stroke="#111" stroke-width="0.9"/>
<text x="248.50" y="544.82" font-family="'Liberation Sans', sans-serif" font-size="10" fill="#000" text-anchor="end" textLength="6.36" lengthAdjust="spacingAndGlyphs" stroke="#000" stroke-width="0.1" xml:space="preserve">4</text>
<text x="328.90" y="525.80" font-family="'Liberation Sans', sans-serif" font-size="13.2" fill="#000" text-anchor="middle" textLength="84.07" lengthAdjust="spacingAndGlyphs" stroke="#000" stroke-width="0.1" xml:space="preserve">Lineflux Map</text>
<text x="328.90" y="706.20" font-family="'Liberation Sans', sans-serif" font-size="10" fill="#000" text-anchor="middle" textLength="94.08" lengthAdjust="spacingAndGlyphs" stroke="#000" stroke-width="0.1" xml:space="preserve">s/b: 2.06 +/- 0.097</text>
<clipPath id="c3"><rect x="440.6" y="532.1" width="147.9" height="148.1"/></clipPath>
<g clip-path="url(#c3)">
<rect x="440.60" y="532.10" width="147.90" height="148.10" fill="#888" stroke="none" stroke-width="1" filter="url(#bg)"/>
<ellipse cx="504.68" cy="598.34" rx="29.47" ry="27.83" fill="url(#blob2)"/>
</g>
<rect x="465.39" y="557.09" width="98.22" height="98.22" fill="none" stroke="#ff0000" stroke-width="1.5"/>
<ellipse cx="505.33" cy="599.49" rx="40.93" ry="33.72" fill="none" stroke="#efc30f" stroke-width="1.6" transform="rotate(-8 505.33 599.49)"/>
<rect x="500.09" y="591.79" width="13.26" height="12.44" fill="none" stroke="#0000ff" stroke-width="1.3"/>
<line x1="477.50" y1="606.20" x2="506.31" y2="606.20" stroke="#ff0000" stroke-width="1.4"/>
<line x1="521.87" y1="606.20" x2="551.50" y2="606.20" stroke="#ff0000" stroke-width="1.4"/>
<line x1="514.50" y1="570.19" x2="514.50" y2="598.02" stroke="#ff0000" stroke-width="1.4"/>
<line x1="514.50" y1="613.57" x2="514.50" y2="643.85" stroke="#ff0000" stroke-width="1.4"/>
<text x="513.68" y="546.36" font-family="'Liberation Sans', sans-serif" font-size="10" fill="#ff0000" text-anchor="middle" textLength="7.48" lengthAdjust="spacingAndGlyphs" stroke="#ff0000" stroke-width="0.1" xml:space="preserve">N</text>
<text x="450.66" y="609.80" font-family="'Liberation Sans', sans-serif" font-size="10" fill="#ff0000" text-anchor="middle" textLength="6.32" lengthAdjust="spacingAndGlyphs" stroke="#ff0000" stroke-width="0.1" xml:space="preserve">E</text>
<rect x="440.60" y="532.10" width="147.90" height="148.10" fill="none" stroke="#111" stroke-width="1.2"/>
<line x1="449.02" y1="680.20" x2="449.02" y2="683.70" stroke="#111" stroke-width="0.9"/>
<text x="449.02" y="696.30" font-family="'Liberation Sans', sans-serif" font-size="10" fill="#000" text-anchor="middle" textLength="14.74" lengthAdjust="spacingAndGlyphs" stroke="#000" stroke-width="0.1" xml:space="preserve">−4</text>
<line x1="437.10" y1="671.68" x2="440.60" y2="671.68" stroke="#111" stroke-width="0.9"/>
<text x="433.50" y="675.28" font-family="'Liberation Sans', sans-serif" font-size="10" fill="#000" text-anchor="end" textLength="14.74" lengthAdjust="spacingAndGlyphs" stroke="#000" stroke-width="0.1" xml:space="preserve">−4</text>
<line x1="481.76" y1="680.20" x2="481.76" y2="683.70" stroke="#111" stroke-width="0.9"/>
<text x="481.76" y="696.30" font-family="'Liberation Sans', sans-serif" font-size="10" fill="#000" text-anchor="middle" textLength="14.74" lengthAdjust="spacingAndGlyphs" stroke="#000" stroke-width="0.1" xml:space="preserve">−2</text>
<line x1="437.10" y1="638.94" x2="440.60" y2="638.94" stroke="#111" stroke-width="0.9"/>
<text x="433.50" y="642.54" font-family="'Liberation Sans', sans-serif" font-size="10" fill="#000" text-anchor="end" textLength="14.74" lengthAdjust="spacingAndGlyphs" stroke="#000" stroke-width="0.1" xml:space="preserve">−2</text>
<line x1="514.50" y1="680.20" x2="514.50" y2="683.70" stroke="#111" stroke-width="0.9"/>
<text x="514.50" y="696.30" font-family="'Liberation Sans', sans-serif" font-size="10" fill="#000" text-anchor="middle" textLength="6.36" lengthAdjust="spacingAndGlyphs" stroke="#000" stroke-width="0.1" xml:space="preserve">0</text>
<line x1="437.10" y1="606.20" x2="440.60" y2="606.20" stroke="#111" stroke-width="0.9"/>
<text x="433.50" y="609.80" font-family="'Liberation Sans', sans-serif" font-size="10" fill="#000" text-anchor="end" textLength="6.36" lengthAdjust="spacingAndGlyphs" stroke="#000" stroke-width="0.1" xml:space="preserve">0</text>
<line x1="547.24" y1="680.20" x2="547.24" y2="683.70" stroke="#111" stroke-width="0.9"/>
<text x="547.24" y="696.30" font-family="'Liberation Sans', sans-serif" font-size="10" fill="#000" text-anchor="middle" textLength="6.36" lengthAdjust="spacingAndGlyphs" stroke="#000" stroke-width="0.1" xml:space="preserve">2</text>
<line x1="437.10" y1="573.46" x2="440.60" y2="573.46" stroke="#111" stroke-width="0.9"/>
<text x="433.50" y="577.06" font-family="'Liberation Sans', sans-serif" font-size="10" fill="#000" text-anchor="end" textLength="6.36" lengthAdjust="spacingAndGlyphs" stroke="#000" stroke-width="0.1" xml:space="preserve">2</text>
<line x1="579.98" y1="680.20" x2="579.98" y2="683.70" stroke="#111" stroke-width="0.9"/>
<text x="579.98" y="696.30" font-family="'Liberation Sans', sans-serif" font-size="10" fill="#000" text-anchor="middle" textLength="6.36" lengthAdjust="spacingAndGlyphs" stroke="#000" stroke-width="0.1" xml:space="preserve">4</text>
<line x1="437.10" y1="540.72" x2="440.60" y2="540.72" stroke="#111" stroke-width="0.9"/>
<text x="433.50" y="544.32" font-family="'Liberation Sans', sans-serif" font-size="10" fill="#000" text-anchor="end" textLength="6.36" lengthAdjust="spacingAndGlyphs" stroke="#000" stroke-width="0.1" xml:space="preserve">4</text>
<text x="514.50" y="525.80" font-family="'Liberation Sans', sans-serif" font-size="13.2" fill="#000" text-anchor="middle" textLength="76.85" lengthAdjust="spacingAndGlyphs" stroke="#000" stroke-width="0.1" xml:space="preserve">HSC(26.2) r</text>
<text x="514.50" y="706.30" font-family="'Liberation Sans', sans-serif" font-size="10" fill="#000" text-anchor="middle" textLength="111.09" lengthAdjust="spacingAndGlyphs" stroke="#000" stroke-width="0.1" xml:space="preserve">m:19.6  re:2.2"  s:0.7"</text>
<text x="514.50" y="718.30" font-family="'Liberation Sans', sans-serif" font-size="10" fill="#000" text-anchor="middle" textLength="99.13" lengthAdjust="spacingAndGlyphs" stroke="#000" stroke-width="0.1" xml:space="preserve">EWr: 0, PLAE: 0.217</text>
<text x="70.60" y="786.20" transform="matrix(1,0,0,1.07,0,-55.034)" font-family="'Liberation Mono', monospace" font-size="13.03" fill="#000" stroke="#000" stroke-width="0.16" xml:space="preserve">Separation</text>
<text x="70.60" y="800.40" transform="matrix(1,0,0,1.07,0,-56.028)" font-family="'Liberation Mono', monospace" font-size="13.03" fill="#000" stroke="#000" stroke-width="0.16" xml:space="preserve">Match score</text>
<text x="70.60" y="815.50" transform="matrix(1,0,0,1.07,0,-57.085)" font-family="'Liberation Mono', monospace" font-size="13.03" fill="#000" stroke="#000" stroke-width="0.16" xml:space="preserve">RA, Dec</text>
<text x="70.60" y="829.80" transform="matrix(1,0,0,1.07,0,-58.086)" font-family="'Liberation Mono', monospace" font-size="13.03" fill="#000" stroke="#000" stroke-width="0.16" xml:space="preserve">Spec z</text>
<text x="70.60" y="844.50" transform="matrix(1,0,0,1.07,0,-59.115)" font-family="'Liberation Mono', monospace" font-size="13.03" fill="#000" stroke="#000" stroke-width="0.16" xml:space="preserve">Photo z</text>
<text x="70.60" y="858.90" transform="matrix(1,0,0,1.07,0,-60.123)" font-family="'Liberation Mono', monospace" font-size="13.03" fill="#000" stroke="#000" stroke-width="0.16" xml:space="preserve">Est LyA rest-EW</text>
<text x="70.60" y="873.20" transform="matrix(1,0,0,1.07,0,-61.124)" font-family="'Liberation Mono', monospace" font-size="13.03" fill="#000" stroke="#000" stroke-width="0.16" xml:space="preserve">mag</text>
<text x="70.60" y="888.60" transform="matrix(1,0,0,1.07,0,-62.202)" font-family="'Liberation Mono', monospace" font-size="13.03" fill="#000" stroke="#000" stroke-width="0.16" xml:space="preserve">P(LAE)/P(OII)</text>
<text x="287.30" y="779.10" transform="matrix(1,0,0,1.07,0,-54.537)" font-family="'Liberation Mono', monospace" font-size="13.03" fill="#0000ff" stroke="#0000ff" stroke-width="0.16" xml:space="preserve">0.708513"</text>
<text x="287.30" y="793.50" transform="matrix(1,0,0,1.07,0,-55.545)" font-family="'Liberation Mono', monospace" font-size="13.03" fill="#0000ff" stroke="#0000ff" stroke-width="0.16" xml:space="preserve">1.000</text>
<text x="287.30" y="808.20" transform="matrix(1,0,0,1.07,0,-56.574)" font-family="'Liberation Mono', monospace" font-size="13.03" fill="#0000ff" stroke="#0000ff" stroke-width="0.16" xml:space="preserve">208.140502, 55.456924</text>
<text x="287.30" y="822.50" transform="matrix(1,0,0,1.07,0,-57.575)" font-family="'Liberation Mono', monospace" font-size="13.03" fill="#0000ff" stroke="#0000ff" stroke-width="0.16" xml:space="preserve">N/A</text>
<text x="287.30" y="837.60" transform="matrix(1,0,0,1.07,0,-58.632)" font-family="'Liberation Mono', monospace" font-size="13.03" fill="#0000ff" stroke="#0000ff" stroke-width="0.16" xml:space="preserve">N/A</text>
<text y="854.00" transform="matrix(1,0,0,1.07,0,-59.780)" font-family="'Liberation Mono', monospace" font-size="13.03" fill="#0000ff" stroke="#0000ff" stroke-width="0.16" xml:space="preserve"><tspan x="287.30">0.53(±0.12)</tspan><tspan x="373.30" font-style="italic">Å</tspan></text>
<text x="287.30" y="870.00" transform="matrix(1,0,0,1.07,0,-60.900)" font-family="'Liberation Mono', monospace" font-size="13.03" fill="#0000ff" stroke="#0000ff" stroke-width="0.16" xml:space="preserve">19.61(19.60,19.62)R</text>
<text x="287.00" y="886.40" font-family="'Liberation Sans', sans-serif" font-size="13.1" fill="#0000ff" text-anchor="start" textLength="37.48" lengthAdjust="spacingAndGlyphs" stroke="#0000ff" stroke-width="0.1" xml:space="preserve">0.212</text>
<text x="327.50" y="881.10" font-family="'Liberation Sans', sans-serif" font-size="8.5" fill="#0000ff" text-anchor="start" textLength="24.33" lengthAdjust="spacingAndGlyphs" stroke="#0000ff" stroke-width="0.06" xml:space="preserve">0.288</text>
<text x="327.50" y="890.00" font-family="'Liberation Sans', sans-serif" font-size="8.5" fill="#0000ff" text-anchor="start" textLength="24.33" lengthAdjust="spacingAndGlyphs" stroke="#0000ff" stroke-width="0.06" xml:space="preserve">0.164</text>
<text x="938.50" y="821.40" transform="matrix(1,0,0,1.07,0,-57.498)" font-family="'Liberation Mono', monospace" font-size="13.03" fill="#000" stroke="#000" stroke-width="0.16" xml:space="preserve">Phot z plot not available.</text>
</svg>
</body></html>
